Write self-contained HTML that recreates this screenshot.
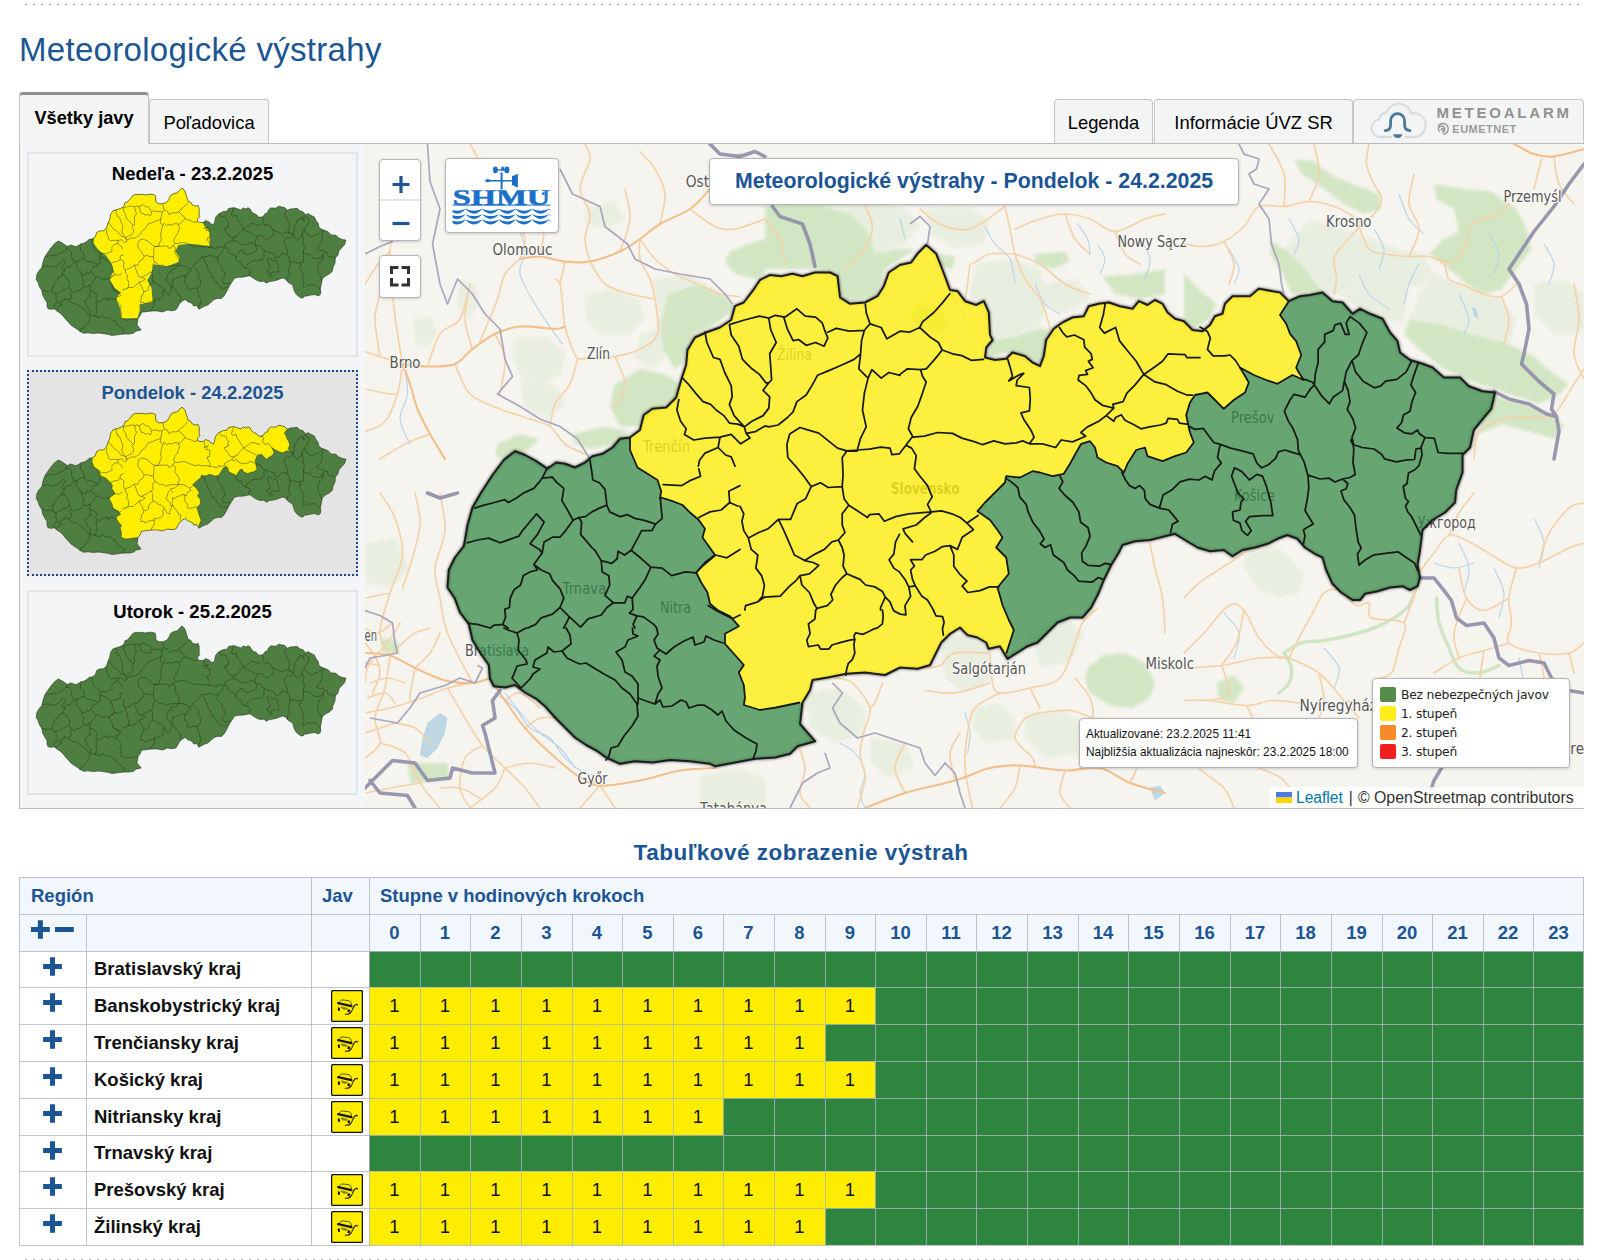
<!DOCTYPE html>
<html lang="sk">
<head>
<meta charset="utf-8">
<title>Meteorologické výstrahy</title>
<style>
html,body{margin:0;padding:0;background:#fff;}
body{width:1600px;height:1260px;position:relative;overflow:hidden;font-family:"Liberation Sans",Arial,Helvetica,sans-serif;color:#000;}
.abs{position:absolute;}
.dots{position:absolute;left:25px;width:1560px;height:1px;background:repeating-linear-gradient(90deg,#a8a8a8 0,#a8a8a8 2px,transparent 2px,transparent 8px);}
h1{position:absolute;left:19px;top:30px;margin:0;font-weight:400;font-size:33px;line-height:40px;color:#1b5594;white-space:nowrap;letter-spacing:0.3px;}
.tab{position:absolute;box-sizing:border-box;border:1px solid #c2c6c9;border-bottom:none;background:#f3f5f5;border-radius:4px 4px 0 0;font-size:18.4px;line-height:45px;text-align:center;white-space:nowrap;top:99px;height:45px;}
.tab.act{top:92px;height:52px;border-top:3px solid #8d8f91;font-weight:700;font-size:18.2px;line-height:47px;z-index:3;}
#panel{position:absolute;left:19px;top:143px;width:1565px;height:666px;box-sizing:border-box;border:1px solid #b9bcbf;background:#f3f5f6;}
.card{position:absolute;left:27px;width:331px;height:205px;box-sizing:border-box;border:2px solid #dfe5ec;background:#f3f5f6;}
.card.sel{border:2px dotted #1a4888;background:#e5e4e4;}
.card .t{position:absolute;left:0;right:0;top:9px;text-align:center;font-weight:700;font-size:18.5px;line-height:22px;}
.card.sel .t{color:#1b5594;}
#map{position:absolute;left:365px;top:144px;width:1219px;height:664px;overflow:hidden;background:#f2efe9;}
h2{position:absolute;left:0;width:1602px;top:839px;margin:0;text-align:center;font-size:22.5px;letter-spacing:0.5px;line-height:28px;font-weight:700;color:#1b5594;}
</style>
</head>
<body>
<div class="dots" style="top:4px"></div>
<h1>Meteorologické výstrahy</h1>

<div class="tab act" style="left:19px;width:130px;">Všetky javy</div>
<div class="tab" style="left:149px;width:120px;">Poľadovica</div>
<div class="tab" style="left:1054px;width:99px;">Legenda</div>
<div class="tab" style="left:1154px;width:199px;">Informácie ÚVZ SR</div>
<div class="tab" style="left:1353px;width:231px;" id="malarm"></div>
<svg class="abs" style="left:1353px;top:99px;z-index:4" width="231" height="45" viewBox="1353 99 231 45">
<path d="M1390.500 137 H1380 A8.800 8.800 0 0 1 1379 119.500 A9 9 0 0 1 1386.500 112.500 A13 13 0 0 1 1411.500 113.500 A10.500 10.500 0 0 1 1416 137 H1405" fill="none" stroke="#dadcdd" stroke-width="2.3" stroke-linecap="round"/>
<path d="M1385.200 130.600 C1388.800 130.400 1390.600 128.500 1390.600 125 L1390.600 120.600 A7 7 0 0 1 1404.600 120.600 L1404.600 125 C1404.600 128.500 1406.400 130.400 1410 130.600" fill="none" stroke="#4b7a98" stroke-width="2.8" stroke-linecap="round"/>
<path d="M1393.300 134.300 H1402.300 A4.500 3.800 0 0 1 1393.300 134.300Z" fill="#4b7a98"/>
<text x="1436.500" y="117.800" font-family="'Liberation Sans',Arial,sans-serif" font-weight="700" font-size="15" fill="#909294" textLength="132.500" lengthAdjust="spacing">METEOALARM</text>
<g fill="none" stroke="#9a9c9e" stroke-width="1.5" stroke-linecap="round"><path d="M1438.200 126.500 A5.300 5.300 0 1 1 1443.500 134"/><path d="M1439.500 131.500 A3.200 3.200 0 1 1 1443 132"/><path d="M1441.500 130 A1.200 1.200 0 1 1 1443 130.500"/></g>
<text x="1452.300" y="132.500" font-family="'Liberation Sans',Arial,sans-serif" font-weight="700" font-size="11" fill="#9a9c9e" textLength="64" lengthAdjust="spacing">EUMETNET</text>
</svg>

<div id="panel"></div>
<div class="card" style="top:152px;"><div class="t">Nedeľa - 23.2.2025</div></div>
<div class="card sel" style="top:370px;height:206px;"><div class="t" style="top:10px">Pondelok - 24.2.2025</div></div>
<div class="card" style="top:590px;"><div class="t">Utorok - 25.2.2025</div></div>

<svg class="abs" style="left:0;top:0;pointer-events:none" width="365" height="808" viewBox="0 0 365 808">
<path d="M42.14 265.97 L43.13 261.67 L44.89 256.68 L47.69 252.48 L51.29 247.59 L54.84 243.43 L58.27 241.06 L61.13 242.33 L64.3 244.31 L67.48 246.69 L70.13 245.01 L72.68 245.53 L75.54 246.77 L78.55 245.48 L80.85 243.78 L83.82 243.25 L86.85 241.58 L89.19 239.19 L92.14 238.97 L95.19 236.96 L96.56 232.68 L99.21 231.03 L103.24 230.87 L106.33 228.14 L108.09 223.15 L109.8 218.89 L110.44 214.56 L112.84 211.06 L116.2 209.8 L120.32 208.57 L123.73 206.58 L125.07 202.65 L127.71 201.72 L130.44 198.59 L132.83 195.46 L135.84 194.18 L139.09 194.71 L142.44 194.2 L145.32 195.06 L149.04 194.19 L153.43 194.44 L155.56 195.63 L155.93 201.84 L158.75 203.83 L163.16 203.7 L166.92 202.08 L168.93 199.28 L170.63 195.4 L174.03 193.41 L177.35 192.87 L179.34 190.45 L182.03 188.04 L184.81 190.75 L186.38 195.55 L188.23 201.47 L190.41 201.94 L192.43 204.96 L195.65 206.24 L197.93 205.27 L199.2 208.62 L199.18 215.16 L199.82 216.65 L197.85 218.72 L197.33 221.6 L200.22 222.49 L203.51 222.32 L205.46 220.6 L209.05 221.88 L211.14 223.82 L213.27 225.02 L214.55 222.18 L215.53 217.53 L217.94 214.41 L220.59 212.72 L223.6 211.44 L226.93 211.25 L228.56 208.43 L231.53 207.9 L234.47 207.69 L237.69 208.94 L241.3 209.9 L243.27 207.8 L245.75 209.04 L248.03 207.72 L250.16 208.94 L251.48 211.54 L253.56 213.49 L256.1 214.33 L258.49 217.02 L261.4 217.53 L263.7 215.86 L265.31 213.39 L267.54 212.82 L268.44 209.96 L270.76 207.88 L272.96 208.01 L275.88 208.17 L278.58 206.17 L282.55 207.09 L284.72 207.59 L287.15 210.25 L290.51 208.99 L293.45 208.8 L297.15 208.28 L299.93 210.97 L302.83 211.51 L305.57 214.95 L307.85 213.62 L310.69 215.23 L314.26 216.89 L316.22 220.98 L318.27 223.62 L318.81 226.94 L321.61 229.27 L325.2 230.58 L328.06 231.81 L331.2 234.9 L335.94 235.16 L338.36 237.83 L342.29 239.5 L345.92 240.08 L344.53 244.74 L342.6 246.78 L339.09 250.6 L337.68 255.61 L335.36 257.66 L335.06 262.73 L332.92 267.69 L332.36 271.3 L329.27 274.03 L325.49 276 L322.39 278.73 L321.32 284.49 L320.34 288.79 L320.86 292.46 L319.98 294.94 L317.72 295.91 L315.59 294.69 L311.91 294.86 L308.19 295.73 L304.49 296.28 L302.93 297.99 L300.73 297.87 L297.55 295.51 L295.16 292.85 L293.55 288.75 L292.68 285.07 L290.54 283.87 L287.73 281.88 L285.68 279.24 L282.82 277.97 L279.83 278.91 L276.82 280.2 L273.1 281.07 L269.4 281.59 L266.37 283.22 L263.93 281.28 L259.87 281.4 L256.28 280.12 L252.75 277.75 L249.93 275.79 L246.97 276.32 L242.51 277.18 L238.11 277.28 L234.38 278.17 L233.18 280.29 L230.74 283.78 L228.32 288.01 L226.65 291.55 L224.17 295.77 L221.46 298.53 L217.8 298.32 L214.06 299.57 L210.97 302.3 L207.87 305.03 L204.89 305.94 L201.85 307.6 L198.82 309.27 L196.84 305.49 L193.52 306.06 L192.87 304.2 L190.41 302.6 L187.53 301.72 L185.46 299.42 L182.43 301.08 L179.71 303.46 L178.07 306.28 L176.05 309.8 L172.33 310.69 L167.23 310.03 L162.72 311.96 L156.91 310.91 L151.39 310.98 L145.86 311.74 L141.43 312.22 L140.53 315.08 L138.12 318.58 L137.03 324.71 L138.72 326.95 L141.12 329.99 L135.92 331.16 L133.6 333.24 L129.15 334.06 L123.28 334.11 L117.36 334.86 L111.45 335.6 L110.03 334.83 L104.22 333.74 L98.39 333.07 L93.23 333.51 L88.13 332.85 L83.7 333.35 L79.77 331.3 L77.33 329.33 L74.13 327.35 L70.98 325 L68.23 321.94 L65.47 318.88 L62.74 315.44 L60.29 313.15 L57.12 311.14 L54.32 308.8 L51.35 309.37 L48.1 308.81 L47.11 306.6 L46.99 302.58 L44.63 298.82 L42.65 295.07 L41.84 290.32 L39.46 286.9 L38.23 282.85 L36.22 279.45 L36.9 274.4 L38.92 270.88 L41.69 267.75Z" fill="#4f7f40"/>
<path d="M95.19 236.96 L96.56 232.68 L99.21 231.03 L103.24 230.87 L106.33 228.14 L108.09 223.15 L109.8 218.89 L110.44 214.56 L112.84 211.06 L116.2 209.8 L120.32 208.57 L123.73 206.58 L125.07 202.65 L127.71 201.72 L130.44 198.59 L132.83 195.46 L135.84 194.18 L139.09 194.71 L142.44 194.2 L145.32 195.06 L149.04 194.19 L153.43 194.44 L155.56 195.63 L155.93 201.84 L158.75 203.83 L163.16 203.7 L166.92 202.08 L168.93 199.28 L170.63 195.4 L174.03 193.41 L177.35 192.87 L179.34 190.45 L182.03 188.04 L184.81 190.75 L186.38 195.55 L188.23 201.47 L190.41 201.94 L192.43 204.96 L195.65 206.24 L197.93 205.27 L199.2 208.62 L199.18 215.16 L199.82 216.65 L197.85 218.72 L197.33 221.6 L200.22 222.49 L203.51 222.32 L202.2 222.23 L209.75 231.94 L209.75 245.95 L190.34 243.8 L178.48 244.88 L175.25 251.34 L179.56 257.81 L178.48 262.12 L166.62 266.44 L153.69 264.28 L151.53 272.91 L147.22 280.45 L151.53 288 L152.61 302.02 L139.67 304.17 L139.67 310.64 L137.52 318.19 L121.34 318.19 L120.27 308.48 L115.95 298.78 L120.27 292.31 L114.88 288 L109.48 279.38 L113.8 270.75 L110.56 262.12 L106.25 255.66 L98.7 250.27 L93.31 242.72 L94.39 237.33Z" fill="#ffee00"/>
<path d="M45.52 256.89 L48.02 256.22 L51.38 255.59 L54.44 254.95 L55.47 255.82 L58.04 254.6 L60.02 253.34 L63.14 252.15 L64.89 250.36 L65.77 249.3 L66.98 247.19 L67.89 246.16 M65.77 249.3 L68.8 249.21 L69.8 250.63 L71.92 252.64 L71.15 256.14 L72.63 258.96 L74.1 262.03 L75.81 261.32 L77.73 261.16 L79.74 259.91 L82 258.93 L84.24 258.24 L84.94 260.2 L87.88 261.73 L90.1 261.3 L92.24 262.5 L94.95 263.2 L98.16 264.48 L100.19 262.94 L100.07 259.94 L99.98 256.94 M80.05 244.93 L80.4 248.49 L80.54 250.68 L82.42 251.6 L83.95 253.6 L84.24 258.24 M42.74 266.82 L45.8 266.18 L49.14 265.81 L52.33 267.36 L57.95 265.75 L59.12 264.19 L63.53 259.55 L65.58 262.11 L63.45 265.54 L61.09 268.14 L63.75 269.91 L64.5 271.03 M64.5 271.03 L65.25 267.82 L67.79 266.59 L69.98 266.72 L71.73 264.9 L74.1 262.03 M64.5 271.03 L61.86 274.17 L62.84 275.85 L60.62 276.28 L58.62 277.24 L57.65 279.92 L55.67 281.18 L54.41 283.55 L53.99 286.26 L52.58 286.73 L52.72 288.92 L51.77 291.05 M41.64 290.19 L44.37 290.63 L48.03 291.88 M48.17 291.89 L49.01 291.15 L51.77 291.05 L53.29 292.18 M61.86 274.17 L63.93 275.91 L66.35 277.15 L67.06 279.08 L69.11 281.67 L70.06 284.42 L68.79 287.09 L71.38 289.96 L74.48 293.13 L76.82 290.82 L80.72 289.93 L82.51 287.85 L84.49 286.6 L82.16 284.29 L83.71 281.38 L83.61 278.64 L81.74 277.46 L81.64 274.17 L80.16 271.35 L79.14 270.22 L76.05 266.24 L76.55 262.72 L75.81 261.32 M68.79 287.09 L66.49 288.87 L63.12 289.76 L61.37 291.58 L59.03 292.5 M71.38 289.96 L69.56 293.09 M81.64 274.17 L84.63 275.15 L86.35 273.91 L86.74 271.72 L88.6 272.93 L90.58 271.68 L93.05 267.71 L93.96 266.14 L96.97 266.31 L98.16 264.48 M90.58 271.68 L93.48 274.31 L96.06 276.89 L99.35 277.34 L101.97 279.67 L106.13 278.82 L109.13 279.25 L111.17 277.45 L115.19 274.42 M96.06 276.89 L94.22 280.34 L92.44 282.68 L90.07 285.54 L88.73 284.91 L87.8 286.78 L84.49 286.6 M90.07 285.54 L90.14 288.83 L89 289.84 L91.14 290.78 L89.89 293.18 L90.35 294.25 M91.14 290.78 L93.03 291.17 L95.94 293.52 L96.76 294.61 M138.91 240.6 L142.04 238.86 L144.74 239.82 L147.44 240.79 L150.03 243.11 L152.66 245.44 L155.36 246.4 L158.39 246.31 L161.97 246.25 L165.28 245.88 L168.01 246.3 L168.46 248.24 L170.67 248.1 L172.71 245.74 L174.51 243.66 M138.91 240.6 L137.92 243.54 L137.96 247.35 L140.26 250.21 L142.32 253.03 L144.31 256.16 L147.13 255.22 L149.24 256.7 L153.38 256.67 M155.36 246.4 L153.87 248.24 L153.85 253.15 L153.38 256.67 L153.73 260.24 L155 262.2 L152.92 264.55 L152.73 267.8 L153.42 270.01 L151.37 272.08 L152.35 274.32 L152.78 276.52 L152.3 279.75 L153.28 282.01 M144.31 256.16 L142.47 259.61 L139.93 260.8 L137.73 265.33 L134.16 265.13 L135.38 267.93 L136.83 271.82 L138.24 275.71 L141.16 277.5 L144.28 275.78 L147.11 274.57 L149.43 272.52 L151.37 272.08 M134.16 265.13 L130.99 267.69 L128.21 268.61 L125.07 270.06 L123.85 267.81 L123.46 265.05 L124.14 262.94 L123.16 260.68 M125.07 270.06 L125.7 273.38 L127.54 275.11 L126.76 278.87 L128.3 281.14 L128.96 283.91 L128.22 287.12 L126.74 288.7 L123.11 289.57 L122.81 290.83 M126.74 288.7 L128.75 287.44 L133.42 287.41 L136.07 284.86 L138.34 283.07 L139.53 281.77 L142.31 281.4 L145.21 279.09 L143.59 278.19 L141.16 277.5 M139.53 281.77 L139.93 284.52 L142 286.82 L143.18 290.17 L143.92 291.55 L146.98 290.9 L148.72 289.37 L148.25 287.72 L149.79 285.07 L151.85 283.01 L153.28 282.01 M143.92 291.55 L143.69 292 M162.5 293.05 L162.57 292.33 L164.12 289.42 L163.39 287.75 L161.28 286.27 L158.56 285.56 L157.02 283.85 L155.14 282.93 L153.28 282.01 M155 262.2 L157.08 263.68 L160.26 266.04 L160.86 265.26 L163.63 265.15 L165.14 267.38 L168.49 266.24 L172.4 265.64 L175.7 265.53 L178.99 265.46 L178.03 263.22 L179.53 261.13 L178.35 257.77 L176.31 254.93 L174.8 252.69 L175.55 248.9 L174.33 246.65 L172.71 245.74 M178.99 265.46 L182.05 265.34 L185.01 266.34 L187.4 267.55 L189.24 269.28 L191.03 271.3 L187.63 273.29 L186.05 276.75 L183.92 275.53 L181.71 275.69 L179.43 276.9 L176.62 277.85 L175.46 279.15 L172.15 278.97 M189.24 269.28 L192.64 267.29 M178.97 265.72 L176.99 266.97 L174.38 269.01 L170.48 269.89 L170.96 271.26 L173.01 273.84 M169.3 271.45 L168.07 273.57 L167.33 277.07 L165.86 278.62 L167.1 281.13 L168.67 282.32 L170.18 284.58 L171.17 286.82 L171.54 289.54 L169.74 292.18 L169.78 293.46 M166.24 293.26 L165.41 290.86 L164.12 289.42 M172.15 278.97 L173.16 280.91 L171.98 281.95 L172.38 284.71 L173.09 286.64 L171.17 286.82 M173.09 286.64 L174.84 289.73 L176.42 290.92 L177.9 293.74 L178.03 293.92 M183.92 275.53 L184.87 278.31 L184.68 281.56 L186.19 283.85 L188.26 286.12 L186.8 287.4 L188.33 289.41 L191.93 289.06 L194.74 288.14 L197.49 288.29 M115.86 209.69 L116.24 212.7 L117.89 217.16 L119.79 217.82 L120.94 221.69 L122.62 225.59 L122.72 228.88 L121.77 231.01 L122.96 234.33 L125.78 237.77 M123.12 207.92 L123.47 210.93 L125.51 214.3 L126.37 218.18 L128.96 221.06 L131.06 222.81 L132.82 225.35 L133.66 225.39 M123.12 207.92 L127.59 206.8 L132.04 205.94 L134.76 206.65 L136.71 205.94 L139.42 206.65 L143.13 204.41 L145.47 206.69 L148.46 207.15 L150.3 208.88 L150.98 211.36 L151.68 213.32 L150.46 215.69 L148.03 214.48 L145.24 215.14 L143.17 213.4 L141.49 213.56 L140.04 210.23 L139.16 206.63 M134.76 206.65 L135.09 209.95 L136.51 213.84 L134.42 217.01 L134.49 220.27 L134.53 224.63 L133.66 225.39 L131.87 227.47 L133.69 229.49 L133.24 232.72 L131.44 234.8 L128.07 236.24 L125.78 237.77 M151.78 211.7 L154.3 210.73 L158.11 211.76 L162.52 211.75 L164.26 209.95 L163.34 206.62 L163.22 204.17 M162.52 211.75 L161.52 214.68 L161.01 218.49 L159.01 220.01 L155.35 221.43 L151.42 222.84 L148.04 224.02 L146.22 226.91 L144.4 229.54 L141.57 231.3 L140.28 234.22 L138.55 235.75 L135.67 237.77 L132.92 238.17 L131.82 237.82 L128.98 239.32 L126.2 239.69 L125.78 237.77 M164.26 209.95 L167.48 211.21 L168.95 214.58 L172.91 212.59 M161.01 218.49 L160.23 222.81 L162.79 225.66 L164.04 223.28 L166.62 225.87 L168.94 224.37 L172.17 225.37 M162.79 225.66 L161.45 229.94 L160.61 234.81 L161.41 239.76 L159.58 242.92 L158.28 246.65 L154.97 246.47 M108.5 222.62 L110.04 224.36 L112.08 227.18 L114.13 229.77 L116.28 230.7 L117.82 232.41 L119.95 234.16 L121.46 236.43 L123.9 236.85 L125.78 237.77 M107.05 228.82 L106.32 231.77 L107.22 235.08 L108.73 237.37 L108.1 238.96 L110.76 240.74 L114.07 240.37 L118.47 240.36 L121.79 239.73 L124.38 242.61 L127.23 241.11 L126.2 239.69 M118.47 240.36 L117.74 243.31 L113.81 244.72 L112.05 246.8 L111.66 248.38 M117.74 243.31 L119.81 245.61 L121.41 246.25 L122.37 248.98 M188.08 202.56 L185.73 205.14 L183.12 207.72 L179.65 210.26 L178.74 211.84 L181.59 214.73 L183.95 216.49 L184.94 218.73 L187.89 220 L190.61 220.67 L193.25 222.18 L196.83 222.12 M172.91 212.59 L175.65 213.03 L178.74 211.84 M184.94 218.73 L182.59 221.33 L179.94 223.91 L178.29 224.08 L174.47 223.61 L172.18 225.11 M178.29 224.08 L178.73 225.99 L179.72 227.71 L178.45 230.89 L176.85 234.61 L174.73 237.78 L173.72 241 L174.95 243.52 L178.28 243.41 L182.17 242.55 L186.54 243.06 L189.21 244.57 L192.98 245.89 L195.13 246.82 L198.5 245.91 L201.72 246.93 L205.02 246.82 L206.98 246.38 L208.86 247.33 L212.69 247.54 L216.46 248.83 L218.23 246.75 L221.5 247.48 L225.43 246.05 L224.12 244.9 L226.14 243.38 L229.54 241.92 L231.8 240.41 L234.15 238.37 M203.97 222.52 L204.63 225.29 L205.06 227.47 L203.9 228.77 L207.28 227.07 L208.41 226.84 L206.37 228.64 L205.98 230.25 L209.81 231.02 L209.89 234.31 L209.42 237.8 L206.9 238.21 L207.64 240.17 L209.61 243.53 L210.35 245.49 L208.86 247.33 M219.6 214.12 L220.59 215.81 L221.64 216.97 L223.86 216.54 L226.53 218.06 L226.67 220.24 L228.46 222.26 L228.66 223.9 L227.52 224.36 L228.78 226.35 L226.54 227.04 L227.03 228.17 L224.56 228.29 L224.18 229.64 L226.28 231.39 L227.8 233.65 L228.8 235.62 L230.89 237.37 L234.15 238.37 L233.92 237.28 L236.98 236.63 L238.24 234.23 L240.56 232.18 L243.5 229.09 L246.05 227.61 L249.19 225.57 L250.95 223.52 L255.88 224.06 L256.39 224.9 L260.22 225.11 M233.44 207.8 L232.69 211.05 L231.39 214.78 L232.67 216.48 L236.04 215.04 L236.93 218.9 L238.97 221.75 L241.5 225.14 L243.5 229.09 L246.65 231.45 L249.88 232.44 L253.07 234.51 L255.76 235.77 L257.39 235.86 M231.8 240.41 L233.93 242.16 L234.52 241.12 L236.21 240.4 L237.22 242.08 L239.89 243.6 L241.73 244.81 L244.25 244.4 L247.56 244.03 L249.23 243.57 L249.86 242.24 L252.59 242.68 L253.09 243.78 L255.26 244.2 M304.79 215.72 L307.43 217.75 L309.46 220.6 L307.9 223.8 L306.6 226.98 L304.6 228.5 L305.49 231.83 L307.53 234.65 L310.72 236.75 L312.66 236.3 L314.11 235.02 L317.45 234.68 L320.29 232.66 L322.15 229.48 M304.6 228.5 L302.74 231.68 L302.06 234.34 L302.98 237.13 L303.35 240.43 L302.4 242.56 L303.88 245.37 L304.54 248.11 L303.3 250.78 L303.73 252.98 M323.41 254.63 L324.69 251.97 L323.11 250.81 L322.62 249.68 L320.92 250.69 L318.74 250.27 L316.62 248.79 L318.09 247.24 L318.75 245.1 L320.74 244.11 L321.45 241.44 L322.7 238.78 L321.45 236.53 L322.45 233.85 L324.02 230.13 M324.69 251.97 L327.42 252.39 L328.26 256.53 L331 256.95 L335.39 257.19 M289.77 260.92 L288.91 257.07 L287.43 253.7 L287.36 250.44 L286.17 247.09 L284.93 244.84 L284 242.05 L285.83 238.9 L287.04 237.34 L290.26 238.33 L292.04 235.99 L293.22 234.95 L292.71 234.11 L290.57 233.18 L289.75 233.13 M293.22 234.95 L295.23 238.32 L297.29 240.65 L298.48 238.79 L301.35 237.03 L302.06 234.34 M293.22 234.95 L293.67 231.72 L294.68 228.49 L294.9 224.7 L296.96 222.63 L297.09 220.46 L299.61 219.5 L300.26 217.91 L301.93 217.45 L303.11 220.8 L304.23 220.86 L303.57 217.54 L304.79 215.72 M260.74 216.25 L262.85 217.73 L263.56 219.66 L262.55 222.89 L264.08 224.86 L267.39 225.05 L269.04 224.88 L270.58 226.59 L271.83 228.84 M201.32 256.88 L202.89 258.07 L204.73 259.8 L205.13 262.56 L206.9 264.84 L207.33 267.04 L208.53 270.1 L210.32 272.64 L211.55 275.18 L210.36 276.48 L211.67 277.63 L213.36 276.91 L214 279.94 L216.92 282.28 L217.87 284.52 L219.71 286.25 L220.99 287.95 L224.81 288.45 L226.79 287.2 L228.13 287.82 M217.27 257.22 L217.99 258.92 L216.8 260.74 L218.32 262.74 L220.65 265.05 L222.16 267.87 L222.51 270.88 L224.61 272.63 L225.03 275.09 L223.76 277.75 L222.28 279.85 L222.4 282.33 L223.98 283.49 L227.27 283.94 L228.95 283.22 L230.58 283.6 M235.43 257.16 L236.39 259.39 L237.41 261.08 L239 261.98 L240.42 261.24 L241.71 262.68 L241.83 265.16 L243.11 266.86 L245.8 268.09 L248.52 268.79 L249.77 270.49 L251.05 272.19 L249.36 272.94 L248.67 275.34 M245.8 268.09 L247.11 264.35 L249.95 262.88 L252.27 260.83 L255.07 260.17 L257.8 260.59 L259.77 259.59 L261.63 260.8 L262.61 258.12 L264.64 256.06 L263.65 254.37 L264.37 251.68 L264.69 250.63 L262.82 249.97 L261.28 247.7 L260.02 245.71 L257.54 245.87 L255.95 244.96 M264.69 250.63 L267.64 251.87 L270.9 252.86 L274.13 253.88 L275.08 256.64 L276.38 258.08 L278.33 257.38 L280.63 255.59 L281.56 253.75 L283.52 253.31 L285.13 253.95 L287.83 254.91 M268.42 257.64 L270.55 258.86 L272.6 261.42 L274.89 259.92 L276.5 260.53 L277.42 263.31 L278.51 268.29 L278.85 272.11 L275.83 271.94 L271.98 272.02 L270.79 273.29 L272.27 276.11 L271.11 277.41 L269.55 275.95 L269.12 273.75 L267.24 272.83 L267.12 270.38 L269.35 269.95 L269.74 267.8 L270.65 266.77 L269.08 265.03 L268.15 262.27 L267.46 260.02 L268.42 257.64 M289.82 260.98 L293.27 262.28 L295.92 262.2 L297.61 263.4 L299.85 262.65 L302.07 262.34 L303.64 261.55 L303.2 258.04 L303.66 254.14 L303.51 252.82 L302.94 251.48 M289.82 260.98 L289.84 264.71 L289.17 268.16 L288.35 271.16 L289.54 273.41 L290.52 275.21 L288.5 276.2 L287.58 276.79 L287.92 278.55 L287.35 280.7 M299.85 262.65 L301.33 264.04 L300.77 265.55 L299.21 266.1 L299.94 268.76 L301.56 271.03 L302.75 273.28 L302.96 277.21 L303.38 281.16 L304.16 282.95 L302.97 284.62 L303.22 287.89 L305.06 286.49 L307.79 285.13 L311.76 284.88 L314.86 284.65 L316.96 286.28 L319.49 288.16 L320.24 290.39 M303.51 252.82 L306.09 253.84 L309.57 254.47 L311.68 256.1 L312.48 257.48 L315.94 258.55 L318.6 258.23 L321.24 258.18 L321.86 255.16 L323.39 255.01 L323.51 256.99 L322.46 259.99 L321.06 261.22 L319.26 261.99 L318.64 265.01 L317.48 265.81 L317.95 269.33 L318.78 270.25 L317.82 271.5 L318.4 273.28 L319.4 274.64 L320.57 277.32 L321.73 280 M52.06 292.11 L53.2 292.75 L55.78 293.77 L56.25 295.83 L55.79 298.71 L57.96 301.74 L58.18 302.92 L55.23 303.33 L54.21 305.6 L53.56 306.73 L56.02 309.77 M55.78 293.77 L58.5 292.47 L58.5 292.47 M70.23 293.12 L71.25 295.22 L71.39 297.84 L68.64 299.72 L66.28 299.88 L64.61 298.33 L64.22 300.06 L60.59 301.89 L59.89 303.88 L61.9 304.58 L59.77 305.91 L58.81 307.31 L56.02 309.77 M68.64 299.72 L69.99 301.83 L72.26 303.12 L73.69 303.78 L75.46 303.59 L77.72 305.17 L80.54 307.07 L83.66 308.99 L85.57 311.42 L87.81 313.29 L89.68 316.3 L89.77 319.8 L87.85 322.6 L85.34 325.36 L83.42 328.16 L81.34 328.63 L80.62 330.91 L79.67 332.02 M96.67 294.6 L97.01 296.37 L95.74 298.04 L96.48 300.41 L97.32 301.03 M89.62 294.21 L89.7 295.96 L91.13 296.62 L88.13 297.61 L87.14 299.59 L84.42 300.89 L86.04 303.31 L86.72 306.84 L88.7 308.11 L90.32 310.53 L90.08 314.58 L92.37 315.58 L94.95 316.6 L96 313.75 L97.27 312.08 L96.3 308.54 L96.18 305.62 L97.16 303.93 L95.47 302.67 L97.32 301.03 M97.32 301.03 L99.01 302.29 L101.47 300.39 L104.5 298.82 L107.2 297.81 L107.65 300.16 L110.33 299.44 L111.02 297.73 L113.29 299.02 L115.87 300.04 M90.08 314.58 L89.98 316.32 M94.95 316.6 L96.48 315.52 L97.24 317.6 L99.89 317.46 L102.62 315.87 L104.05 316.53 L104.83 318.31 L107.51 317.59 L109.27 317.69 L111.52 319.27 L113.19 320.82 L114.43 319.72 L115.43 322.69 L117.62 325.42 L120.99 327.94 L124.11 329.86 L123.7 331.87 L122.69 334.14 M143.54 291.99 L143.16 294.59 L141.17 295.9 L141.51 298.74 L140.43 300.57 L140.79 302.48 L143.68 302.17 L144.32 303.4 L146.72 303.53 L147.72 302.4 L150.13 301.84 L153.04 301.27 L154.49 301.12 M163.05 293.08 L163.19 294.78 L162.82 297.11 L161.32 298.19 L160.34 298.39 L158.41 299.22 L156.94 299.83 L154.83 299.25 L154.28 300.18 L154.49 301.12 L154.13 302.76 L154.25 305.12 L153.41 306.96 L152.14 308.08 L151.58 309.71 L151.25 311.35 M166.3 293.26 L166.37 293.53 L168.19 294.56 L169.85 294.89 L169.81 293.46 M177.91 293.91 L178.64 295.64 L180.52 295.98 L180.9 297.63 L180.32 299.51 L180.44 301.38 M111.74 249.17 L112.14 251.34 L108.78 252.52 L106.51 253.76 L101.02 253.19 M123.5 254.71 L120.13 256.15 L120.2 259.44 L122.6 260.65 M120.2 259.44 L117.59 261.47 L114.28 261.84 L110.91 263.28 M115.19 274.42 L118.45 275.41 L122.43 273.19 M112.14 288.96 L114.8 290.73 L119.06 293.18 L121.32 292.2 M92.14 238.97 L91.93 242.6 L93.83 247.79 L96.65 249.78 L99.47 251.74 L100.36 255.04 L99.88 257.23 L100.25 256.87 L103.5 258.12 L106.36 259.39 L108.42 261.69 L110.87 264 L112.54 266.65 L111.66 269.13 L113.35 271.76 L115.02 274.41 L111.97 276.42 L109.22 279.17 L110.52 282.15 L112.19 285.15 L112.73 288.47 L114.82 290.39 L118.37 292.39 L120.78 295.43 L116.61 297.4 L116.44 300.3 L119.18 303.71 L121.58 306.75 L119.99 308.84 L121.25 312.55 L121.39 316.19 L120.91 318.34 L125.56 320.05 L130.34 319.6 L137.39 318.54 M198.53 307.8 L201.15 301.03 L199.86 298.05 L198.27 293.6 L197.1 288.44 L200.64 284.66 L200.15 279.89 L197.4 276.83 L199.41 274.04 L198.07 271.78 L196.05 268.76 L192.54 266.01 L194.88 263.61 L197.98 260.88 L201.07 258.14 L201.53 256.34 L205.54 256.94 L209.31 255.32 L211.48 255.82 L215.07 257.1 L218.42 256.58 L220.4 253.79 L222.4 250.62 L224.01 248.18 L226.63 247.57 L227.99 249.47 L228.55 252.41 L231.01 254 L234.25 255.26 L235.99 257.19 L237.22 254.73 L240 250.87 L242.61 250.29 L243.2 252.85 L247.5 254.55 L251.24 253.3 L254.58 252.41 L256.97 249.64 L256.03 246.68 L255.76 245.21 L255.21 241.55 L256.54 237.99 L258.13 235.9 L261.82 235.38 L263.2 236.91 L266.32 240.37 L269.39 237.98 L272.79 235.99 L274.07 233.16 L271.75 228.67 L275.66 231.06 L279.21 232.72 L282.45 234 L286.98 231.7 L290.2 233.33 L288.87 231.08 L288.19 229.58 L289.87 226.04 L288.64 221.96 L286.95 219.72 L286.01 216.76 L284.34 214.11 L287.15 210.25" fill="none" stroke="#1c2a12" stroke-opacity="0.75" stroke-width="0.6" stroke-linejoin="round"/>
<path d="M42.14 265.97 L43.13 261.67 L44.89 256.68 L47.69 252.48 L51.29 247.59 L54.84 243.43 L58.27 241.06 L61.13 242.33 L64.3 244.31 L67.48 246.69 L70.13 245.01 L72.68 245.53 L75.54 246.77 L78.55 245.48 L80.85 243.78 L83.82 243.25 L86.85 241.58 L89.19 239.19 L92.14 238.97 L95.19 236.96 L96.56 232.68 L99.21 231.03 L103.24 230.87 L106.33 228.14 L108.09 223.15 L109.8 218.89 L110.44 214.56 L112.84 211.06 L116.2 209.8 L120.32 208.57 L123.73 206.58 L125.07 202.65 L127.71 201.72 L130.44 198.59 L132.83 195.46 L135.84 194.18 L139.09 194.71 L142.44 194.2 L145.32 195.06 L149.04 194.19 L153.43 194.44 L155.56 195.63 L155.93 201.84 L158.75 203.83 L163.16 203.7 L166.92 202.08 L168.93 199.28 L170.63 195.4 L174.03 193.41 L177.35 192.87 L179.34 190.45 L182.03 188.04 L184.81 190.75 L186.38 195.55 L188.23 201.47 L190.41 201.94 L192.43 204.96 L195.65 206.24 L197.93 205.27 L199.2 208.62 L199.18 215.16 L199.82 216.65 L197.85 218.72 L197.33 221.6 L200.22 222.49 L203.51 222.32 L205.46 220.6 L209.05 221.88 L211.14 223.82 L213.27 225.02 L214.55 222.18 L215.53 217.53 L217.94 214.41 L220.59 212.72 L223.6 211.44 L226.93 211.25 L228.56 208.43 L231.53 207.9 L234.47 207.69 L237.69 208.94 L241.3 209.9 L243.27 207.8 L245.75 209.04 L248.03 207.72 L250.16 208.94 L251.48 211.54 L253.56 213.49 L256.1 214.33 L258.49 217.02 L261.4 217.53 L263.7 215.86 L265.31 213.39 L267.54 212.82 L268.44 209.96 L270.76 207.88 L272.96 208.01 L275.88 208.17 L278.58 206.17 L282.55 207.09 L284.72 207.59 L287.15 210.25 L290.51 208.99 L293.45 208.8 L297.15 208.28 L299.93 210.97 L302.83 211.51 L305.57 214.95 L307.85 213.62 L310.69 215.23 L314.26 216.89 L316.22 220.98 L318.27 223.62 L318.81 226.94 L321.61 229.27 L325.2 230.58 L328.06 231.81 L331.2 234.9 L335.94 235.16 L338.36 237.83 L342.29 239.5 L345.92 240.08 L344.53 244.74 L342.6 246.78 L339.09 250.6 L337.68 255.61 L335.36 257.66 L335.06 262.73 L332.92 267.69 L332.36 271.3 L329.27 274.03 L325.49 276 L322.39 278.73 L321.32 284.49 L320.34 288.79 L320.86 292.46 L319.98 294.94 L317.72 295.91 L315.59 294.69 L311.91 294.86 L308.19 295.73 L304.49 296.28 L302.93 297.99 L300.73 297.87 L297.55 295.51 L295.16 292.85 L293.55 288.75 L292.68 285.07 L290.54 283.87 L287.73 281.88 L285.68 279.24 L282.82 277.97 L279.83 278.91 L276.82 280.2 L273.1 281.07 L269.4 281.59 L266.37 283.22 L263.93 281.28 L259.87 281.4 L256.28 280.12 L252.75 277.75 L249.93 275.79 L246.97 276.32 L242.51 277.18 L238.11 277.28 L234.38 278.17 L233.18 280.29 L230.74 283.78 L228.32 288.01 L226.65 291.55 L224.17 295.77 L221.46 298.53 L217.8 298.32 L214.06 299.57 L210.97 302.3 L207.87 305.03 L204.89 305.94 L201.85 307.6 L198.82 309.27 L196.84 305.49 L193.52 306.06 L192.87 304.2 L190.41 302.6 L187.53 301.72 L185.46 299.42 L182.43 301.08 L179.71 303.46 L178.07 306.28 L176.05 309.8 L172.33 310.69 L167.23 310.03 L162.72 311.96 L156.91 310.91 L151.39 310.98 L145.86 311.74 L141.43 312.22 L140.53 315.08 L138.12 318.58 L137.03 324.71 L138.72 326.95 L141.12 329.99 L135.92 331.16 L133.6 333.24 L129.15 334.06 L123.28 334.11 L117.36 334.86 L111.45 335.6 L110.03 334.83 L104.22 333.74 L98.39 333.07 L93.23 333.51 L88.13 332.85 L83.7 333.35 L79.77 331.3 L77.33 329.33 L74.13 327.35 L70.98 325 L68.23 321.94 L65.47 318.88 L62.74 315.44 L60.29 313.15 L57.12 311.14 L54.32 308.8 L51.35 309.37 L48.1 308.81 L47.11 306.6 L46.99 302.58 L44.63 298.82 L42.65 295.07 L41.84 290.32 L39.46 286.9 L38.23 282.85 L36.22 279.45 L36.9 274.4 L38.92 270.88 L41.69 267.75Z" fill="none" stroke="#1c2a12" stroke-opacity="0.8" stroke-width="0.7" stroke-linejoin="round"/>
<path d="M42.14 484.97 L43.13 480.67 L44.89 475.68 L47.69 471.48 L51.29 466.59 L54.84 462.43 L58.27 460.06 L61.13 461.33 L64.3 463.31 L67.48 465.69 L70.13 464.01 L72.68 464.53 L75.54 465.77 L78.55 464.48 L80.85 462.78 L83.82 462.25 L86.85 460.58 L89.19 458.19 L92.14 457.97 L95.19 455.96 L96.56 451.68 L99.21 450.03 L103.24 449.87 L106.33 447.14 L108.09 442.15 L109.8 437.89 L110.44 433.56 L112.84 430.06 L116.2 428.8 L120.32 427.57 L123.73 425.58 L125.07 421.65 L127.71 420.72 L130.44 417.59 L132.83 414.46 L135.84 413.18 L139.09 413.71 L142.44 413.2 L145.32 414.06 L149.04 413.19 L153.43 413.44 L155.56 414.63 L155.93 420.84 L158.75 422.83 L163.16 422.7 L166.92 421.08 L168.93 418.28 L170.63 414.4 L174.03 412.41 L177.35 411.87 L179.34 409.45 L182.03 407.04 L184.81 409.75 L186.38 414.55 L188.23 420.47 L190.41 420.94 L192.43 423.96 L195.65 425.24 L197.93 424.27 L199.2 427.62 L199.18 434.16 L199.82 435.65 L197.85 437.72 L197.33 440.6 L200.22 441.49 L203.51 441.32 L205.46 439.6 L209.05 440.88 L211.14 442.82 L213.27 444.02 L214.55 441.18 L215.53 436.53 L217.94 433.41 L220.59 431.72 L223.6 430.44 L226.93 430.25 L228.56 427.43 L231.53 426.9 L234.47 426.69 L237.69 427.94 L241.3 428.9 L243.27 426.8 L245.75 428.04 L248.03 426.72 L250.16 427.94 L251.48 430.54 L253.56 432.49 L256.1 433.33 L258.49 436.02 L261.4 436.53 L263.7 434.86 L265.31 432.39 L267.54 431.82 L268.44 428.96 L270.76 426.88 L272.96 427.01 L275.88 427.17 L278.58 425.17 L282.55 426.09 L284.72 426.59 L287.15 429.25 L290.51 427.99 L293.45 427.8 L297.15 427.28 L299.93 429.97 L302.83 430.51 L305.57 433.95 L307.85 432.62 L310.69 434.23 L314.26 435.89 L316.22 439.98 L318.27 442.62 L318.81 445.94 L321.61 448.27 L325.2 449.58 L328.06 450.81 L331.2 453.9 L335.94 454.16 L338.36 456.83 L342.29 458.5 L345.92 459.08 L344.53 463.74 L342.6 465.78 L339.09 469.6 L337.68 474.61 L335.36 476.66 L335.06 481.73 L332.92 486.69 L332.36 490.3 L329.27 493.03 L325.49 495 L322.39 497.73 L321.32 503.49 L320.34 507.79 L320.86 511.46 L319.98 513.94 L317.72 514.91 L315.59 513.69 L311.91 513.86 L308.19 514.73 L304.49 515.28 L302.93 516.99 L300.73 516.87 L297.55 514.51 L295.16 511.85 L293.55 507.75 L292.68 504.07 L290.54 502.87 L287.73 500.88 L285.68 498.24 L282.82 496.97 L279.83 497.91 L276.82 499.2 L273.1 500.07 L269.4 500.59 L266.37 502.22 L263.93 500.28 L259.87 500.4 L256.28 499.12 L252.75 496.75 L249.93 494.79 L246.97 495.32 L242.51 496.18 L238.11 496.28 L234.38 497.17 L233.18 499.29 L230.74 502.78 L228.32 507.01 L226.65 510.55 L224.17 514.77 L221.46 517.53 L217.8 517.32 L214.06 518.57 L210.97 521.3 L207.87 524.03 L204.89 524.94 L201.85 526.6 L198.82 528.27 L196.84 524.49 L193.52 525.06 L192.87 523.2 L190.41 521.6 L187.53 520.72 L185.46 518.42 L182.43 520.08 L179.71 522.46 L178.07 525.28 L176.05 528.8 L172.33 529.69 L167.23 529.03 L162.72 530.96 L156.91 529.91 L151.39 529.98 L145.86 530.74 L141.43 531.22 L140.53 534.08 L138.12 537.58 L137.03 543.71 L138.72 545.95 L141.12 548.99 L135.92 550.16 L133.6 552.24 L129.15 553.06 L123.28 553.11 L117.36 553.86 L111.45 554.6 L110.03 553.83 L104.22 552.74 L98.39 552.07 L93.23 552.51 L88.13 551.85 L83.7 552.35 L79.77 550.3 L77.33 548.33 L74.13 546.35 L70.98 544 L68.23 540.94 L65.47 537.88 L62.74 534.44 L60.29 532.15 L57.12 530.14 L54.32 527.8 L51.35 528.37 L48.1 527.81 L47.11 525.6 L46.99 521.58 L44.63 517.82 L42.65 514.07 L41.84 509.32 L39.46 505.9 L38.23 501.85 L36.22 498.45 L36.9 493.4 L38.92 489.88 L41.69 486.75Z" fill="#4f7f40"/>
<path d="M92.14 457.97 L95.19 455.96 L96.56 451.68 L99.21 450.03 L103.24 449.87 L106.33 447.14 L108.09 442.15 L109.8 437.89 L110.44 433.56 L112.84 430.06 L116.2 428.8 L120.32 427.57 L123.73 425.58 L125.07 421.65 L127.71 420.72 L130.44 417.59 L132.83 414.46 L135.84 413.18 L139.09 413.71 L142.44 413.2 L145.32 414.06 L149.04 413.19 L153.43 413.44 L155.56 414.63 L155.93 420.84 L158.75 422.83 L163.16 422.7 L166.92 421.08 L168.93 418.28 L170.63 414.4 L174.03 412.41 L177.35 411.87 L179.34 409.45 L182.03 407.04 L184.81 409.75 L186.38 414.55 L188.23 420.47 L190.41 420.94 L192.43 423.96 L195.65 425.24 L197.93 424.27 L199.2 427.62 L199.18 434.16 L199.82 435.65 L197.85 437.72 L197.33 440.6 L200.22 441.49 L203.51 441.32 L205.46 439.6 L209.05 440.88 L211.14 442.82 L213.27 444.02 L214.55 441.18 L215.53 436.53 L217.94 433.41 L220.59 431.72 L223.6 430.44 L226.93 430.25 L228.56 427.43 L231.53 426.9 L234.47 426.69 L237.69 427.94 L241.3 428.9 L243.27 426.8 L245.75 428.04 L248.03 426.72 L250.16 427.94 L251.48 430.54 L253.56 432.49 L256.1 433.33 L258.49 436.02 L261.4 436.53 L263.7 434.86 L265.31 432.39 L267.54 431.82 L268.44 428.96 L270.76 426.88 L272.96 427.01 L275.88 427.17 L278.58 425.17 L282.55 426.09 L284.72 426.59 L287.15 429.25 L287.15 429.25 L284.34 433.11 L286.01 435.76 L286.95 438.72 L288.64 440.96 L289.87 445.04 L288.19 448.58 L288.87 450.08 L290.2 452.33 L286.98 450.7 L282.45 453 L279.21 451.72 L275.66 450.06 L271.75 447.67 L274.07 452.16 L272.79 454.99 L269.39 456.98 L266.32 459.37 L263.2 455.91 L261.82 454.38 L258.13 454.9 L256.54 456.99 L255.21 460.55 L255.76 464.21 L256.03 465.68 L256.97 468.64 L254.58 471.41 L251.24 472.3 L247.5 473.55 L243.2 471.85 L242.61 469.29 L240 469.87 L237.22 473.73 L235.99 476.19 L234.25 474.26 L231.01 473 L228.55 471.41 L227.99 468.47 L226.63 466.57 L224.01 467.18 L222.4 469.62 L220.4 472.79 L218.42 475.58 L215.07 476.1 L211.48 474.82 L209.31 474.32 L205.54 475.94 L201.53 475.34 L201.07 477.14 L197.98 479.88 L194.88 482.61 L192.54 485.01 L196.05 487.76 L198.07 490.78 L199.41 493.04 L197.4 495.83 L200.15 498.89 L200.64 503.66 L197.1 507.44 L198.27 512.6 L199.86 517.05 L201.15 520.03 L198.53 526.8 L198.82 528.27 L196.84 524.49 L193.52 525.06 L192.87 523.2 L190.41 521.6 L187.53 520.72 L185.46 518.42 L182.43 520.08 L179.71 522.46 L178.07 525.28 L176.05 528.8 L172.33 529.69 L167.23 529.03 L162.72 530.96 L156.91 529.91 L151.39 529.98 L145.86 530.74 L141.43 531.22 L140.53 534.08 L138.12 537.58 L137.39 537.54 L130.34 538.6 L125.56 539.05 L120.91 537.34 L121.39 535.19 L121.25 531.55 L119.99 527.84 L121.58 525.75 L119.18 522.71 L116.44 519.3 L116.61 516.4 L120.78 514.43 L118.37 511.39 L114.82 509.39 L112.73 507.47 L112.19 504.15 L110.52 501.15 L109.22 498.17 L111.97 495.42 L115.02 493.41 L113.35 490.76 L111.66 488.13 L112.54 485.65 L110.87 483 L108.42 480.69 L106.36 478.39 L103.5 477.12 L100.25 475.87 L99.88 476.23 L100.36 474.04 L99.47 470.74 L96.65 468.78 L93.83 466.79 L91.93 461.6 L92.14 457.97Z" fill="#ffee00"/>
<path d="M45.52 475.89 L48.02 475.22 L51.38 474.59 L54.44 473.95 L55.47 474.82 L58.04 473.6 L60.02 472.34 L63.14 471.15 L64.89 469.36 L65.77 468.3 L66.98 466.19 L67.89 465.16 M65.77 468.3 L68.8 468.21 L69.8 469.63 L71.92 471.64 L71.15 475.14 L72.63 477.96 L74.1 481.03 L75.81 480.32 L77.73 480.16 L79.74 478.91 L82 477.93 L84.24 477.24 L84.94 479.2 L87.88 480.73 L90.1 480.3 L92.24 481.5 L94.95 482.2 L98.16 483.48 L100.19 481.94 L100.07 478.94 L99.98 475.94 M80.05 463.93 L80.4 467.49 L80.54 469.68 L82.42 470.6 L83.95 472.6 L84.24 477.24 M42.74 485.82 L45.8 485.18 L49.14 484.81 L52.33 486.36 L57.95 484.75 L59.12 483.19 L63.53 478.55 L65.58 481.11 L63.45 484.54 L61.09 487.14 L63.75 488.91 L64.5 490.03 M64.5 490.03 L65.25 486.82 L67.79 485.59 L69.98 485.72 L71.73 483.9 L74.1 481.03 M64.5 490.03 L61.86 493.17 L62.84 494.85 L60.62 495.28 L58.62 496.24 L57.65 498.92 L55.67 500.18 L54.41 502.55 L53.99 505.26 L52.58 505.73 L52.72 507.92 L51.77 510.05 M41.64 509.19 L44.37 509.63 L48.03 510.88 M48.17 510.89 L49.01 510.15 L51.77 510.05 L53.29 511.18 M61.86 493.17 L63.93 494.91 L66.35 496.15 L67.06 498.08 L69.11 500.67 L70.06 503.42 L68.79 506.09 L71.38 508.96 L74.48 512.13 L76.82 509.82 L80.72 508.93 L82.51 506.85 L84.49 505.6 L82.16 503.29 L83.71 500.38 L83.61 497.64 L81.74 496.46 L81.64 493.17 L80.16 490.35 L79.14 489.22 L76.05 485.24 L76.55 481.72 L75.81 480.32 M68.79 506.09 L66.49 507.87 L63.12 508.76 L61.37 510.58 L59.03 511.5 M71.38 508.96 L69.56 512.09 M81.64 493.17 L84.63 494.15 L86.35 492.91 L86.74 490.72 L88.6 491.93 L90.58 490.68 L93.05 486.71 L93.96 485.14 L96.97 485.31 L98.16 483.48 M90.58 490.68 L93.48 493.31 L96.06 495.89 L99.35 496.34 L101.97 498.67 L106.13 497.82 L109.13 498.25 L111.17 496.45 L115.19 493.42 M96.06 495.89 L94.22 499.34 L92.44 501.68 L90.07 504.54 L88.73 503.91 L87.8 505.78 L84.49 505.6 M90.07 504.54 L90.14 507.83 L89 508.84 L91.14 509.78 L89.89 512.18 L90.35 513.25 M91.14 509.78 L93.03 510.17 L95.94 512.52 L96.76 513.61 M138.91 459.6 L142.04 457.86 L144.74 458.82 L147.44 459.79 L150.03 462.11 L152.66 464.44 L155.36 465.4 L158.39 465.31 L161.97 465.25 L165.28 464.88 L168.01 465.3 L168.46 467.24 L170.67 467.1 L172.71 464.74 L174.51 462.66 M138.91 459.6 L137.92 462.54 L137.96 466.35 L140.26 469.21 L142.32 472.03 L144.31 475.16 L147.13 474.22 L149.24 475.7 L153.38 475.67 M155.36 465.4 L153.87 467.24 L153.85 472.15 L153.38 475.67 L153.73 479.24 L155 481.2 L152.92 483.55 L152.73 486.8 L153.42 489.01 L151.37 491.08 L152.35 493.32 L152.78 495.52 L152.3 498.75 L153.28 501.01 M144.31 475.16 L142.47 478.61 L139.93 479.8 L137.73 484.33 L134.16 484.13 L135.38 486.93 L136.83 490.82 L138.24 494.71 L141.16 496.5 L144.28 494.78 L147.11 493.57 L149.43 491.52 L151.37 491.08 M134.16 484.13 L130.99 486.69 L128.21 487.61 L125.07 489.06 L123.85 486.81 L123.46 484.05 L124.14 481.94 L123.16 479.68 M125.07 489.06 L125.7 492.38 L127.54 494.11 L126.76 497.87 L128.3 500.14 L128.96 502.91 L128.22 506.12 L126.74 507.7 L123.11 508.57 L122.81 509.83 M126.74 507.7 L128.75 506.44 L133.42 506.41 L136.07 503.86 L138.34 502.07 L139.53 500.77 L142.31 500.4 L145.21 498.09 L143.59 497.19 L141.16 496.5 M139.53 500.77 L139.93 503.52 L142 505.82 L143.18 509.17 L143.92 510.55 L146.98 509.9 L148.72 508.37 L148.25 506.72 L149.79 504.07 L151.85 502.01 L153.28 501.01 M143.92 510.55 L143.69 511 M162.5 512.05 L162.57 511.33 L164.12 508.42 L163.39 506.75 L161.28 505.27 L158.56 504.56 L157.02 502.85 L155.14 501.93 L153.28 501.01 M155 481.2 L157.08 482.68 L160.26 485.04 L160.86 484.26 L163.63 484.15 L165.14 486.38 L168.49 485.24 L172.4 484.64 L175.7 484.53 L178.99 484.46 L178.03 482.22 L179.53 480.13 L178.35 476.77 L176.31 473.93 L174.8 471.69 L175.55 467.9 L174.33 465.65 L172.71 464.74 M178.99 484.46 L182.05 484.34 L185.01 485.34 L187.4 486.55 L189.24 488.28 L191.03 490.3 L187.63 492.29 L186.05 495.75 L183.92 494.53 L181.71 494.69 L179.43 495.9 L176.62 496.85 L175.46 498.15 L172.15 497.97 M189.24 488.28 L192.64 486.29 M178.97 484.72 L176.99 485.97 L174.38 488.01 L170.48 488.89 L170.96 490.26 L173.01 492.84 M169.3 490.45 L168.07 492.57 L167.33 496.07 L165.86 497.62 L167.1 500.13 L168.67 501.32 L170.18 503.58 L171.17 505.82 L171.54 508.54 L169.74 511.18 L169.78 512.46 M166.24 512.26 L165.41 509.86 L164.12 508.42 M172.15 497.97 L173.16 499.91 L171.98 500.95 L172.38 503.71 L173.09 505.64 L171.17 505.82 M173.09 505.64 L174.84 508.73 L176.42 509.92 L177.9 512.74 L178.03 512.92 M183.92 494.53 L184.87 497.31 L184.68 500.56 L186.19 502.85 L188.26 505.12 L186.8 506.4 L188.33 508.41 L191.93 508.06 L194.74 507.14 L197.49 507.29 M115.86 428.69 L116.24 431.7 L117.89 436.16 L119.79 436.82 L120.94 440.69 L122.62 444.59 L122.72 447.88 L121.77 450.01 L122.96 453.33 L125.78 456.77 M123.12 426.92 L123.47 429.93 L125.51 433.3 L126.37 437.18 L128.96 440.06 L131.06 441.81 L132.82 444.35 L133.66 444.39 M123.12 426.92 L127.59 425.8 L132.04 424.94 L134.76 425.65 L136.71 424.94 L139.42 425.65 L143.13 423.41 L145.47 425.69 L148.46 426.15 L150.3 427.88 L150.98 430.36 L151.68 432.32 L150.46 434.69 L148.03 433.48 L145.24 434.14 L143.17 432.4 L141.49 432.56 L140.04 429.23 L139.16 425.63 M134.76 425.65 L135.09 428.95 L136.51 432.84 L134.42 436.01 L134.49 439.27 L134.53 443.63 L133.66 444.39 L131.87 446.47 L133.69 448.49 L133.24 451.72 L131.44 453.8 L128.07 455.24 L125.78 456.77 M151.78 430.7 L154.3 429.73 L158.11 430.76 L162.52 430.75 L164.26 428.95 L163.34 425.62 L163.22 423.17 M162.52 430.75 L161.52 433.68 L161.01 437.49 L159.01 439.01 L155.35 440.43 L151.42 441.84 L148.04 443.02 L146.22 445.91 L144.4 448.54 L141.57 450.3 L140.28 453.22 L138.55 454.75 L135.67 456.77 L132.92 457.17 L131.82 456.82 L128.98 458.32 L126.2 458.69 L125.78 456.77 M164.26 428.95 L167.48 430.21 L168.95 433.58 L172.91 431.59 M161.01 437.49 L160.23 441.81 L162.79 444.66 L164.04 442.28 L166.62 444.87 L168.94 443.37 L172.17 444.37 M162.79 444.66 L161.45 448.94 L160.61 453.81 L161.41 458.76 L159.58 461.92 L158.28 465.65 L154.97 465.47 M108.5 441.62 L110.04 443.36 L112.08 446.18 L114.13 448.77 L116.28 449.7 L117.82 451.41 L119.95 453.16 L121.46 455.43 L123.9 455.85 L125.78 456.77 M107.05 447.82 L106.32 450.77 L107.22 454.08 L108.73 456.37 L108.1 457.96 L110.76 459.74 L114.07 459.37 L118.47 459.36 L121.79 458.73 L124.38 461.61 L127.23 460.11 L126.2 458.69 M118.47 459.36 L117.74 462.31 L113.81 463.72 L112.05 465.8 L111.66 467.38 M117.74 462.31 L119.81 464.61 L121.41 465.25 L122.37 467.98 M188.08 421.56 L185.73 424.14 L183.12 426.72 L179.65 429.26 L178.74 430.84 L181.59 433.73 L183.95 435.49 L184.94 437.73 L187.89 439 L190.61 439.67 L193.25 441.18 L196.83 441.12 M172.91 431.59 L175.65 432.03 L178.74 430.84 M184.94 437.73 L182.59 440.33 L179.94 442.91 L178.29 443.08 L174.47 442.61 L172.18 444.11 M178.29 443.08 L178.73 444.99 L179.72 446.71 L178.45 449.89 L176.85 453.61 L174.73 456.78 L173.72 460 L174.95 462.52 L178.28 462.41 L182.17 461.55 L186.54 462.06 L189.21 463.57 L192.98 464.89 L195.13 465.82 L198.5 464.91 L201.72 465.93 L205.02 465.82 L206.98 465.38 L208.86 466.33 L212.69 466.54 L216.46 467.83 L218.23 465.75 L221.5 466.48 L225.43 465.05 L224.12 463.9 L226.14 462.38 L229.54 460.92 L231.8 459.41 L234.15 457.37 M203.97 441.52 L204.63 444.29 L205.06 446.47 L203.9 447.77 L207.28 446.07 L208.41 445.84 L206.37 447.64 L205.98 449.25 L209.81 450.02 L209.89 453.31 L209.42 456.8 L206.9 457.21 L207.64 459.17 L209.61 462.53 L210.35 464.49 L208.86 466.33 M219.6 433.12 L220.59 434.81 L221.64 435.97 L223.86 435.54 L226.53 437.06 L226.67 439.24 L228.46 441.26 L228.66 442.9 L227.52 443.36 L228.78 445.35 L226.54 446.04 L227.03 447.17 L224.56 447.29 L224.18 448.64 L226.28 450.39 L227.8 452.65 L228.8 454.62 L230.89 456.37 L234.15 457.37 L233.92 456.28 L236.98 455.63 L238.24 453.23 L240.56 451.18 L243.5 448.09 L246.05 446.61 L249.19 444.57 L250.95 442.52 L255.88 443.06 L256.39 443.9 L260.22 444.11 M233.44 426.8 L232.69 430.05 L231.39 433.78 L232.67 435.48 L236.04 434.04 L236.93 437.9 L238.97 440.75 L241.5 444.14 L243.5 448.09 L246.65 450.45 L249.88 451.44 L253.07 453.51 L255.76 454.77 L257.39 454.86 M231.8 459.41 L233.93 461.16 L234.52 460.12 L236.21 459.4 L237.22 461.08 L239.89 462.6 L241.73 463.81 L244.25 463.4 L247.56 463.03 L249.23 462.57 L249.86 461.24 L252.59 461.68 L253.09 462.78 L255.26 463.2 M304.79 434.72 L307.43 436.75 L309.46 439.6 L307.9 442.8 L306.6 445.98 L304.6 447.5 L305.49 450.83 L307.53 453.65 L310.72 455.75 L312.66 455.3 L314.11 454.02 L317.45 453.68 L320.29 451.66 L322.15 448.48 M304.6 447.5 L302.74 450.68 L302.06 453.34 L302.98 456.13 L303.35 459.43 L302.4 461.56 L303.88 464.37 L304.54 467.11 L303.3 469.78 L303.73 471.98 M323.41 473.63 L324.69 470.97 L323.11 469.81 L322.62 468.68 L320.92 469.69 L318.74 469.27 L316.62 467.79 L318.09 466.24 L318.75 464.1 L320.74 463.11 L321.45 460.44 L322.7 457.78 L321.45 455.53 L322.45 452.85 L324.02 449.13 M324.69 470.97 L327.42 471.39 L328.26 475.53 L331 475.95 L335.39 476.19 M289.77 479.92 L288.91 476.07 L287.43 472.7 L287.36 469.44 L286.17 466.09 L284.93 463.84 L284 461.05 L285.83 457.9 L287.04 456.34 L290.26 457.33 L292.04 454.99 L293.22 453.95 L292.71 453.11 L290.57 452.18 L289.75 452.13 M293.22 453.95 L295.23 457.32 L297.29 459.65 L298.48 457.79 L301.35 456.03 L302.06 453.34 M293.22 453.95 L293.67 450.72 L294.68 447.49 L294.9 443.7 L296.96 441.63 L297.09 439.46 L299.61 438.5 L300.26 436.91 L301.93 436.45 L303.11 439.8 L304.23 439.86 L303.57 436.54 L304.79 434.72 M260.74 435.25 L262.85 436.73 L263.56 438.66 L262.55 441.89 L264.08 443.86 L267.39 444.05 L269.04 443.88 L270.58 445.59 L271.83 447.84 M201.32 475.88 L202.89 477.07 L204.73 478.8 L205.13 481.56 L206.9 483.84 L207.33 486.04 L208.53 489.1 L210.32 491.64 L211.55 494.18 L210.36 495.48 L211.67 496.63 L213.36 495.91 L214 498.94 L216.92 501.28 L217.87 503.52 L219.71 505.25 L220.99 506.95 L224.81 507.45 L226.79 506.2 L228.13 506.82 M217.27 476.22 L217.99 477.92 L216.8 479.74 L218.32 481.74 L220.65 484.05 L222.16 486.87 L222.51 489.88 L224.61 491.63 L225.03 494.09 L223.76 496.75 L222.28 498.85 L222.4 501.33 L223.98 502.49 L227.27 502.94 L228.95 502.22 L230.58 502.6 M235.43 476.16 L236.39 478.39 L237.41 480.08 L239 480.98 L240.42 480.24 L241.71 481.68 L241.83 484.16 L243.11 485.86 L245.8 487.09 L248.52 487.79 L249.77 489.49 L251.05 491.19 L249.36 491.94 L248.67 494.34 M245.8 487.09 L247.11 483.35 L249.95 481.88 L252.27 479.83 L255.07 479.17 L257.8 479.59 L259.77 478.59 L261.63 479.8 L262.61 477.12 L264.64 475.06 L263.65 473.37 L264.37 470.68 L264.69 469.63 L262.82 468.97 L261.28 466.7 L260.02 464.71 L257.54 464.87 L255.95 463.96 M264.69 469.63 L267.64 470.87 L270.9 471.86 L274.13 472.88 L275.08 475.64 L276.38 477.08 L278.33 476.38 L280.63 474.59 L281.56 472.75 L283.52 472.31 L285.13 472.95 L287.83 473.91 M268.42 476.64 L270.55 477.86 L272.6 480.42 L274.89 478.92 L276.5 479.53 L277.42 482.31 L278.51 487.29 L278.85 491.11 L275.83 490.94 L271.98 491.02 L270.79 492.29 L272.27 495.11 L271.11 496.41 L269.55 494.95 L269.12 492.75 L267.24 491.83 L267.12 489.38 L269.35 488.95 L269.74 486.8 L270.65 485.77 L269.08 484.03 L268.15 481.27 L267.46 479.02 L268.42 476.64 M289.82 479.98 L293.27 481.28 L295.92 481.2 L297.61 482.4 L299.85 481.65 L302.07 481.34 L303.64 480.55 L303.2 477.04 L303.66 473.14 L303.51 471.82 L302.94 470.48 M289.82 479.98 L289.84 483.71 L289.17 487.16 L288.35 490.16 L289.54 492.41 L290.52 494.21 L288.5 495.2 L287.58 495.79 L287.92 497.55 L287.35 499.7 M299.85 481.65 L301.33 483.04 L300.77 484.55 L299.21 485.1 L299.94 487.76 L301.56 490.03 L302.75 492.28 L302.96 496.21 L303.38 500.16 L304.16 501.95 L302.97 503.62 L303.22 506.89 L305.06 505.49 L307.79 504.13 L311.76 503.88 L314.86 503.65 L316.96 505.28 L319.49 507.16 L320.24 509.39 M303.51 471.82 L306.09 472.84 L309.57 473.47 L311.68 475.1 L312.48 476.48 L315.94 477.55 L318.6 477.23 L321.24 477.18 L321.86 474.16 L323.39 474.01 L323.51 475.99 L322.46 478.99 L321.06 480.22 L319.26 480.99 L318.64 484.01 L317.48 484.81 L317.95 488.33 L318.78 489.25 L317.82 490.5 L318.4 492.28 L319.4 493.64 L320.57 496.32 L321.73 499 M52.06 511.11 L53.2 511.75 L55.78 512.77 L56.25 514.83 L55.79 517.71 L57.96 520.74 L58.18 521.92 L55.23 522.33 L54.21 524.6 L53.56 525.73 L56.02 528.77 M55.78 512.77 L58.5 511.47 L58.5 511.47 M70.23 512.12 L71.25 514.22 L71.39 516.84 L68.64 518.72 L66.28 518.88 L64.61 517.33 L64.22 519.06 L60.59 520.89 L59.89 522.88 L61.9 523.58 L59.77 524.91 L58.81 526.31 L56.02 528.77 M68.64 518.72 L69.99 520.83 L72.26 522.12 L73.69 522.78 L75.46 522.59 L77.72 524.17 L80.54 526.07 L83.66 527.99 L85.57 530.42 L87.81 532.29 L89.68 535.3 L89.77 538.8 L87.85 541.6 L85.34 544.36 L83.42 547.16 L81.34 547.63 L80.62 549.91 L79.67 551.02 M96.67 513.6 L97.01 515.37 L95.74 517.04 L96.48 519.41 L97.32 520.03 M89.62 513.21 L89.7 514.96 L91.13 515.62 L88.13 516.61 L87.14 518.59 L84.42 519.89 L86.04 522.31 L86.72 525.84 L88.7 527.11 L90.32 529.53 L90.08 533.58 L92.37 534.58 L94.95 535.6 L96 532.75 L97.27 531.08 L96.3 527.54 L96.18 524.62 L97.16 522.93 L95.47 521.67 L97.32 520.03 M97.32 520.03 L99.01 521.29 L101.47 519.39 L104.5 517.82 L107.2 516.81 L107.65 519.16 L110.33 518.44 L111.02 516.73 L113.29 518.02 L115.87 519.04 M90.08 533.58 L89.98 535.32 M94.95 535.6 L96.48 534.52 L97.24 536.6 L99.89 536.46 L102.62 534.87 L104.05 535.53 L104.83 537.31 L107.51 536.59 L109.27 536.69 L111.52 538.27 L113.19 539.82 L114.43 538.72 L115.43 541.69 L117.62 544.42 L120.99 546.94 L124.11 548.86 L123.7 550.87 L122.69 553.14 M143.54 510.99 L143.16 513.59 L141.17 514.9 L141.51 517.74 L140.43 519.57 L140.79 521.48 L143.68 521.17 L144.32 522.4 L146.72 522.53 L147.72 521.4 L150.13 520.84 L153.04 520.27 L154.49 520.12 M163.05 512.08 L163.19 513.78 L162.82 516.11 L161.32 517.19 L160.34 517.39 L158.41 518.22 L156.94 518.83 L154.83 518.25 L154.28 519.18 L154.49 520.12 L154.13 521.76 L154.25 524.12 L153.41 525.96 L152.14 527.08 L151.58 528.71 L151.25 530.35 M166.3 512.26 L166.37 512.53 L168.19 513.56 L169.85 513.89 L169.81 512.46 M177.91 512.91 L178.64 514.64 L180.52 514.98 L180.9 516.63 L180.32 518.51 L180.44 520.38 M111.74 468.17 L112.14 470.34 L108.78 471.52 L106.51 472.76 L101.02 472.19 M123.5 473.71 L120.13 475.15 L120.2 478.44 L122.6 479.65 M120.2 478.44 L117.59 480.47 L114.28 480.84 L110.91 482.28 M115.19 493.42 L118.45 494.41 L122.43 492.19 M112.14 507.96 L114.8 509.73 L119.06 512.18 L121.32 511.2 M92.14 457.97 L91.93 461.6 L93.83 466.79 L96.65 468.78 L99.47 470.74 L100.36 474.04 L99.88 476.23 L100.25 475.87 L103.5 477.12 L106.36 478.39 L108.42 480.69 L110.87 483 L112.54 485.65 L111.66 488.13 L113.35 490.76 L115.02 493.41 L111.97 495.42 L109.22 498.17 L110.52 501.15 L112.19 504.15 L112.73 507.47 L114.82 509.39 L118.37 511.39 L120.78 514.43 L116.61 516.4 L116.44 519.3 L119.18 522.71 L121.58 525.75 L119.99 527.84 L121.25 531.55 L121.39 535.19 L120.91 537.34 L125.56 539.05 L130.34 538.6 L137.39 537.54 M198.53 526.8 L201.15 520.03 L199.86 517.05 L198.27 512.6 L197.1 507.44 L200.64 503.66 L200.15 498.89 L197.4 495.83 L199.41 493.04 L198.07 490.78 L196.05 487.76 L192.54 485.01 L194.88 482.61 L197.98 479.88 L201.07 477.14 L201.53 475.34 L205.54 475.94 L209.31 474.32 L211.48 474.82 L215.07 476.1 L218.42 475.58 L220.4 472.79 L222.4 469.62 L224.01 467.18 L226.63 466.57 L227.99 468.47 L228.55 471.41 L231.01 473 L234.25 474.26 L235.99 476.19 L237.22 473.73 L240 469.87 L242.61 469.29 L243.2 471.85 L247.5 473.55 L251.24 472.3 L254.58 471.41 L256.97 468.64 L256.03 465.68 L255.76 464.21 L255.21 460.55 L256.54 456.99 L258.13 454.9 L261.82 454.38 L263.2 455.91 L266.32 459.37 L269.39 456.98 L272.79 454.99 L274.07 452.16 L271.75 447.67 L275.66 450.06 L279.21 451.72 L282.45 453 L286.98 450.7 L290.2 452.33 L288.87 450.08 L288.19 448.58 L289.87 445.04 L288.64 440.96 L286.95 438.72 L286.01 435.76 L284.34 433.11 L287.15 429.25" fill="none" stroke="#1c2a12" stroke-opacity="0.75" stroke-width="0.6" stroke-linejoin="round"/>
<path d="M42.14 484.97 L43.13 480.67 L44.89 475.68 L47.69 471.48 L51.29 466.59 L54.84 462.43 L58.27 460.06 L61.13 461.33 L64.3 463.31 L67.48 465.69 L70.13 464.01 L72.68 464.53 L75.54 465.77 L78.55 464.48 L80.85 462.78 L83.82 462.25 L86.85 460.58 L89.19 458.19 L92.14 457.97 L95.19 455.96 L96.56 451.68 L99.21 450.03 L103.24 449.87 L106.33 447.14 L108.09 442.15 L109.8 437.89 L110.44 433.56 L112.84 430.06 L116.2 428.8 L120.32 427.57 L123.73 425.58 L125.07 421.65 L127.71 420.72 L130.44 417.59 L132.83 414.46 L135.84 413.18 L139.09 413.71 L142.44 413.2 L145.32 414.06 L149.04 413.19 L153.43 413.44 L155.56 414.63 L155.93 420.84 L158.75 422.83 L163.16 422.7 L166.92 421.08 L168.93 418.28 L170.63 414.4 L174.03 412.41 L177.35 411.87 L179.34 409.45 L182.03 407.04 L184.81 409.75 L186.38 414.55 L188.23 420.47 L190.41 420.94 L192.43 423.96 L195.65 425.24 L197.93 424.27 L199.2 427.62 L199.18 434.16 L199.82 435.65 L197.85 437.72 L197.33 440.6 L200.22 441.49 L203.51 441.32 L205.46 439.6 L209.05 440.88 L211.14 442.82 L213.27 444.02 L214.55 441.18 L215.53 436.53 L217.94 433.41 L220.59 431.72 L223.6 430.44 L226.93 430.25 L228.56 427.43 L231.53 426.9 L234.47 426.69 L237.69 427.94 L241.3 428.9 L243.27 426.8 L245.75 428.04 L248.03 426.72 L250.16 427.94 L251.48 430.54 L253.56 432.49 L256.1 433.33 L258.49 436.02 L261.4 436.53 L263.7 434.86 L265.31 432.39 L267.54 431.82 L268.44 428.96 L270.76 426.88 L272.96 427.01 L275.88 427.17 L278.58 425.17 L282.55 426.09 L284.72 426.59 L287.15 429.25 L290.51 427.99 L293.45 427.8 L297.15 427.28 L299.93 429.97 L302.83 430.51 L305.57 433.95 L307.85 432.62 L310.69 434.23 L314.26 435.89 L316.22 439.98 L318.27 442.62 L318.81 445.94 L321.61 448.27 L325.2 449.58 L328.06 450.81 L331.2 453.9 L335.94 454.16 L338.36 456.83 L342.29 458.5 L345.92 459.08 L344.53 463.74 L342.6 465.78 L339.09 469.6 L337.68 474.61 L335.36 476.66 L335.06 481.73 L332.92 486.69 L332.36 490.3 L329.27 493.03 L325.49 495 L322.39 497.73 L321.32 503.49 L320.34 507.79 L320.86 511.46 L319.98 513.94 L317.72 514.91 L315.59 513.69 L311.91 513.86 L308.19 514.73 L304.49 515.28 L302.93 516.99 L300.73 516.87 L297.55 514.51 L295.16 511.85 L293.55 507.75 L292.68 504.07 L290.54 502.87 L287.73 500.88 L285.68 498.24 L282.82 496.97 L279.83 497.91 L276.82 499.2 L273.1 500.07 L269.4 500.59 L266.37 502.22 L263.93 500.28 L259.87 500.4 L256.28 499.12 L252.75 496.75 L249.93 494.79 L246.97 495.32 L242.51 496.18 L238.11 496.28 L234.38 497.17 L233.18 499.29 L230.74 502.78 L228.32 507.01 L226.65 510.55 L224.17 514.77 L221.46 517.53 L217.8 517.32 L214.06 518.57 L210.97 521.3 L207.87 524.03 L204.89 524.94 L201.85 526.6 L198.82 528.27 L196.84 524.49 L193.52 525.06 L192.87 523.2 L190.41 521.6 L187.53 520.72 L185.46 518.42 L182.43 520.08 L179.71 522.46 L178.07 525.28 L176.05 528.8 L172.33 529.69 L167.23 529.03 L162.72 530.96 L156.91 529.91 L151.39 529.98 L145.86 530.74 L141.43 531.22 L140.53 534.08 L138.12 537.58 L137.03 543.71 L138.72 545.95 L141.12 548.99 L135.92 550.16 L133.6 552.24 L129.15 553.06 L123.28 553.11 L117.36 553.86 L111.45 554.6 L110.03 553.83 L104.22 552.74 L98.39 552.07 L93.23 552.51 L88.13 551.85 L83.7 552.35 L79.77 550.3 L77.33 548.33 L74.13 546.35 L70.98 544 L68.23 540.94 L65.47 537.88 L62.74 534.44 L60.29 532.15 L57.12 530.14 L54.32 527.8 L51.35 528.37 L48.1 527.81 L47.11 525.6 L46.99 521.58 L44.63 517.82 L42.65 514.07 L41.84 509.32 L39.46 505.9 L38.23 501.85 L36.22 498.45 L36.9 493.4 L38.92 489.88 L41.69 486.75Z" fill="none" stroke="#1c2a12" stroke-opacity="0.8" stroke-width="0.7" stroke-linejoin="round"/>
<path d="M42.14 703.97 L43.13 699.67 L44.89 694.68 L47.69 690.48 L51.29 685.59 L54.84 681.43 L58.27 679.06 L61.13 680.33 L64.3 682.31 L67.48 684.69 L70.13 683.01 L72.68 683.53 L75.54 684.77 L78.55 683.48 L80.85 681.78 L83.82 681.25 L86.85 679.58 L89.19 677.19 L92.14 676.97 L95.19 674.96 L96.56 670.68 L99.21 669.03 L103.24 668.87 L106.33 666.14 L108.09 661.15 L109.8 656.89 L110.44 652.56 L112.84 649.06 L116.2 647.8 L120.32 646.57 L123.73 644.58 L125.07 640.65 L127.71 639.72 L130.44 636.59 L132.83 633.46 L135.84 632.18 L139.09 632.71 L142.44 632.2 L145.32 633.06 L149.04 632.19 L153.43 632.44 L155.56 633.63 L155.93 639.84 L158.75 641.83 L163.16 641.7 L166.92 640.08 L168.93 637.28 L170.63 633.4 L174.03 631.41 L177.35 630.87 L179.34 628.45 L182.03 626.04 L184.81 628.75 L186.38 633.55 L188.23 639.47 L190.41 639.94 L192.43 642.96 L195.65 644.24 L197.93 643.27 L199.2 646.62 L199.18 653.16 L199.82 654.65 L197.85 656.72 L197.33 659.6 L200.22 660.49 L203.51 660.32 L205.46 658.6 L209.05 659.88 L211.14 661.82 L213.27 663.02 L214.55 660.18 L215.53 655.53 L217.94 652.41 L220.59 650.72 L223.6 649.44 L226.93 649.25 L228.56 646.43 L231.53 645.9 L234.47 645.69 L237.69 646.94 L241.3 647.9 L243.27 645.8 L245.75 647.04 L248.03 645.72 L250.16 646.94 L251.48 649.54 L253.56 651.49 L256.1 652.33 L258.49 655.02 L261.4 655.53 L263.7 653.86 L265.31 651.39 L267.54 650.82 L268.44 647.96 L270.76 645.88 L272.96 646.01 L275.88 646.17 L278.58 644.17 L282.55 645.09 L284.72 645.59 L287.15 648.25 L290.51 646.99 L293.45 646.8 L297.15 646.28 L299.93 648.97 L302.83 649.51 L305.57 652.95 L307.85 651.62 L310.69 653.23 L314.26 654.89 L316.22 658.98 L318.27 661.62 L318.81 664.94 L321.61 667.27 L325.2 668.58 L328.06 669.81 L331.2 672.9 L335.94 673.16 L338.36 675.83 L342.29 677.5 L345.92 678.08 L344.53 682.74 L342.6 684.78 L339.09 688.6 L337.68 693.61 L335.36 695.66 L335.06 700.73 L332.92 705.69 L332.36 709.3 L329.27 712.03 L325.49 714 L322.39 716.73 L321.32 722.49 L320.34 726.79 L320.86 730.46 L319.98 732.94 L317.72 733.91 L315.59 732.69 L311.91 732.86 L308.19 733.73 L304.49 734.28 L302.93 735.99 L300.73 735.87 L297.55 733.51 L295.16 730.85 L293.55 726.75 L292.68 723.07 L290.54 721.87 L287.73 719.88 L285.68 717.24 L282.82 715.97 L279.83 716.91 L276.82 718.2 L273.1 719.07 L269.4 719.59 L266.37 721.22 L263.93 719.28 L259.87 719.4 L256.28 718.12 L252.75 715.75 L249.93 713.79 L246.97 714.32 L242.51 715.18 L238.11 715.28 L234.38 716.17 L233.18 718.29 L230.74 721.78 L228.32 726.01 L226.65 729.55 L224.17 733.77 L221.46 736.53 L217.8 736.32 L214.06 737.57 L210.97 740.3 L207.87 743.03 L204.89 743.94 L201.85 745.6 L198.82 747.27 L196.84 743.49 L193.52 744.06 L192.87 742.2 L190.41 740.6 L187.53 739.72 L185.46 737.42 L182.43 739.08 L179.71 741.46 L178.07 744.28 L176.05 747.8 L172.33 748.69 L167.23 748.03 L162.72 749.96 L156.91 748.91 L151.39 748.98 L145.86 749.74 L141.43 750.22 L140.53 753.08 L138.12 756.58 L137.03 762.71 L138.72 764.95 L141.12 767.99 L135.92 769.16 L133.6 771.24 L129.15 772.06 L123.28 772.11 L117.36 772.86 L111.45 773.6 L110.03 772.83 L104.22 771.74 L98.39 771.07 L93.23 771.51 L88.13 770.85 L83.7 771.35 L79.77 769.3 L77.33 767.33 L74.13 765.35 L70.98 763 L68.23 759.94 L65.47 756.88 L62.74 753.44 L60.29 751.15 L57.12 749.14 L54.32 746.8 L51.35 747.37 L48.1 746.81 L47.11 744.6 L46.99 740.58 L44.63 736.82 L42.65 733.07 L41.84 728.32 L39.46 724.9 L38.23 720.85 L36.22 717.45 L36.9 712.4 L38.92 708.88 L41.69 705.75Z" fill="#4f7f40"/>
<path d="M45.52 694.89 L48.02 694.22 L51.38 693.59 L54.44 692.95 L55.47 693.82 L58.04 692.6 L60.02 691.34 L63.14 690.15 L64.89 688.36 L65.77 687.3 L66.98 685.19 L67.89 684.16 M65.77 687.3 L68.8 687.21 L69.8 688.63 L71.92 690.64 L71.15 694.14 L72.63 696.96 L74.1 700.03 L75.81 699.32 L77.73 699.16 L79.74 697.91 L82 696.93 L84.24 696.24 L84.94 698.2 L87.88 699.73 L90.1 699.3 L92.24 700.5 L94.95 701.2 L98.16 702.48 L100.19 700.94 L100.07 697.94 L99.98 694.94 M80.05 682.93 L80.4 686.49 L80.54 688.68 L82.42 689.6 L83.95 691.6 L84.24 696.24 M42.74 704.82 L45.8 704.18 L49.14 703.81 L52.33 705.36 L57.95 703.75 L59.12 702.19 L63.53 697.55 L65.58 700.11 L63.45 703.54 L61.09 706.14 L63.75 707.91 L64.5 709.03 M64.5 709.03 L65.25 705.82 L67.79 704.59 L69.98 704.72 L71.73 702.9 L74.1 700.03 M64.5 709.03 L61.86 712.17 L62.84 713.85 L60.62 714.28 L58.62 715.24 L57.65 717.92 L55.67 719.18 L54.41 721.55 L53.99 724.26 L52.58 724.73 L52.72 726.92 L51.77 729.05 M41.64 728.19 L44.37 728.63 L48.03 729.88 M48.17 729.89 L49.01 729.15 L51.77 729.05 L53.29 730.18 M61.86 712.17 L63.93 713.91 L66.35 715.15 L67.06 717.08 L69.11 719.67 L70.06 722.42 L68.79 725.09 L71.38 727.96 L74.48 731.13 L76.82 728.82 L80.72 727.93 L82.51 725.85 L84.49 724.6 L82.16 722.29 L83.71 719.38 L83.61 716.64 L81.74 715.46 L81.64 712.17 L80.16 709.35 L79.14 708.22 L76.05 704.24 L76.55 700.72 L75.81 699.32 M68.79 725.09 L66.49 726.87 L63.12 727.76 L61.37 729.58 L59.03 730.5 M71.38 727.96 L69.56 731.09 M81.64 712.17 L84.63 713.15 L86.35 711.91 L86.74 709.72 L88.6 710.93 L90.58 709.68 L93.05 705.71 L93.96 704.14 L96.97 704.31 L98.16 702.48 M90.58 709.68 L93.48 712.31 L96.06 714.89 L99.35 715.34 L101.97 717.67 L106.13 716.82 L109.13 717.25 L111.17 715.45 L115.19 712.42 M96.06 714.89 L94.22 718.34 L92.44 720.68 L90.07 723.54 L88.73 722.91 L87.8 724.78 L84.49 724.6 M90.07 723.54 L90.14 726.83 L89 727.84 L91.14 728.78 L89.89 731.18 L90.35 732.25 M91.14 728.78 L93.03 729.17 L95.94 731.52 L96.76 732.61 M138.91 678.6 L142.04 676.86 L144.74 677.82 L147.44 678.79 L150.03 681.11 L152.66 683.44 L155.36 684.4 L158.39 684.31 L161.97 684.25 L165.28 683.88 L168.01 684.3 L168.46 686.24 L170.67 686.1 L172.71 683.74 L174.51 681.66 M138.91 678.6 L137.92 681.54 L137.96 685.35 L140.26 688.21 L142.32 691.03 L144.31 694.16 L147.13 693.22 L149.24 694.7 L153.38 694.67 M155.36 684.4 L153.87 686.24 L153.85 691.15 L153.38 694.67 L153.73 698.24 L155 700.2 L152.92 702.55 L152.73 705.8 L153.42 708.01 L151.37 710.08 L152.35 712.32 L152.78 714.52 L152.3 717.75 L153.28 720.01 M144.31 694.16 L142.47 697.61 L139.93 698.8 L137.73 703.33 L134.16 703.13 L135.38 705.93 L136.83 709.82 L138.24 713.71 L141.16 715.5 L144.28 713.78 L147.11 712.57 L149.43 710.52 L151.37 710.08 M134.16 703.13 L130.99 705.69 L128.21 706.61 L125.07 708.06 L123.85 705.81 L123.46 703.05 L124.14 700.94 L123.16 698.68 M125.07 708.06 L125.7 711.38 L127.54 713.11 L126.76 716.87 L128.3 719.14 L128.96 721.91 L128.22 725.12 L126.74 726.7 L123.11 727.57 L122.81 728.83 M126.74 726.7 L128.75 725.44 L133.42 725.41 L136.07 722.86 L138.34 721.07 L139.53 719.77 L142.31 719.4 L145.21 717.09 L143.59 716.19 L141.16 715.5 M139.53 719.77 L139.93 722.52 L142 724.82 L143.18 728.17 L143.92 729.55 L146.98 728.9 L148.72 727.37 L148.25 725.72 L149.79 723.07 L151.85 721.01 L153.28 720.01 M143.92 729.55 L143.69 730 M162.5 731.05 L162.57 730.33 L164.12 727.42 L163.39 725.75 L161.28 724.27 L158.56 723.56 L157.02 721.85 L155.14 720.93 L153.28 720.01 M155 700.2 L157.08 701.68 L160.26 704.04 L160.86 703.26 L163.63 703.15 L165.14 705.38 L168.49 704.24 L172.4 703.64 L175.7 703.53 L178.99 703.46 L178.03 701.22 L179.53 699.13 L178.35 695.77 L176.31 692.93 L174.8 690.69 L175.55 686.9 L174.33 684.65 L172.71 683.74 M178.99 703.46 L182.05 703.34 L185.01 704.34 L187.4 705.55 L189.24 707.28 L191.03 709.3 L187.63 711.29 L186.05 714.75 L183.92 713.53 L181.71 713.69 L179.43 714.9 L176.62 715.85 L175.46 717.15 L172.15 716.97 M189.24 707.28 L192.64 705.29 M178.97 703.72 L176.99 704.97 L174.38 707.01 L170.48 707.89 L170.96 709.26 L173.01 711.84 M169.3 709.45 L168.07 711.57 L167.33 715.07 L165.86 716.62 L167.1 719.13 L168.67 720.32 L170.18 722.58 L171.17 724.82 L171.54 727.54 L169.74 730.18 L169.78 731.46 M166.24 731.26 L165.41 728.86 L164.12 727.42 M172.15 716.97 L173.16 718.91 L171.98 719.95 L172.38 722.71 L173.09 724.64 L171.17 724.82 M173.09 724.64 L174.84 727.73 L176.42 728.92 L177.9 731.74 L178.03 731.92 M183.92 713.53 L184.87 716.31 L184.68 719.56 L186.19 721.85 L188.26 724.12 L186.8 725.4 L188.33 727.41 L191.93 727.06 L194.74 726.14 L197.49 726.29 M115.86 647.69 L116.24 650.7 L117.89 655.16 L119.79 655.82 L120.94 659.69 L122.62 663.59 L122.72 666.88 L121.77 669.01 L122.96 672.33 L125.78 675.77 M123.12 645.92 L123.47 648.93 L125.51 652.3 L126.37 656.18 L128.96 659.06 L131.06 660.81 L132.82 663.35 L133.66 663.39 M123.12 645.92 L127.59 644.8 L132.04 643.94 L134.76 644.65 L136.71 643.94 L139.42 644.65 L143.13 642.41 L145.47 644.69 L148.46 645.15 L150.3 646.88 L150.98 649.36 L151.68 651.32 L150.46 653.69 L148.03 652.48 L145.24 653.14 L143.17 651.4 L141.49 651.56 L140.04 648.23 L139.16 644.63 M134.76 644.65 L135.09 647.95 L136.51 651.84 L134.42 655.01 L134.49 658.27 L134.53 662.63 L133.66 663.39 L131.87 665.47 L133.69 667.49 L133.24 670.72 L131.44 672.8 L128.07 674.24 L125.78 675.77 M151.78 649.7 L154.3 648.73 L158.11 649.76 L162.52 649.75 L164.26 647.95 L163.34 644.62 L163.22 642.17 M162.52 649.75 L161.52 652.68 L161.01 656.49 L159.01 658.01 L155.35 659.43 L151.42 660.84 L148.04 662.02 L146.22 664.91 L144.4 667.54 L141.57 669.3 L140.28 672.22 L138.55 673.75 L135.67 675.77 L132.92 676.17 L131.82 675.82 L128.98 677.32 L126.2 677.69 L125.78 675.77 M164.26 647.95 L167.48 649.21 L168.95 652.58 L172.91 650.59 M161.01 656.49 L160.23 660.81 L162.79 663.66 L164.04 661.28 L166.62 663.87 L168.94 662.37 L172.17 663.37 M162.79 663.66 L161.45 667.94 L160.61 672.81 L161.41 677.76 L159.58 680.92 L158.28 684.65 L154.97 684.47 M108.5 660.62 L110.04 662.36 L112.08 665.18 L114.13 667.77 L116.28 668.7 L117.82 670.41 L119.95 672.16 L121.46 674.43 L123.9 674.85 L125.78 675.77 M107.05 666.82 L106.32 669.77 L107.22 673.08 L108.73 675.37 L108.1 676.96 L110.76 678.74 L114.07 678.37 L118.47 678.36 L121.79 677.73 L124.38 680.61 L127.23 679.11 L126.2 677.69 M118.47 678.36 L117.74 681.31 L113.81 682.72 L112.05 684.8 L111.66 686.38 M117.74 681.31 L119.81 683.61 L121.41 684.25 L122.37 686.98 M188.08 640.56 L185.73 643.14 L183.12 645.72 L179.65 648.26 L178.74 649.84 L181.59 652.73 L183.95 654.49 L184.94 656.73 L187.89 658 L190.61 658.67 L193.25 660.18 L196.83 660.12 M172.91 650.59 L175.65 651.03 L178.74 649.84 M184.94 656.73 L182.59 659.33 L179.94 661.91 L178.29 662.08 L174.47 661.61 L172.18 663.11 M178.29 662.08 L178.73 663.99 L179.72 665.71 L178.45 668.89 L176.85 672.61 L174.73 675.78 L173.72 679 L174.95 681.52 L178.28 681.41 L182.17 680.55 L186.54 681.06 L189.21 682.57 L192.98 683.89 L195.13 684.82 L198.5 683.91 L201.72 684.93 L205.02 684.82 L206.98 684.38 L208.86 685.33 L212.69 685.54 L216.46 686.83 L218.23 684.75 L221.5 685.48 L225.43 684.05 L224.12 682.9 L226.14 681.38 L229.54 679.92 L231.8 678.41 L234.15 676.37 M203.97 660.52 L204.63 663.29 L205.06 665.47 L203.9 666.77 L207.28 665.07 L208.41 664.84 L206.37 666.64 L205.98 668.25 L209.81 669.02 L209.89 672.31 L209.42 675.8 L206.9 676.21 L207.64 678.17 L209.61 681.53 L210.35 683.49 L208.86 685.33 M219.6 652.12 L220.59 653.81 L221.64 654.97 L223.86 654.54 L226.53 656.06 L226.67 658.24 L228.46 660.26 L228.66 661.9 L227.52 662.36 L228.78 664.35 L226.54 665.04 L227.03 666.17 L224.56 666.29 L224.18 667.64 L226.28 669.39 L227.8 671.65 L228.8 673.62 L230.89 675.37 L234.15 676.37 L233.92 675.28 L236.98 674.63 L238.24 672.23 L240.56 670.18 L243.5 667.09 L246.05 665.61 L249.19 663.57 L250.95 661.52 L255.88 662.06 L256.39 662.9 L260.22 663.11 M233.44 645.8 L232.69 649.05 L231.39 652.78 L232.67 654.48 L236.04 653.04 L236.93 656.9 L238.97 659.75 L241.5 663.14 L243.5 667.09 L246.65 669.45 L249.88 670.44 L253.07 672.51 L255.76 673.77 L257.39 673.86 M231.8 678.41 L233.93 680.16 L234.52 679.12 L236.21 678.4 L237.22 680.08 L239.89 681.6 L241.73 682.81 L244.25 682.4 L247.56 682.03 L249.23 681.57 L249.86 680.24 L252.59 680.68 L253.09 681.78 L255.26 682.2 M304.79 653.72 L307.43 655.75 L309.46 658.6 L307.9 661.8 L306.6 664.98 L304.6 666.5 L305.49 669.83 L307.53 672.65 L310.72 674.75 L312.66 674.3 L314.11 673.02 L317.45 672.68 L320.29 670.66 L322.15 667.48 M304.6 666.5 L302.74 669.68 L302.06 672.34 L302.98 675.13 L303.35 678.43 L302.4 680.56 L303.88 683.37 L304.54 686.11 L303.3 688.78 L303.73 690.98 M323.41 692.63 L324.69 689.97 L323.11 688.81 L322.62 687.68 L320.92 688.69 L318.74 688.27 L316.62 686.79 L318.09 685.24 L318.75 683.1 L320.74 682.11 L321.45 679.44 L322.7 676.78 L321.45 674.53 L322.45 671.85 L324.02 668.13 M324.69 689.97 L327.42 690.39 L328.26 694.53 L331 694.95 L335.39 695.19 M289.77 698.92 L288.91 695.07 L287.43 691.7 L287.36 688.44 L286.17 685.09 L284.93 682.84 L284 680.05 L285.83 676.9 L287.04 675.34 L290.26 676.33 L292.04 673.99 L293.22 672.95 L292.71 672.11 L290.57 671.18 L289.75 671.13 M293.22 672.95 L295.23 676.32 L297.29 678.65 L298.48 676.79 L301.35 675.03 L302.06 672.34 M293.22 672.95 L293.67 669.72 L294.68 666.49 L294.9 662.7 L296.96 660.63 L297.09 658.46 L299.61 657.5 L300.26 655.91 L301.93 655.45 L303.11 658.8 L304.23 658.86 L303.57 655.54 L304.79 653.72 M260.74 654.25 L262.85 655.73 L263.56 657.66 L262.55 660.89 L264.08 662.86 L267.39 663.05 L269.04 662.88 L270.58 664.59 L271.83 666.84 M201.32 694.88 L202.89 696.07 L204.73 697.8 L205.13 700.56 L206.9 702.84 L207.33 705.04 L208.53 708.1 L210.32 710.64 L211.55 713.18 L210.36 714.48 L211.67 715.63 L213.36 714.91 L214 717.94 L216.92 720.28 L217.87 722.52 L219.71 724.25 L220.99 725.95 L224.81 726.45 L226.79 725.2 L228.13 725.82 M217.27 695.22 L217.99 696.92 L216.8 698.74 L218.32 700.74 L220.65 703.05 L222.16 705.87 L222.51 708.88 L224.61 710.63 L225.03 713.09 L223.76 715.75 L222.28 717.85 L222.4 720.33 L223.98 721.49 L227.27 721.94 L228.95 721.22 L230.58 721.6 M235.43 695.16 L236.39 697.39 L237.41 699.08 L239 699.98 L240.42 699.24 L241.71 700.68 L241.83 703.16 L243.11 704.86 L245.8 706.09 L248.52 706.79 L249.77 708.49 L251.05 710.19 L249.36 710.94 L248.67 713.34 M245.8 706.09 L247.11 702.35 L249.95 700.88 L252.27 698.83 L255.07 698.17 L257.8 698.59 L259.77 697.59 L261.63 698.8 L262.61 696.12 L264.64 694.06 L263.65 692.37 L264.37 689.68 L264.69 688.63 L262.82 687.97 L261.28 685.7 L260.02 683.71 L257.54 683.87 L255.95 682.96 M264.69 688.63 L267.64 689.87 L270.9 690.86 L274.13 691.88 L275.08 694.64 L276.38 696.08 L278.33 695.38 L280.63 693.59 L281.56 691.75 L283.52 691.31 L285.13 691.95 L287.83 692.91 M268.42 695.64 L270.55 696.86 L272.6 699.42 L274.89 697.92 L276.5 698.53 L277.42 701.31 L278.51 706.29 L278.85 710.11 L275.83 709.94 L271.98 710.02 L270.79 711.29 L272.27 714.11 L271.11 715.41 L269.55 713.95 L269.12 711.75 L267.24 710.83 L267.12 708.38 L269.35 707.95 L269.74 705.8 L270.65 704.77 L269.08 703.03 L268.15 700.27 L267.46 698.02 L268.42 695.64 M289.82 698.98 L293.27 700.28 L295.92 700.2 L297.61 701.4 L299.85 700.65 L302.07 700.34 L303.64 699.55 L303.2 696.04 L303.66 692.14 L303.51 690.82 L302.94 689.48 M289.82 698.98 L289.84 702.71 L289.17 706.16 L288.35 709.16 L289.54 711.41 L290.52 713.21 L288.5 714.2 L287.58 714.79 L287.92 716.55 L287.35 718.7 M299.85 700.65 L301.33 702.04 L300.77 703.55 L299.21 704.1 L299.94 706.76 L301.56 709.03 L302.75 711.28 L302.96 715.21 L303.38 719.16 L304.16 720.95 L302.97 722.62 L303.22 725.89 L305.06 724.49 L307.79 723.13 L311.76 722.88 L314.86 722.65 L316.96 724.28 L319.49 726.16 L320.24 728.39 M303.51 690.82 L306.09 691.84 L309.57 692.47 L311.68 694.1 L312.48 695.48 L315.94 696.55 L318.6 696.23 L321.24 696.18 L321.86 693.16 L323.39 693.01 L323.51 694.99 L322.46 697.99 L321.06 699.22 L319.26 699.99 L318.64 703.01 L317.48 703.81 L317.95 707.33 L318.78 708.25 L317.82 709.5 L318.4 711.28 L319.4 712.64 L320.57 715.32 L321.73 718 M52.06 730.11 L53.2 730.75 L55.78 731.77 L56.25 733.83 L55.79 736.71 L57.96 739.74 L58.18 740.92 L55.23 741.33 L54.21 743.6 L53.56 744.73 L56.02 747.77 M55.78 731.77 L58.5 730.47 L58.5 730.47 M70.23 731.12 L71.25 733.22 L71.39 735.84 L68.64 737.72 L66.28 737.88 L64.61 736.33 L64.22 738.06 L60.59 739.89 L59.89 741.88 L61.9 742.58 L59.77 743.91 L58.81 745.31 L56.02 747.77 M68.64 737.72 L69.99 739.83 L72.26 741.12 L73.69 741.78 L75.46 741.59 L77.72 743.17 L80.54 745.07 L83.66 746.99 L85.57 749.42 L87.81 751.29 L89.68 754.3 L89.77 757.8 L87.85 760.6 L85.34 763.36 L83.42 766.16 L81.34 766.63 L80.62 768.91 L79.67 770.02 M96.67 732.6 L97.01 734.37 L95.74 736.04 L96.48 738.41 L97.32 739.03 M89.62 732.21 L89.7 733.96 L91.13 734.62 L88.13 735.61 L87.14 737.59 L84.42 738.89 L86.04 741.31 L86.72 744.84 L88.7 746.11 L90.32 748.53 L90.08 752.58 L92.37 753.58 L94.95 754.6 L96 751.75 L97.27 750.08 L96.3 746.54 L96.18 743.62 L97.16 741.93 L95.47 740.67 L97.32 739.03 M97.32 739.03 L99.01 740.29 L101.47 738.39 L104.5 736.82 L107.2 735.81 L107.65 738.16 L110.33 737.44 L111.02 735.73 L113.29 737.02 L115.87 738.04 M90.08 752.58 L89.98 754.32 M94.95 754.6 L96.48 753.52 L97.24 755.6 L99.89 755.46 L102.62 753.87 L104.05 754.53 L104.83 756.31 L107.51 755.59 L109.27 755.69 L111.52 757.27 L113.19 758.82 L114.43 757.72 L115.43 760.69 L117.62 763.42 L120.99 765.94 L124.11 767.86 L123.7 769.87 L122.69 772.14 M143.54 729.99 L143.16 732.59 L141.17 733.9 L141.51 736.74 L140.43 738.57 L140.79 740.48 L143.68 740.17 L144.32 741.4 L146.72 741.53 L147.72 740.4 L150.13 739.84 L153.04 739.27 L154.49 739.12 M163.05 731.08 L163.19 732.78 L162.82 735.11 L161.32 736.19 L160.34 736.39 L158.41 737.22 L156.94 737.83 L154.83 737.25 L154.28 738.18 L154.49 739.12 L154.13 740.76 L154.25 743.12 L153.41 744.96 L152.14 746.08 L151.58 747.71 L151.25 749.35 M166.3 731.26 L166.37 731.53 L168.19 732.56 L169.85 732.89 L169.81 731.46 M177.91 731.91 L178.64 733.64 L180.52 733.98 L180.9 735.63 L180.32 737.51 L180.44 739.38 M111.74 687.17 L112.14 689.34 L108.78 690.52 L106.51 691.76 L101.02 691.19 M123.5 692.71 L120.13 694.15 L120.2 697.44 L122.6 698.65 M120.2 697.44 L117.59 699.47 L114.28 699.84 L110.91 701.28 M115.19 712.42 L118.45 713.41 L122.43 711.19 M112.14 726.96 L114.8 728.73 L119.06 731.18 L121.32 730.2 M92.14 676.97 L91.93 680.6 L93.83 685.79 L96.65 687.78 L99.47 689.74 L100.36 693.04 L99.88 695.23 L100.25 694.87 L103.5 696.12 L106.36 697.39 L108.42 699.69 L110.87 702 L112.54 704.65 L111.66 707.13 L113.35 709.76 L115.02 712.41 L111.97 714.42 L109.22 717.17 L110.52 720.15 L112.19 723.15 L112.73 726.47 L114.82 728.39 L118.37 730.39 L120.78 733.43 L116.61 735.4 L116.44 738.3 L119.18 741.71 L121.58 744.75 L119.99 746.84 L121.25 750.55 L121.39 754.19 L120.91 756.34 L125.56 758.05 L130.34 757.6 L137.39 756.54 M198.53 745.8 L201.15 739.03 L199.86 736.05 L198.27 731.6 L197.1 726.44 L200.64 722.66 L200.15 717.89 L197.4 714.83 L199.41 712.04 L198.07 709.78 L196.05 706.76 L192.54 704.01 L194.88 701.61 L197.98 698.88 L201.07 696.14 L201.53 694.34 L205.54 694.94 L209.31 693.32 L211.48 693.82 L215.07 695.1 L218.42 694.58 L220.4 691.79 L222.4 688.62 L224.01 686.18 L226.63 685.57 L227.99 687.47 L228.55 690.41 L231.01 692 L234.25 693.26 L235.99 695.19 L237.22 692.73 L240 688.87 L242.61 688.29 L243.2 690.85 L247.5 692.55 L251.24 691.3 L254.58 690.41 L256.97 687.64 L256.03 684.68 L255.76 683.21 L255.21 679.55 L256.54 675.99 L258.13 673.9 L261.82 673.38 L263.2 674.91 L266.32 678.37 L269.39 675.98 L272.79 673.99 L274.07 671.16 L271.75 666.67 L275.66 669.06 L279.21 670.72 L282.45 672 L286.98 669.7 L290.2 671.33 L288.87 669.08 L288.19 667.58 L289.87 664.04 L288.64 659.96 L286.95 657.72 L286.01 654.76 L284.34 652.11 L287.15 648.25" fill="none" stroke="#1c2a12" stroke-opacity="0.75" stroke-width="0.6" stroke-linejoin="round"/>
<path d="M42.14 703.97 L43.13 699.67 L44.89 694.68 L47.69 690.48 L51.29 685.59 L54.84 681.43 L58.27 679.06 L61.13 680.33 L64.3 682.31 L67.48 684.69 L70.13 683.01 L72.68 683.53 L75.54 684.77 L78.55 683.48 L80.85 681.78 L83.82 681.25 L86.85 679.58 L89.19 677.19 L92.14 676.97 L95.19 674.96 L96.56 670.68 L99.21 669.03 L103.24 668.87 L106.33 666.14 L108.09 661.15 L109.8 656.89 L110.44 652.56 L112.84 649.06 L116.2 647.8 L120.32 646.57 L123.73 644.58 L125.07 640.65 L127.71 639.72 L130.44 636.59 L132.83 633.46 L135.84 632.18 L139.09 632.71 L142.44 632.2 L145.32 633.06 L149.04 632.19 L153.43 632.44 L155.56 633.63 L155.93 639.84 L158.75 641.83 L163.16 641.7 L166.92 640.08 L168.93 637.28 L170.63 633.4 L174.03 631.41 L177.35 630.87 L179.34 628.45 L182.03 626.04 L184.81 628.75 L186.38 633.55 L188.23 639.47 L190.41 639.94 L192.43 642.96 L195.65 644.24 L197.93 643.27 L199.2 646.62 L199.18 653.16 L199.82 654.65 L197.85 656.72 L197.33 659.6 L200.22 660.49 L203.51 660.32 L205.46 658.6 L209.05 659.88 L211.14 661.82 L213.27 663.02 L214.55 660.18 L215.53 655.53 L217.94 652.41 L220.59 650.72 L223.6 649.44 L226.93 649.25 L228.56 646.43 L231.53 645.9 L234.47 645.69 L237.69 646.94 L241.3 647.9 L243.27 645.8 L245.75 647.04 L248.03 645.72 L250.16 646.94 L251.48 649.54 L253.56 651.49 L256.1 652.33 L258.49 655.02 L261.4 655.53 L263.7 653.86 L265.31 651.39 L267.54 650.82 L268.44 647.96 L270.76 645.88 L272.96 646.01 L275.88 646.17 L278.58 644.17 L282.55 645.09 L284.72 645.59 L287.15 648.25 L290.51 646.99 L293.45 646.8 L297.15 646.28 L299.93 648.97 L302.83 649.51 L305.57 652.95 L307.85 651.62 L310.69 653.23 L314.26 654.89 L316.22 658.98 L318.27 661.62 L318.81 664.94 L321.61 667.27 L325.2 668.58 L328.06 669.81 L331.2 672.9 L335.94 673.16 L338.36 675.83 L342.29 677.5 L345.92 678.08 L344.53 682.74 L342.6 684.78 L339.09 688.6 L337.68 693.61 L335.36 695.66 L335.06 700.73 L332.92 705.69 L332.36 709.3 L329.27 712.03 L325.49 714 L322.39 716.73 L321.32 722.49 L320.34 726.79 L320.86 730.46 L319.98 732.94 L317.72 733.91 L315.59 732.69 L311.91 732.86 L308.19 733.73 L304.49 734.28 L302.93 735.99 L300.73 735.87 L297.55 733.51 L295.16 730.85 L293.55 726.75 L292.68 723.07 L290.54 721.87 L287.73 719.88 L285.68 717.24 L282.82 715.97 L279.83 716.91 L276.82 718.2 L273.1 719.07 L269.4 719.59 L266.37 721.22 L263.93 719.28 L259.87 719.4 L256.28 718.12 L252.75 715.75 L249.93 713.79 L246.97 714.32 L242.51 715.18 L238.11 715.28 L234.38 716.17 L233.18 718.29 L230.74 721.78 L228.32 726.01 L226.65 729.55 L224.17 733.77 L221.46 736.53 L217.8 736.32 L214.06 737.57 L210.97 740.3 L207.87 743.03 L204.89 743.94 L201.85 745.6 L198.82 747.27 L196.84 743.49 L193.52 744.06 L192.87 742.2 L190.41 740.6 L187.53 739.72 L185.46 737.42 L182.43 739.08 L179.71 741.46 L178.07 744.28 L176.05 747.8 L172.33 748.69 L167.23 748.03 L162.72 749.96 L156.91 748.91 L151.39 748.98 L145.86 749.74 L141.43 750.22 L140.53 753.08 L138.12 756.58 L137.03 762.71 L138.72 764.95 L141.12 767.99 L135.92 769.16 L133.6 771.24 L129.15 772.06 L123.28 772.11 L117.36 772.86 L111.45 773.6 L110.03 772.83 L104.22 771.74 L98.39 771.07 L93.23 771.51 L88.13 770.85 L83.7 771.35 L79.77 769.3 L77.33 767.33 L74.13 765.35 L70.98 763 L68.23 759.94 L65.47 756.88 L62.74 753.44 L60.29 751.15 L57.12 749.14 L54.32 746.8 L51.35 747.37 L48.1 746.81 L47.11 744.6 L46.99 740.58 L44.63 736.82 L42.65 733.07 L41.84 728.32 L39.46 724.9 L38.23 720.85 L36.22 717.45 L36.9 712.4 L38.92 708.88 L41.69 705.75Z" fill="none" stroke="#1c2a12" stroke-opacity="0.8" stroke-width="0.7" stroke-linejoin="round"/>
</svg>
<div id="map">
<svg class="abs" style="left:0;top:0" width="1219" height="664" viewBox="365 144 1219 664">
<defs><filter id="bl" x="-5%" y="-5%" width="110%" height="110%"><feGaussianBlur stdDeviation="1.3"/></filter></defs>
<rect x="365" y="144" width="1219" height="664" fill="#f6f4ef"/>
<defs><filter id="sb" x="-10%" y="-10%" width="120%" height="120%"><feGaussianBlur stdDeviation="1.8"/></filter></defs>
<g filter="url(#sb)">
<path d="M585 294 L615 289 L640 299 L645 319 L630 334 L605 336.5 L587.5 324Z M515 339 L545 336.5 L565 351.5 L562.5 374 L540 384 L520 376.5 L512.5 356.5Z M412.5 319 L432.5 316.5 L437.5 334 L427.5 349 L415 344Z M460 279 L475 284 L480 304 L470 319 L457.5 309Z M640 334 L660 329 L665 359 L652.5 369 L635 359Z M520 379 L555 384 L565 404 L550 419 L525 409Z M585 206.5 L615 201.5 L625 219 L605 229 L585 224Z M925 209 L965 206.5 L990 219 L985 244 L955 249 L930 234Z M1040 284 L1077.5 279 L1090 299 L1065 314 L1045 304Z M1399 249 L1424 254 L1434 274 L1419 289 L1399 279Z M1534 284 L1564 279 L1584 294 L1584 334 L1554 334 L1534 314Z M1339 294 L1374 284 L1399 304 L1404 324 L1384 319 L1359 309Z M365 543 L395 538 L410 568 L390 588 L365 583Z M700 775.5 L740 768 L765 778 L765 808 L700 808Z M940 638 L965 633 L990 648 L990 683 L965 693 L945 678Z M805 693 L840 688 L865 708 L865 733 L835 743 L810 728Z M972.5 708 L1000 703 L1015 718 L1015 738 L985 743 L972.5 728Z M1025 713 L1060 710.5 L1085 723 L1080 753 L1045 758 L1025 738Z M1030 633 L1065 618 L1085 633 L1070 663 L1040 668Z M870 738 L905 743 L915 768 L890 778 L870 763Z M1246.5 550.5 L1266.5 543 L1289 555.5 L1304 575.5 L1299 593 L1279 598 L1256.5 588 L1244 568Z M765 181.5 L840 189 L905 209 L920 226.5 L905 244 L875 254 L870 234 L850 214 L815 204 L765 206.5Z M975 264 L1015 259 L1040 269 L1047.5 294 L1040 329 L1015 336.5 L990 341.5 L985 314 L970 294Z M1309 219 L1359 234 L1399 249 L1409 284 L1404 319 L1374 284 L1334 294 L1324 291.5 L1301.5 264 L1284 249Z M1434 274 L1466.5 286.5 L1501.5 299 L1516.5 319 L1509 344 L1471.5 334 L1439 324 L1409 319 L1419 294Z M650 279 L690 274 L725 294 L730 299 L697.5 284 L667.5 294 L660 324 L662.5 349 L640 349 L657.5 334 L655 299Z" fill="#e9efe0"/>
<path d="M667.5 294 L697.5 284 L730 299 L735 309 L715 324 L695 334 L690 344 L682.5 364 L675 369 L662.5 349 L660 324 L665 306.5Z M730 251.5 L755 241.5 L765 239 L765 274 L755 279 L735 274 L725 261.5Z M615 384 L640 369 L665 374 L680 384 L677.5 399 L660 409 L640 426.5 L620 426.5 L610 406.5Z M572.5 434 L605 426.5 L630 431.5 L615 444 L590 449 L575 444Z M497.5 444 L520 434 L540 439 L525 451.5 L505 459 L495 456.5Z M765 206.5 L815 204 L850 214 L870 234 L875 254 L895 249 L915 249 L885 269 L877.5 296.5 L840 304 L837.5 274 L815 269 L765 269Z M990 341.5 L1015 336.5 L1040 329 L1050 329 L1042.5 364 L1030 359 L1010 351.5 L985 359Z M1035 254 L1065 251.5 L1070 261.5 L1052.5 269 L1035 264Z M1102.5 276.5 L1135 274 L1165 269 L1165 294 L1140 299 L1115 294Z M940 254 L955 256.5 L952.5 269 L940 266.5Z M915 304 L940 309 L950 324 L940 334 L920 329 L910 319Z M1294 159 L1314 161.5 L1334 176.5 L1359 186.5 L1379 194 L1381.5 209 L1364 214 L1344 204 L1324 189 L1301.5 174Z M1434 184 L1464 189 L1491.5 191.5 L1516.5 209 L1526.5 229 L1531.5 249 L1516.5 269 L1501.5 289 L1484 294 L1466.5 284 L1449 269 L1429 254 L1444 239 L1459 231.5 L1454 209 L1436.5 199Z M1409 319 L1439 324 L1471.5 334 L1509 344 L1534 356.5 L1554 374 L1569 384 L1559 394 L1539 404 L1509 394 L1479 384 L1444 369 L1419 349 L1404 334Z M1269 239 L1284 249 L1301.5 264 L1316.5 284 L1324 291.5 L1291.5 294 L1284 276.5 L1271.5 256.5Z M1184 274 L1199 289 L1216.5 304 L1209 319 L1194 329 L1184 324Z M1494 396.5 L1519 401.5 L1554 414 L1564 426.5 L1554 439 L1529 431.5 L1501.5 424 L1479 434 L1481.5 414Z M380 638 L397.5 640.5 L400 653 L382.5 653Z M407.5 763 L447.5 763 L450 780.5 L410 783Z M1087.5 668 L1102.5 655.5 L1125 653 L1145 663 L1155 683 L1150 698 L1132.5 708 L1110 705.5 L1090 693 L1085 680.5Z M1216.5 683 L1234 675.5 L1244 688 L1234 703 L1219 700.5Z" fill="#d3e6c4"/>
</g>
<path d="M1471.5 306.5 L1476.5 309 L1479 319 L1474 316.5Z M440 713 L447.5 718 L445 733 L437.5 748 L427.5 758 L420 755.5 L422.5 738 L427.5 723Z M1150 788 L1160 785.5 L1165 793 L1155 800.5Z" fill="#bcd6e4"/>
<path d="M1284 653 C1286.9 651.3 1294.8 645.1 1301.5 643 C1308.2 640.9 1316.1 641.8 1324 640.5 C1331.9 639.2 1340.7 637.6 1349 635.5 C1357.3 633.4 1366.5 630.9 1374 628 C1381.5 625.1 1388.2 621.8 1394 618 C1399.8 614.2 1405.2 610.5 1409 605.5 C1412.8 600.5 1415.2 590.9 1416.5 588 M1436.5 598 C1436.9 602.2 1436.9 614.7 1439 623 C1441.1 631.3 1445.7 640.5 1449 648 C1452.3 655.5 1454.0 663.8 1459 668 C1464.0 672.2 1472.3 673.4 1479 673 C1485.7 672.6 1495.7 666.8 1499 665.5 M1284 653 C1285.2 655.5 1290.7 663.0 1291.5 668 C1292.3 673.0 1291.1 678.8 1289 683 C1286.9 687.2 1280.7 691.3 1279 693" fill="none" stroke="#cfe6c3" stroke-width="3.5" stroke-linecap="round"/>
<path d="M515 219 C516.7 224.0 524.2 239.8 525 249 C525.8 258.2 518.3 264.8 520 274 C521.7 283.2 529.2 294.0 535 304 C540.8 314.0 550.4 327.3 555 334 C559.6 340.7 561.2 342.3 562.5 344 M405 369 C405.4 373.2 408.3 385.7 407.5 394 C406.7 402.3 399.6 410.7 400 419 C400.4 427.3 408.3 439.8 410 444 M985 226.5 C986.7 229.4 990.8 238.6 995 244 C999.2 249.4 1006.7 252.3 1010 259 C1013.3 265.7 1014.2 279.8 1015 284 M1035 284 C1036.7 287.3 1040.8 299.0 1045 304 C1049.2 309.0 1057.5 312.3 1060 314 M1097.5 244 C1098.8 246.5 1104.6 254.0 1105 259 C1105.4 264.0 1100.8 271.5 1100 274 M945 284 C946.7 286.5 951.7 293.2 955 299 C958.3 304.8 963.3 315.7 965 319 M900 219 L905 239 M1077.5 224 C1079.2 226.5 1085.4 234.0 1087.5 239 C1089.6 244.0 1089.6 251.5 1090 254 M1140 239 C1141.7 242.3 1149.2 252.3 1150 259 C1150.8 265.7 1145.8 275.7 1145 279 M1399 194 C1400.7 198.2 1404.8 212.3 1409 219 C1413.2 225.7 1421.5 231.5 1424 234 M1374 229 C1375.7 232.3 1383.2 242.3 1384 249 C1384.8 255.7 1379.8 265.7 1379 269 M1459 294 C1460.7 298.2 1468.2 312.3 1469 319 C1469.8 325.7 1464.8 331.5 1464 334 M1419 264 C1417.3 267.3 1411.5 277.3 1409 284 C1406.5 290.7 1404.8 300.7 1404 304 M1489 234 C1490.7 237.3 1498.2 247.3 1499 254 C1499.8 260.7 1494.8 270.7 1494 274 M1289 219 C1290.7 222.3 1298.2 233.2 1299 239 C1299.8 244.8 1294.8 251.5 1294 254 M1544 244 C1545.7 247.3 1553.2 257.3 1554 264 C1554.8 270.7 1549.8 280.7 1549 284 M1229 249 C1230.7 252.3 1238.2 263.2 1239 269 C1239.8 274.8 1234.8 281.5 1234 284 M1359 274 C1360.7 277.3 1364.0 288.2 1369 294 C1374.0 299.8 1385.7 306.5 1389 309 M495 693 C498.3 695.5 509.2 702.2 515 708 C520.8 713.8 524.2 723.0 530 728 C535.8 733.0 544.2 733.0 550 738 C555.8 743.0 559.2 752.2 565 758 C570.8 763.8 578.3 770.1 585 773 C591.7 775.9 601.7 775.1 605 775.5 M505 693 C508.3 697.2 519.2 711.3 525 718 C530.8 724.7 534.2 728.0 540 733 C545.8 738.0 554.2 742.2 560 748 C565.8 753.8 572.5 764.7 575 768 M840 743 C842.5 744.7 850.8 748.0 855 753 C859.2 758.0 864.2 766.3 865 773 C865.8 779.7 860.0 787.2 860 793 C860.0 798.8 864.2 805.5 865 808 M965 713 C965.8 716.3 969.6 726.3 970 733 C970.4 739.7 967.9 749.7 967.5 753 M1459 543 C1460.7 547.2 1468.2 559.7 1469 568 C1469.8 576.3 1464.8 588.8 1464 593 M1494 568 C1495.7 572.2 1503.2 584.7 1504 593 C1504.8 601.3 1499.8 613.8 1499 618 M1534 518 C1535.7 522.2 1543.2 534.7 1544 543 C1544.8 551.3 1539.8 563.8 1539 568 M1224 613 C1226.5 616.3 1237.3 625.5 1239 633 C1240.7 640.5 1234.8 653.8 1234 658 M1324 648 C1326.5 651.3 1337.3 661.3 1339 668 C1340.7 674.7 1334.8 684.7 1334 688 M1434 563 C1437.3 563.8 1447.3 568.0 1454 568 C1460.7 568.0 1470.7 563.8 1474 563 M1519 658 L1524 683" fill="none" stroke="#b5d3ea" stroke-width="1.1" stroke-linecap="round"/>
<path d="M520 259 C517.5 261.5 508.8 267.3 505 274 C501.2 280.7 500.4 290.7 497.5 299 C494.6 307.3 490.4 316.9 487.5 324 C484.6 331.1 481.2 338.6 480 341.5 M555 279 C555.8 279.8 558.8 279.8 560 284 C561.2 288.2 561.7 296.9 562.5 304 C563.3 311.1 563.3 319.0 565 326.5 C566.7 334.0 570.4 343.6 572.5 349 C574.6 354.4 576.7 357.3 577.5 359 M402.5 364 C401.7 359.0 399.2 345.7 397.5 334 C395.8 322.3 393.8 307.8 392.5 294 C391.2 280.2 390.0 260.7 390 251.5 C390.0 242.3 392.1 241.1 392.5 239 M402.5 364 C398.8 362.8 386.2 358.6 380 356.5 C373.8 354.4 367.5 352.3 365 351.5 M365 431.5 C368.3 429.8 379.6 427.8 385 421.5 C390.4 415.2 394.6 403.6 397.5 394 C400.4 384.4 401.7 369.0 402.5 364 M455 364 C457.5 369.0 462.5 386.5 470 394 C477.5 401.5 490.0 404.8 500 409 C510.0 413.2 521.7 416.1 530 419 C538.3 421.9 544.2 422.3 550 426.5 C555.8 430.7 559.2 439.4 565 444 C570.8 448.6 581.7 452.3 585 454 M577.5 359 C583.8 358.6 604.6 358.2 615 356.5 C625.4 354.8 632.9 352.8 640 349 C647.1 345.2 655.0 342.3 657.5 334 C660.0 325.7 656.2 308.2 655 299 C653.8 289.8 652.5 285.7 650 279 C647.5 272.3 641.7 265.7 640 259 C638.3 252.3 640.0 242.3 640 239 M640 239 C642.5 242.3 649.2 253.2 655 259 C660.8 264.8 667.9 269.8 675 274 C682.1 278.2 690.0 280.7 697.5 284 C705.0 287.3 712.9 291.9 720 294 C727.1 296.1 736.7 296.1 740 296.5 M365 284 C367.5 280.2 375.8 266.9 380 261.5 C384.2 256.1 388.3 253.2 390 251.5 M520 259 C520.8 255.7 525.8 245.7 525 239 C524.2 232.3 518.3 226.5 515 219 C511.7 211.5 510.0 202.3 505 194 C500.0 185.7 490.8 177.3 485 169 C479.2 160.7 472.5 148.2 470 144 M565 261.5 L560 284 M590 261.5 C589.2 257.8 585.0 246.9 585 239 C585.0 231.1 590.8 222.3 590 214 C589.2 205.7 580.0 198.2 580 189 C580.0 179.8 589.2 166.5 590 159 C590.8 151.5 585.8 146.5 585 144 M660 224 C660.8 219.0 665.8 203.2 665 194 C664.2 184.8 659.2 176.1 655 169 C650.8 161.9 642.5 154.4 640 151.5 M690 209 C694.2 211.9 707.5 223.2 715 226.5 C722.5 229.8 726.7 230.2 735 229 C743.3 227.8 760.0 220.7 765 219 M577.5 359 C576.2 363.2 573.8 376.5 570 384 C566.2 391.5 558.3 396.9 555 404 C551.7 411.1 550.8 422.8 550 426.5 M430 434 C425.8 435.7 413.3 439.8 405 444 C396.7 448.2 384.2 456.5 380 459 M365 389 C369.2 389.8 384.6 393.2 390 394 C395.4 394.8 396.2 394.0 397.5 394 M1005 206.5 C1005.8 210.2 1008.3 221.1 1010 229 C1011.7 236.9 1012.5 245.7 1015 254 C1017.5 262.3 1020.8 271.5 1025 279 C1029.2 286.5 1036.2 292.3 1040 299 C1043.8 305.7 1045.8 314.0 1047.5 319 C1049.2 324.0 1049.6 327.3 1050 329 M972.5 264 C975.4 262.3 982.9 255.7 990 254 C997.1 252.3 1010.8 254.0 1015 254 M1015 229 C1019.2 227.3 1031.7 221.5 1040 219 C1048.3 216.5 1056.7 214.0 1065 214 C1073.3 214.0 1081.7 216.1 1090 219 C1098.3 221.9 1105.8 231.5 1115 231.5 C1124.2 231.5 1136.7 221.9 1145 219 C1153.3 216.1 1161.7 214.8 1165 214 M865 206.5 C866.2 209.8 872.5 219.4 872.5 226.5 C872.5 233.6 869.6 241.9 865 249 C860.4 256.1 848.3 265.7 845 269 M970 264 C969.6 267.3 968.3 278.2 967.5 284 C966.7 289.8 965.4 296.5 965 299 M765 219 C767.5 222.3 776.7 231.5 780 239 C783.3 246.5 784.2 259.8 785 264 M1184 244 C1187.3 244.4 1197.3 246.9 1204 246.5 C1210.7 246.1 1217.3 244.8 1224 241.5 C1230.7 238.2 1238.2 232.3 1244 226.5 C1249.8 220.7 1252.3 209.8 1259 206.5 C1265.7 203.2 1275.7 207.3 1284 206.5 C1292.3 205.7 1300.7 201.5 1309 201.5 C1317.3 201.5 1326.1 203.6 1334 206.5 C1341.9 209.4 1352.3 215.7 1356.5 219 C1360.7 222.3 1361.1 222.3 1359 226.5 C1356.9 230.7 1348.2 238.6 1344 244 C1339.8 249.4 1335.2 253.2 1334 259 C1332.8 264.8 1336.5 273.2 1336.5 279 C1336.5 284.8 1334.4 291.5 1334 294 M1359 226.5 C1360.7 230.2 1364.8 244.4 1369 249 C1373.2 253.6 1377.3 252.8 1384 254 C1390.7 255.2 1401.5 256.1 1409 256.5 C1416.5 256.9 1423.2 255.2 1429 256.5 C1434.8 257.8 1440.7 260.2 1444 264 C1447.3 267.8 1445.2 275.2 1449 279 C1452.8 282.8 1460.7 284.0 1466.5 286.5 C1472.3 289.0 1478.2 292.3 1484 294 C1489.8 295.7 1496.1 298.2 1501.5 296.5 C1506.9 294.8 1514.0 286.1 1516.5 284 M1369 144 C1368.6 147.3 1365.7 157.3 1366.5 164 C1367.3 170.7 1371.5 178.2 1374 184 C1376.5 189.8 1381.5 194.0 1381.5 199 C1381.5 204.0 1377.8 209.4 1374 214 C1370.2 218.6 1361.5 224.4 1359 226.5 M1429 256.5 C1433.2 257.3 1447.8 263.6 1454 261.5 C1460.2 259.4 1463.6 250.2 1466.5 244 C1469.4 237.8 1466.1 229.0 1471.5 224 C1476.9 219.0 1492.8 217.3 1499 214 C1505.2 210.7 1507.3 205.7 1509 204 M1541.5 159 L1534 189 M1474 459 C1474.8 454.4 1474.0 438.2 1479 431.5 C1484.0 424.8 1494.8 421.5 1504 419 C1513.2 416.5 1525.7 417.3 1534 416.5 C1542.3 415.7 1547.3 419.4 1554 414 C1560.7 408.6 1569.0 391.5 1574 384 C1579.0 376.5 1582.3 371.5 1584 369 M1269 144 C1271.5 149.0 1281.5 163.6 1284 174 C1286.5 184.4 1284.0 201.1 1284 206.5 M1574 284 C1574.8 289.8 1579.0 307.3 1579 319 C1579.0 330.7 1573.2 344.0 1574 354 C1574.8 364.0 1582.3 374.8 1584 379 M380 493 C382.5 497.2 391.2 507.6 395 518 C398.8 528.4 403.3 543.0 402.5 555.5 C401.7 568.0 393.8 580.1 390 593 C386.2 605.9 380.0 622.6 380 633 C380.0 643.4 388.3 651.8 390 655.5 M600 785.5 L615 808 M600 785.5 L580 808 M365 713 C369.2 712.2 381.7 710.1 390 708 C398.3 705.9 405.4 703.8 415 700.5 C424.6 697.2 437.9 690.9 447.5 688 C457.1 685.1 468.3 683.8 472.5 683 M447.5 688 C450.4 693.0 459.2 708.4 465 718 C470.8 727.6 475.8 737.2 482.5 745.5 C489.2 753.8 497.9 760.9 505 768 C512.1 775.1 519.2 781.3 525 788 C530.8 794.7 537.5 804.7 540 808 M390 655.5 C389.2 660.9 387.5 677.6 385 688 C382.5 698.4 375.8 708.8 375 718 C374.2 727.2 381.7 736.3 380 743 C378.3 749.7 367.5 755.5 365 758 M415 493 C415.8 498.0 420.4 512.2 420 523 C419.6 533.8 415.4 547.2 412.5 558 C409.6 568.8 404.2 583.0 402.5 588 M365 598 L390 593 M415 668 C414.2 673.0 410.0 692.6 410 698 C410.0 703.4 414.2 700.1 415 700.5 M380 743 C384.2 744.7 398.3 746.3 405 753 C411.7 759.7 414.2 773.8 420 783 C425.8 792.2 436.7 803.8 440 808 M482.5 745.5 C479.6 747.6 468.8 750.9 465 758 C461.2 765.1 459.2 779.7 460 788 C460.8 796.3 468.3 804.7 470 808 M505 700.5 C507.5 699.2 514.2 691.8 520 693 C525.8 694.2 536.7 705.5 540 708 M365 793 C369.2 792.2 380.8 789.7 390 788 C399.2 786.3 415.0 783.8 420 783 M440 493 C440.8 499.2 445.8 518.0 445 530.5 C444.2 543.0 435.8 556.8 435 568 C434.2 579.2 437.9 587.2 440 598 C442.1 608.8 442.1 618.8 447.5 633 C452.9 647.2 468.3 674.7 472.5 683 M990 653 C990.4 658.0 990.8 676.3 992.5 683 C994.2 689.7 993.8 692.2 1000 693 C1006.2 693.8 1020.0 690.5 1030 688 C1040.0 685.5 1052.5 685.5 1060 678 C1067.5 670.5 1071.2 652.2 1075 643 C1078.8 633.8 1078.8 628.8 1082.5 623 C1086.2 617.2 1095.0 610.5 1097.5 608 M1000 693 C995.8 695.5 980.4 701.3 975 708 C969.6 714.7 969.2 723.0 967.5 733 C965.8 743.0 964.2 755.5 965 768 C965.8 780.5 971.2 801.3 972.5 808 M1075 678 C1077.5 681.3 1087.1 691.3 1090 698 C1092.9 704.7 1094.2 711.3 1092.5 718 C1090.8 724.7 1079.2 730.1 1080 738 C1080.8 745.9 1094.6 760.9 1097.5 765.5 M1025 718 C1027.5 717.2 1032.5 714.2 1040 713 C1047.5 711.8 1061.2 709.7 1070 710.5 C1078.8 711.3 1088.8 716.8 1092.5 718 M1025 718 C1023.3 721.3 1013.8 731.3 1015 738 C1016.2 744.7 1029.2 753.0 1032.5 758 C1035.8 763.0 1034.6 766.3 1035 768 M835 678 C837.9 678.8 846.7 678.0 852.5 683 C858.3 688.0 867.9 700.5 870 708 C872.1 715.5 866.7 720.5 865 728 C863.3 735.5 860.0 744.7 860 753 C860.0 761.3 865.4 768.8 865 778 C864.6 787.2 858.8 803.0 857.5 808 M882.5 683 C881.2 686.3 877.1 698.8 875 703 C872.9 707.2 870.8 707.2 870 708 M1150 543 C1150.8 547.2 1152.9 558.8 1155 568 C1157.1 577.2 1160.8 587.2 1162.5 598 C1164.2 608.8 1164.6 627.2 1165 633 M925 668 C927.5 667.6 935.0 668.0 940 665.5 C945.0 663.0 946.7 655.1 955 653 C963.3 650.9 984.2 653.0 990 653 M797.5 743 C798.8 747.2 804.6 759.7 805 768 C805.4 776.3 799.2 786.3 800 793 C800.8 799.7 808.3 805.5 810 808 M1184 598 C1186.5 595.5 1192.8 588.0 1199 583 C1205.2 578.0 1214.0 573.0 1221.5 568 C1229.0 563.0 1239.0 557.2 1244 553 C1249.0 548.8 1250.2 544.7 1251.5 543 M1184 653 C1187.3 649.7 1196.5 640.9 1204 633 C1211.5 625.1 1222.3 609.2 1229 605.5 C1235.7 601.8 1239.0 605.1 1244 610.5 C1249.0 615.9 1253.6 630.5 1259 638 C1264.4 645.5 1271.5 652.2 1276.5 655.5 C1281.5 658.8 1286.9 657.6 1289 658 M1289 658 C1294.0 660.5 1309.8 665.9 1319 673 C1328.2 680.1 1337.3 693.0 1344 700.5 C1350.7 708.0 1356.5 715.1 1359 718 M1184 668 C1190.2 667.6 1209.0 667.2 1221.5 665.5 C1234.0 663.8 1247.8 659.2 1259 658 C1270.2 656.8 1284.0 658.0 1289 658 M1289 658 C1291.1 653.8 1297.3 640.9 1301.5 633 C1305.7 625.1 1310.2 617.2 1314 610.5 C1317.8 603.8 1319.8 596.3 1324 593 C1328.2 589.7 1333.6 588.4 1339 590.5 C1344.4 592.6 1351.5 603.4 1356.5 605.5 C1361.5 607.6 1366.5 600.9 1369 603 C1371.5 605.1 1365.7 614.7 1371.5 618 C1377.3 621.3 1399.4 618.0 1404 623 C1408.6 628.0 1401.1 639.7 1399 648 C1396.9 656.3 1394.8 668.0 1391.5 673 C1388.2 678.0 1381.1 677.2 1379 678 M1416.5 588 C1415.2 591.8 1411.1 604.7 1409 610.5 C1406.9 616.3 1404.8 620.9 1404 623 M1416.5 575.5 C1419.4 571.8 1428.6 559.7 1434 553 C1439.4 546.3 1442.8 537.2 1449 535.5 C1455.2 533.8 1463.6 539.2 1471.5 543 C1479.4 546.8 1489.0 553.8 1496.5 558 C1504.0 562.2 1509.4 567.2 1516.5 568 C1523.6 568.8 1530.2 566.3 1539 563 C1547.8 559.7 1561.5 551.3 1569 548 C1576.5 544.7 1581.5 543.8 1584 543 M1516.5 568 C1515.2 573.0 1509.8 588.8 1509 598 C1508.2 607.2 1511.5 615.5 1511.5 623 C1511.5 630.5 1504.4 638.0 1509 643 C1513.6 648.0 1529.0 651.3 1539 653 C1549.0 654.7 1561.5 654.7 1569 653 C1576.5 651.3 1581.5 644.7 1584 643 M1459 568 C1460.2 573.0 1462.3 590.9 1466.5 598 C1470.7 605.1 1476.9 610.5 1484 610.5 C1491.1 610.5 1504.8 600.1 1509 598 M1434 673 C1438.2 670.5 1450.7 661.8 1459 658 C1467.3 654.2 1475.7 653.0 1484 650.5 C1492.3 648.0 1504.8 644.2 1509 643 M1184 700.5 C1188.2 700.5 1198.6 699.7 1209 700.5 C1219.4 701.3 1236.1 705.5 1246.5 705.5 C1256.9 705.5 1262.8 700.9 1271.5 700.5 C1280.2 700.1 1294.4 702.6 1299 703 M1449 535.5 C1450.7 531.8 1454.8 520.1 1459 513 C1463.2 505.9 1471.5 496.3 1474 493 M1539 563 C1540.7 558.0 1544.0 542.2 1549 533 C1554.0 523.8 1563.2 513.0 1569 508 C1574.8 503.0 1581.5 503.8 1584 503 M1244 610.5 C1242.8 615.9 1240.2 633.8 1236.5 643 C1232.8 652.2 1224.0 661.8 1221.5 665.5 M1259 768 C1263.2 770.1 1277.3 773.8 1284 780.5 C1290.7 787.2 1296.5 803.4 1299 808 M1184 743 C1186.5 747.2 1192.3 760.5 1199 768 C1205.7 775.5 1218.2 781.3 1224 788 C1229.8 794.7 1232.3 804.7 1234 808 M1569 653 L1574 673 M375 655.5 L365 643 M375 655.5 C373.8 657.6 369.2 663.4 367.5 668 C365.8 672.6 365.4 680.5 365 683 M375 655.5 C375.8 658.4 380.4 666.8 380 673 C379.6 679.2 373.8 689.7 372.5 693 M375 655.5 C377.1 653.4 383.3 648.4 387.5 643 C391.7 637.6 397.9 626.3 400 623 M365 628 C367.1 628.8 372.9 633.8 377.5 633 C382.1 632.2 390.0 624.7 392.5 623 M370 683 C372.9 682.2 381.7 678.0 387.5 678 C393.3 678.0 402.1 682.2 405 683 M365 663 L380 665.5 M367.5 698 C370.4 697.2 380.4 692.2 385 693 C389.6 693.8 393.3 701.3 395 703 M390 655.5 C392.1 653.4 398.3 646.8 402.5 643 C406.7 639.2 410.4 635.5 415 633 C419.6 630.5 427.5 628.8 430 628 M415 668 C417.5 665.5 425.8 658.8 430 653 C434.2 647.2 438.3 636.3 440 633 M395 723 C398.3 723.8 409.2 724.7 415 728 C420.8 731.3 427.5 740.5 430 743 M365 733 C367.5 732.2 375.0 729.7 380 728 C385.0 726.3 392.5 723.8 395 723 M440 788 C443.3 788.0 453.3 786.3 460 788 C466.7 789.7 476.7 796.3 480 798 M505 768 C509.2 767.2 521.7 763.0 530 763 C538.3 763.0 550.8 767.2 555 768 M525 728 C527.5 726.3 534.2 719.7 540 718 C545.8 716.3 556.7 718.0 560 718 M470 808 C474.2 804.7 489.2 794.7 495 788 C500.8 781.3 503.3 771.3 505 768 M615 356.5 C616.7 361.1 625.0 375.7 625 384 C625.0 392.3 616.7 402.8 615 406.5 M472.5 349 C471.2 344.0 465.4 329.8 465 319 C464.6 308.2 469.2 289.8 470 284 M427.5 366.5 C429.6 361.1 434.6 341.9 440 334 C445.4 326.1 455.0 327.3 460 319 C465.0 310.7 468.3 289.8 470 284 M540 256.5 C540.8 250.2 545.8 229.4 545 219 C544.2 208.6 536.7 198.2 535 194 M620 251.5 C621.7 246.1 629.2 229.4 630 219 C630.8 208.6 625.8 194.0 625 189 M590 261.5 C592.5 265.2 598.3 278.6 605 284 C611.7 289.4 621.7 291.5 630 294 C638.3 296.5 650.8 298.2 655 299 M380 356.5 C379.2 350.2 375.0 329.4 375 319 C375.0 308.6 379.2 298.2 380 294 M495 334 C496.7 338.2 504.2 349.0 505 359 C505.8 369.0 500.8 388.2 500 394 M1015 254 C1019.2 255.7 1031.7 259.0 1040 264 C1048.3 269.0 1056.7 279.0 1065 284 C1073.3 289.0 1085.8 292.3 1090 294 M1065 214 C1066.7 218.2 1070.8 232.3 1075 239 C1079.2 245.7 1087.5 251.5 1090 254 M1115 231.5 C1116.7 235.2 1120.8 248.6 1125 254 C1129.2 259.4 1137.5 262.3 1140 264 M920 209 C923.3 211.5 931.7 220.7 940 224 C948.3 227.3 959.2 231.9 970 229 C980.8 226.1 999.2 210.2 1005 206.5 M1224 241.5 C1225.7 245.2 1233.2 256.9 1234 264 C1234.8 271.1 1229.8 280.7 1229 284 M1309 201.5 C1310.7 196.9 1318.2 183.6 1319 174 C1319.8 164.4 1314.8 149.0 1314 144 M1409 256.5 C1410.7 251.9 1419.0 237.8 1419 229 C1419.0 220.2 1409.8 213.2 1409 204 C1408.2 194.8 1413.2 179.0 1414 174 M1501.5 296.5 C1502.8 300.2 1508.6 311.1 1509 319 C1509.4 326.9 1504.8 339.8 1504 344 M1554 156.5 C1554.8 161.1 1555.7 176.1 1559 184 C1562.3 191.9 1571.5 200.7 1574 204 M990 683 C984.2 684.7 965.8 691.8 955 693 C944.2 694.2 930.0 690.9 925 690.5 M1030 688 L1040 708 M1097.5 765.5 C1100.4 761.8 1108.8 748.4 1115 743 C1121.2 737.6 1126.7 735.5 1135 733 C1143.3 730.5 1160.0 728.8 1165 728 M1130 783 C1131.7 778.8 1139.2 766.3 1140 758 C1140.8 749.7 1135.8 737.2 1135 733 M905 793 C903.3 788.8 895.0 776.3 895 768 C895.0 759.7 903.3 747.2 905 743 M955 780.5 C954.2 775.9 949.2 760.9 950 753 C950.8 745.1 958.3 736.3 960 733 M1065 770.5 C1064.2 774.2 1059.2 786.8 1060 793 C1060.8 799.2 1068.3 805.5 1070 808 M1020 765.5 C1019.2 769.2 1018.3 780.9 1015 788 C1011.7 795.1 1002.5 804.7 1000 808 M1319 673 C1319.8 678.0 1324.8 693.8 1324 703 C1323.2 712.2 1315.7 723.8 1314 728 M1344 700.5 C1349.0 701.8 1364.8 703.4 1374 708 C1383.2 712.6 1394.8 724.7 1399 728 M1221.5 665.5 C1222.8 670.1 1231.1 687.2 1229 693 C1226.9 698.8 1212.3 699.2 1209 700.5 M1246.5 705.5 C1248.6 710.1 1256.9 722.6 1259 733 C1261.1 743.4 1259.0 762.2 1259 768 M1484 650.5 L1479 683 M1539 653 C1539.8 658.0 1544.8 672.2 1544 683 C1543.2 693.8 1536.5 703.8 1534 718 C1531.5 732.2 1529.8 759.7 1529 768 M1459 658 C1458.2 653.8 1452.8 643.0 1454 633 C1455.2 623.0 1464.4 603.8 1466.5 598" fill="none" stroke="#f5d2a8" stroke-width="1.7" stroke-linecap="round"/>
<path d="M402.5 364 C406.7 364.4 418.8 366.5 427.5 366.5 C436.2 366.5 447.5 366.9 455 364 C462.5 361.1 465.8 354.0 472.5 349 C479.2 344.0 487.1 337.8 495 334 C502.9 330.2 510.0 327.3 520 326.5 C530.0 325.7 547.5 329.0 555 329 C562.5 329.0 563.3 326.9 565 326.5 M520 259 C523.3 258.6 532.5 256.1 540 256.5 C547.5 256.9 556.7 260.7 565 261.5 C573.3 262.3 580.8 263.2 590 261.5 C599.2 259.8 611.7 255.2 620 251.5 C628.3 247.8 633.3 243.6 640 239 C646.7 234.4 651.7 229.0 660 224 C668.3 219.0 681.7 214.8 690 209 C698.3 203.2 704.2 195.7 710 189 C715.8 182.3 720.0 174.8 725 169 C730.0 163.2 737.5 156.5 740 154 M402.5 364 C403.8 367.3 407.5 376.5 410 384 C412.5 391.5 414.2 400.7 417.5 409 C420.8 417.3 425.4 425.7 430 434 C434.6 442.3 442.5 454.8 445 459 M1514 144 C1517.3 145.7 1527.3 151.9 1534 154 C1540.7 156.1 1545.7 157.3 1554 156.5 C1562.3 155.7 1579.0 150.2 1584 149 M365 653 C369.2 653.4 381.7 653.0 390 655.5 C398.3 658.0 405.8 663.8 415 668 C424.2 672.2 435.4 678.0 445 680.5 C454.6 683.0 465.0 683.4 472.5 683 C480.0 682.6 487.1 678.8 490 678 M490 678 C492.5 681.8 499.2 692.2 505 700.5 C510.8 708.8 517.5 719.2 525 728 C532.5 736.8 541.2 745.1 550 753 C558.8 760.9 569.2 770.1 577.5 775.5 C585.8 780.9 589.6 784.7 600 785.5 C610.4 786.3 626.7 783.0 640 780.5 C653.3 778.0 667.5 772.6 680 770.5 C692.5 768.4 709.2 768.4 715 768 M865 808 C871.7 805.5 890.0 797.6 905 793 C920.0 788.4 940.8 784.7 955 780.5 C969.2 776.3 979.2 770.5 990 768 C1000.8 765.5 1007.5 765.1 1020 765.5 C1032.5 765.9 1051.7 770.1 1065 770.5 C1078.3 770.9 1089.2 765.9 1100 768 C1110.8 770.1 1119.2 778.8 1130 783 C1140.8 787.2 1159.2 791.3 1165 793" fill="none" stroke="#f3bf8a" stroke-width="2.1" stroke-linecap="round"/>
<path d="M427.5 144 L430 181.5 L440 209 L432.5 244 L440 284 L447.5 304 L457.5 279 L472.5 294 L485 314 L500 329 L505 359 L512.5 376.5 L497.5 394 L520 406.5 L540 419 L560 426.5 L577.5 439 L590 459 M560 169 L572.5 194 L600 206.5 L605 226.5 L627.5 244 L635 259 L655 269 L680 274 L710 279 L725 294 L732.5 304 M365 254 L380 246.5 L392.5 241.5 L392.5 219 M910 224 L920 216.5 L930 226.5 L927.5 244 M1239 144 L1244 154 L1259 159 L1256.5 169 L1249 174 L1254 184 L1269 189 L1259 204 L1269 219 L1271.5 244 L1279 264 L1281.5 284 L1284 294 M365 610.5 L380 615.5 L392.5 623 L395 643 L397.5 653 L385 655.5 L370 658 L365 668 M370 718 L397.5 723 L410 708 L420 693 L445 685.5 L460 678 L475 683 L482.5 668 L477.5 665.5 M832.5 683 L842.5 693 L832.5 708 L840 723 L857.5 738 L875 733 L905 743 L920 748 L925 763 L935 775.5 L945 763 L955 773 L960 793 L965 808 M825 753 L830 768 L817.5 773 L802.5 783 L790 808" fill="none" stroke="#a9a6bf" stroke-width="1.7" stroke-linejoin="round"/>
<path d="M710 144 L720 154 L740 156.5 L755 151.5 L765 156.5 M772.5 206.5 L780 216.5 L802.5 224 L810 244 L815 266.5 M1584 164 L1569 184 L1554 206.5 L1534 231.5 L1519 254 L1509 269 L1519 284 L1526.5 304 L1529 329 L1524 354 L1521.5 364 L1539 381.5 L1554 394 L1551.5 409 L1556.5 416.5 M1494 391.5 L1509 399 L1529 404 L1546.5 414 L1556.5 416.5 L1559 431.5 L1554 459 M365 788 L380 773 L392.5 760.5 L415 763 L427.5 780.5 L450 778 L452.5 768 L472.5 773 L495 773 L490 753 L485 733 L482.5 725.5 L495 718 L492.5 700.5 L500 690.5 M370 780.5 L380 793 L407.5 795.5 L415 808 M427.5 493 L440 498 L457.5 493 M1419 578 L1434 578 L1444 590.5 L1451.5 600.5 L1456.5 618 L1466.5 625.5 L1484 623 L1494 638 L1499 658 L1509 665.5 L1529 660.5 L1544 663 L1551.5 678 L1569 690.5 L1584 693 M1441.5 768 L1434 780.5 L1431.5 788" fill="none" stroke="#8f8da8" stroke-width="3.6" stroke-linejoin="round" stroke-linecap="round" opacity="0.9"/>
<g font-family="'DejaVu Sans','Liberation Sans',sans-serif" font-size="15.5" fill="#565656" stroke="#fbfaf7" stroke-width="2.2" paint-order="stroke" stroke-linejoin="round">
<text x="492.5" y="255" textLength="60" lengthAdjust="spacingAndGlyphs">Olomouc</text>
<text x="389.5" y="367.8" textLength="31" lengthAdjust="spacingAndGlyphs">Brno</text>
<text x="587" y="358.5" textLength="23" lengthAdjust="spacingAndGlyphs">Zlín</text>
<text x="685.8" y="187" textLength="54" lengthAdjust="spacingAndGlyphs">Ostrava</text>
<text x="643" y="452" textLength="47" lengthAdjust="spacingAndGlyphs">Trenčín</text>
<text x="1117.5" y="247" textLength="69" lengthAdjust="spacingAndGlyphs">Nowy Sącz</text>
<text x="777" y="360" textLength="35" lengthAdjust="spacingAndGlyphs">Žilina</text>
<text x="1326" y="226.5" textLength="45.5" lengthAdjust="spacingAndGlyphs">Krosno</text>
<text x="1503.5" y="202" textLength="58" lengthAdjust="spacingAndGlyphs">Przemyśl</text>
<text x="1231" y="422.8" textLength="43.5" lengthAdjust="spacingAndGlyphs">Prešov</text>
<text x="562.5" y="594" textLength="43.8" lengthAdjust="spacingAndGlyphs">Trnava</text>
<text x="660" y="612.5" textLength="31" lengthAdjust="spacingAndGlyphs">Nitra</text>
<text x="465" y="656" textLength="64" lengthAdjust="spacingAndGlyphs">Bratislava</text>
<text x="577.5" y="784" textLength="30" lengthAdjust="spacingAndGlyphs">Győr</text>
<text x="352" y="641" textLength="25" lengthAdjust="spacingAndGlyphs">Wien</text>
<text x="700" y="814" textLength="67" lengthAdjust="spacingAndGlyphs">Tatabánya</text>
<text x="952" y="673.5" textLength="74" lengthAdjust="spacingAndGlyphs">Salgótarján</text>
<text x="891" y="494" textLength="68.4" lengthAdjust="spacingAndGlyphs" font-weight="700">Slovensko</text>
<text x="1234" y="501" textLength="41" lengthAdjust="spacingAndGlyphs">Košice</text>
<text x="1417.8" y="528" textLength="58" lengthAdjust="spacingAndGlyphs">Ужгород</text>
<text x="1299.5" y="710.5" textLength="86" lengthAdjust="spacingAndGlyphs">Nyíregyháza</text>
<text x="1145.5" y="669" textLength="48.5" lengthAdjust="spacingAndGlyphs">Miskolc</text>
<text x="1515" y="754" textLength="69" lengthAdjust="spacingAndGlyphs">Satu Mare</text>
</g>
<path d="M465 540 L467.5 525 L472.5 507.5 L481.2 492.5 L492.5 475 L503.8 460 L515 451.2 L525 455 L536.2 461.2 L547.5 468.8 L556.2 462.5 L565 463.8 L575 467.5 L585 462.5 L592.5 456.2 L602.5 453.8 L612.5 447.5 L620 438.8 L630 437.5 L640 430 L643.8 415 L652.5 408.8 L666.2 407.5 L676.2 397.5 L681.2 380 L686.2 365 L687.5 350 L695 337.5 L706.2 332.5 L720 327.5 L731.2 320 L735 306.2 L743.8 302.5 L752.5 291.2 L760 280 L770 275 L781.2 276.2 L792.5 273.8 L802.5 276.2 L815 272.5 L830 272.5 L837.5 276.2 L840 297.5 L850 303.8 L865 302.5 L877.5 296.2 L883.8 286.2 L888.8 272.5 L900 265 L911.2 262.5 L917.5 253.8 L926.2 245 L936.2 253.8 L942.5 270 L950 290 L957.5 291.2 L965 301.2 L976.2 305 L983.8 301.2 L988.8 312.5 L990 335 L992.5 340 L986.2 347.5 L985 357.5 L995 360 L1006.2 358.8 L1012.5 352.5 L1025 356.2 L1032.5 362.5 L1040 366.2 L1043.8 356.2 L1046.2 340 L1053.8 328.8 L1062.5 322.5 L1072.5 317.5 L1083.8 316.2 L1088.8 306.2 L1098.8 303.8 L1108.8 302.5 L1120 306.2 L1132.5 308.8 L1138.8 301.2 L1147.5 305 L1155 300 L1162.5 303.8 L1167.5 312.5 L1175 318.8 L1183.8 321.2 L1192.5 330 L1202.5 331.2 L1210 325 L1215 316.2 L1222.5 313.8 L1225 303.8 L1232.5 296.2 L1240 296.2 L1250 296.2 L1258.8 288.8 L1272.5 291.2 L1280 292.5 L1288.8 301.2 L1300 296.2 L1310 295 L1322.5 292.5 L1332.5 301.2 L1342.5 302.5 L1352.5 313.8 L1360 308.8 L1370 313.8 L1382.5 318.8 L1390 332.5 L1397.5 341.2 L1400 352.5 L1410 360 L1422.5 363.8 L1432.5 367.5 L1443.8 377.5 L1460 377.5 L1468.8 386.2 L1482.5 391.2 L1495 392.5 L1491.2 408.8 L1485 416.2 L1473.8 430 L1470 447.5 L1462.5 455 L1462.5 472.5 L1456.2 490 L1455 502.5 L1445 512.5 L1432.5 520 L1422.5 530 L1420 550 L1417.5 565 L1420 577.5 L1417.5 586.2 L1410 590 L1402.5 586.2 L1390 587.5 L1377.5 591.2 L1365 593.8 L1360 600 L1352.5 600 L1341.2 592.5 L1332.5 583.8 L1326.2 570 L1322.5 557.5 L1315 553.8 L1305 547.5 L1297.5 538.8 L1287.5 535 L1277.5 538.8 L1267.5 543.8 L1255 547.5 L1242.5 550 L1232.5 556.2 L1223.8 550 L1210 551.2 L1197.5 547.5 L1185 540 L1175 533.8 L1165 536.2 L1150 540 L1135 541.2 L1122.5 545 L1118.8 552.5 L1111.2 565 L1103.8 580 L1098.8 592.5 L1091.2 607.5 L1082.5 617.5 L1070 617.5 L1057.5 622.5 L1047.5 632.5 L1037.5 642.5 L1027.5 646.2 L1017.5 652.5 L1007.5 658.8 L1000 646.2 L988.8 648.8 L986.2 642.5 L977.5 637.5 L967.5 635 L960 627.5 L950 633.8 L941.2 642.5 L936.2 652.5 L930 665 L917.5 668.8 L900 667.5 L885 675 L865 672.5 L846.2 673.8 L827.5 677.5 L812.5 680 L810 690 L802.5 702.5 L800 723.8 L806.2 731.2 L815 741.2 L797.5 746.2 L790 753.8 L775 757.5 L755 758.8 L735 762.5 L715 766.2 L710 763.8 L690 761.2 L670 760 L652.5 762.5 L635 761.2 L620 763.8 L606.2 757.5 L597.5 751.2 L586.2 745 L575 737.5 L565 727.5 L555 717.5 L545 706.2 L536.2 698.8 L525 692.5 L515 685 L505 687.5 L493.8 686.2 L490 678.8 L488.8 665 L480 652.5 L472.5 640 L468.8 623.8 L460 612.5 L455 598.8 L447.5 587.5 L448.8 570 L455 557.5 L463.8 546.2 Z" fill="none" stroke="#222" stroke-width="3.6" stroke-linejoin="round" opacity="0.5" filter="url(#bl)"/>
<path d="M802.5 702.5 L800 723.8 L806.2 731.2 L815 741.2 L797.5 746.2 L790 753.8 L775 757.5 L755 758.8 L735 762.5 L715 766.2 L710 763.8 L690 761.2 L670 760 L652.5 762.5 L635 761.2 L620 763.8 L606.2 757.5 L597.5 751.2 L586.2 745 L575 737.5 L565 727.5 L555 717.5 L545 706.2 L536.2 698.8 L525 692.5 L515 685 L505 687.5 L493.8 686.2 L490 678.8 L488.8 665 L480 652.5 L472.5 640 L468.8 623.8 L460 612.5 L455 598.8 L447.5 587.5 L448.8 570 L455 557.5 L463.8 546.2 L465 540 L467.5 525 L472.5 507.5 L481.2 492.5 L492.5 475 L503.8 460 L515 451.2 L525 455 L536.2 461.2 L547.5 468.8 L556.2 462.5 L565 463.8 L575 467.5 L585 462.5 L592.5 456.2 L602.5 453.8 L612.5 447.5 L620 438.8 L630 437.5 L630 437.5 L630 450 L637.5 467.5 L647.5 473.8 L657.5 480 L661.2 491.2 L660 498.8 L661.2 497.5 L672.5 501.2 L682.5 505 L690 512.5 L698.8 520 L705 528.8 L702.5 537.5 L708.8 546.2 L715 555 L705 562.5 L696.2 572.5 L701.2 582.5 L707.5 592.5 L710 603.8 L717.5 610 L730 616.2 L738.8 626.2 L725 633.8 L725 643.8 L735 655 L743.8 665 L738.8 672.5 L743.8 685 L745 697.5 L743.8 705 L760 710 L776.2 707.5 L800 702.5 Z M1288.8 301.2 L1300 296.2 L1310 295 L1322.5 292.5 L1332.5 301.2 L1342.5 302.5 L1352.5 313.8 L1360 308.8 L1370 313.8 L1382.5 318.8 L1390 332.5 L1397.5 341.2 L1400 352.5 L1410 360 L1422.5 363.8 L1432.5 367.5 L1443.8 377.5 L1460 377.5 L1468.8 386.2 L1482.5 391.2 L1495 392.5 L1491.2 408.8 L1485 416.2 L1473.8 430 L1470 447.5 L1462.5 455 L1462.5 472.5 L1456.2 490 L1455 502.5 L1445 512.5 L1432.5 520 L1422.5 530 L1420 550 L1417.5 565 L1420 577.5 L1417.5 586.2 L1410 590 L1402.5 586.2 L1390 587.5 L1377.5 591.2 L1365 593.8 L1360 600 L1352.5 600 L1341.2 592.5 L1332.5 583.8 L1326.2 570 L1322.5 557.5 L1315 553.8 L1305 547.5 L1297.5 538.8 L1287.5 535 L1277.5 538.8 L1267.5 543.8 L1255 547.5 L1242.5 550 L1232.5 556.2 L1223.8 550 L1210 551.2 L1197.5 547.5 L1185 540 L1175 533.8 L1165 536.2 L1150 540 L1135 541.2 L1122.5 545 L1118.8 552.5 L1111.2 565 L1103.8 580 L1098.8 592.5 L1091.2 607.5 L1082.5 617.5 L1070 617.5 L1057.5 622.5 L1047.5 632.5 L1037.5 642.5 L1027.5 646.2 L1017.5 652.5 L1007.5 658.8 L1006.2 653.8 L1013.8 630 L1008.8 620 L1002.5 605 L997.5 587.5 L1008.8 573.8 L1006.2 557.5 L996.2 547.5 L1002.5 537.5 L997.5 530 L990 520 L977.5 511.2 L985 502.5 L995 492.5 L1005 482.5 L1006.2 476.2 L1020 477.5 L1032.5 471.2 L1040 472.5 L1052.5 476.2 L1063.8 473.8 L1070 463.8 L1076.2 452.5 L1081.2 443.8 L1090 441.2 L1095 447.5 L1097.5 457.5 L1106.2 462.5 L1117.5 466.2 L1123.8 472.5 L1127.5 463.8 L1136.2 450 L1145 447.5 L1147.5 456.2 L1162.5 461.2 L1175 456.2 L1186.2 452.5 L1193.8 442.5 L1190 432.5 L1188.8 427.5 L1186.2 415 L1190 402.5 L1195 395 L1207.5 392.5 L1212.5 397.5 L1223.8 408.8 L1233.8 400 L1245 392.5 L1248.8 382.5 L1240 367.5 L1253.8 375 L1266.2 380 L1277.5 383.8 L1292.5 375 L1303.8 380 L1298.8 372.5 L1296.2 367.5 L1301.2 355 L1296.2 341.2 L1290 333.8 L1286.2 323.8 L1280 315 L1288.8 301.2 Z" fill="#2f8743" fill-opacity="0.72" stroke="none"/>
<path d="M630 437.5 L640 430 L643.8 415 L652.5 408.8 L666.2 407.5 L676.2 397.5 L681.2 380 L686.2 365 L687.5 350 L695 337.5 L706.2 332.5 L720 327.5 L731.2 320 L735 306.2 L743.8 302.5 L752.5 291.2 L760 280 L770 275 L781.2 276.2 L792.5 273.8 L802.5 276.2 L815 272.5 L830 272.5 L837.5 276.2 L840 297.5 L850 303.8 L865 302.5 L877.5 296.2 L883.8 286.2 L888.8 272.5 L900 265 L911.2 262.5 L917.5 253.8 L926.2 245 L936.2 253.8 L942.5 270 L950 290 L957.5 291.2 L965 301.2 L976.2 305 L983.8 301.2 L988.8 312.5 L990 335 L992.5 340 L986.2 347.5 L985 357.5 L995 360 L1006.2 358.8 L1012.5 352.5 L1025 356.2 L1032.5 362.5 L1040 366.2 L1043.8 356.2 L1046.2 340 L1053.8 328.8 L1062.5 322.5 L1072.5 317.5 L1083.8 316.2 L1088.8 306.2 L1098.8 303.8 L1108.8 302.5 L1120 306.2 L1132.5 308.8 L1138.8 301.2 L1147.5 305 L1155 300 L1162.5 303.8 L1167.5 312.5 L1175 318.8 L1183.8 321.2 L1192.5 330 L1202.5 331.2 L1210 325 L1215 316.2 L1222.5 313.8 L1225 303.8 L1232.5 296.2 L1240 296.2 L1250 296.2 L1258.8 288.8 L1272.5 291.2 L1280 292.5 L1288.8 301.2 L1288.8 301.2 L1280 315 L1286.2 323.8 L1290 333.8 L1296.2 341.2 L1301.2 355 L1296.2 367.5 L1298.8 372.5 L1303.8 380 L1292.5 375 L1277.5 383.8 L1266.2 380 L1253.8 375 L1240 367.5 L1248.8 382.5 L1245 392.5 L1233.8 400 L1223.8 408.8 L1212.5 397.5 L1207.5 392.5 L1195 395 L1190 402.5 L1186.2 415 L1188.8 427.5 L1190 432.5 L1193.8 442.5 L1186.2 452.5 L1175 456.2 L1162.5 461.2 L1147.5 456.2 L1145 447.5 L1136.2 450 L1127.5 463.8 L1123.8 472.5 L1117.5 466.2 L1106.2 462.5 L1097.5 457.5 L1095 447.5 L1090 441.2 L1081.2 443.8 L1076.2 452.5 L1070 463.8 L1063.8 473.8 L1052.5 476.2 L1040 472.5 L1032.5 471.2 L1020 477.5 L1006.2 476.2 L1005 482.5 L995 492.5 L985 502.5 L977.5 511.2 L990 520 L997.5 530 L1002.5 537.5 L996.2 547.5 L1006.2 557.5 L1008.8 573.8 L997.5 587.5 L1002.5 605 L1008.8 620 L1013.8 630 L1006.2 653.8 L1007.5 658.8 L1000 646.2 L988.8 648.8 L986.2 642.5 L977.5 637.5 L967.5 635 L960 627.5 L950 633.8 L941.2 642.5 L936.2 652.5 L930 665 L917.5 668.8 L900 667.5 L885 675 L865 672.5 L846.2 673.8 L827.5 677.5 L812.5 680 L810 690 L802.5 702.5 L800 702.5 L776.2 707.5 L760 710 L743.8 705 L745 697.5 L743.8 685 L738.8 672.5 L743.8 665 L735 655 L725 643.8 L725 633.8 L738.8 626.2 L730 616.2 L717.5 610 L710 603.8 L707.5 592.5 L701.2 582.5 L696.2 572.5 L705 562.5 L715 555 L708.8 546.2 L702.5 537.5 L705 528.8 L698.8 520 L690 512.5 L682.5 505 L672.5 501.2 L661.2 497.5 L660 498.8 L661.2 491.2 L657.5 480 L647.5 473.8 L637.5 467.5 L630 450 L630 437.5 Z" fill="#ffee10" fill-opacity="0.8" stroke="none"/>
<path d="M474.7 508.1 L483.1 505.3 L494.4 502.5 L504.7 499.7 L508.4 502.5 L516.9 497.8 L523.4 493.1 L533.8 488.4 L539.4 481.9 L542.2 478.1 L545.9 470.6 L548.8 466.9 M542.2 478.1 L552.5 477.2 L556.2 481.9 L563.8 488.4 L561.9 500.6 L567.5 510 L573.1 520.3 L578.8 517.5 L585.3 516.6 L591.9 511.9 L599.4 508.1 L606.9 505.3 L609.7 511.9 L620 516.6 L627.5 514.7 L635 518.4 L644.4 520.3 L655.6 524.1 L662.2 518.4 L661.2 508.1 L660.3 497.8 M590 460.3 L591.9 472.5 L592.8 480 L599.4 482.8 L605 489.4 L606.9 505.3 M467.2 542.8 L477.5 540 L488.8 538.1 L500 542.8 L518.8 536.2 L522.5 530.6 L536.6 513.8 L544.1 522.2 L537.5 534.4 L530 543.8 L539.4 549.4 L542.2 553.1 M542.2 553.1 L544.1 541.9 L552.5 537.2 L560 537.2 L565.6 530.6 L573.1 520.3 M542.2 553.1 L533.8 564.4 L537.5 570 L530 571.9 L523.4 575.6 L520.6 585 L514.1 589.7 L510.3 598.1 L509.4 607.5 L504.7 609.4 L505.6 616.9 L502.8 624.4 M468.1 623.4 L477.5 624.4 L490.2 628 M490.7 628 L493.4 625.3 L502.8 624.4 L508.2 628 M533.8 564.4 L541.2 570 L549.7 573.8 L552.5 580.3 L560 588.8 L563.8 598.1 L560 607.5 L569.4 616.9 L580.6 627.2 L588.1 618.8 L601.2 615 L606.9 607.5 L613.4 602.8 L605 595.3 L609.7 585 L608.8 575.6 L602.2 571.9 L601.2 560.6 L595.6 551.2 L591.9 547.5 L580.6 534.4 L581.6 522.2 L578.8 517.5 M560 607.5 L552.5 614.1 L541.2 617.8 L535.6 624.4 L527.8 628 M569.4 616.9 L563.8 628 M601.2 560.6 L611.6 563.4 L617.2 558.8 L618.1 551.2 L624.7 555 L631.2 550.3 L638.8 536.2 L641.6 530.6 L651.9 530.6 L655.6 524.1 M631.2 550.3 L641.6 558.8 L650.9 567.2 L662.2 568.1 L671.6 575.6 L685.6 571.9 L695.9 572.8 L702.5 566.2 L715.6 555 M650.9 567.2 L645.3 579.4 L639.7 587.8 L632.2 598.1 L627.5 596.2 L624.7 602.8 L613.4 602.8 M632.2 598.1 L633.1 609.4 L629.4 613.1 L636.9 615.9 L633.1 624.4 L634.9 628 M636.9 615.9 L643.4 616.9 L653.8 624.4 L656.8 628 M789.7 434.1 L800 427.5 L809.4 430.3 L818.8 433.1 L828.1 440.6 L837.5 448.1 L846.9 450.9 L857.2 450 L869.4 449.1 L880.6 447.2 L890 448.1 L891.9 454.7 L899.4 453.8 L905.9 445.3 L911.6 437.8 M789.7 434.1 L786.9 444.4 L787.8 457.5 L796.2 466.9 L803.8 476.2 L811.2 486.6 L820.6 482.8 L828.1 487.5 L842.2 486.6 M846.9 450.9 L842.2 457.5 L843.1 474.4 L842.2 486.6 L844.1 498.8 L848.8 505.3 L842.2 513.8 L842.2 525 L845 532.5 L838.4 540 L842.2 547.5 L844.1 555 L843.1 566.2 L846.9 573.8 M811.2 486.6 L805.6 498.8 L797.2 503.4 L790.6 519.4 L778.4 519.4 L783.1 528.8 L788.8 541.9 L794.4 555 L804.7 560.6 L815 554.1 L824.4 549.4 L831.9 541.9 L838.4 540 M778.4 519.4 L768.1 528.8 L758.8 532.5 L748.4 538.1 L743.8 530.6 L741.9 521.2 L743.8 513.8 L740 506.2 M748.4 538.1 L751.2 549.4 L757.8 555 L755.9 568.1 L761.6 575.6 L764.4 585 L762.5 596.2 L757.8 601.9 L745.6 605.6 L744.8 610 M757.8 601.9 L764.4 597.2 L780.3 596.2 L788.8 586.9 L796.2 580.3 L800 575.6 L809.4 573.8 L818.8 565.3 L813.1 562.5 L804.7 560.6 M800 575.6 L801.9 585 L809.4 592.5 L814.1 603.8 L816.9 608.4 L827.2 605.6 L832.8 600 L830.9 594.4 L835.6 585 L842.2 577.5 L846.9 573.8 M816.9 608.4 L816.2 610 M880.5 610 L880.6 607.5 L885.3 597.2 L882.5 591.6 L875 586.9 L865.6 585 L860 579.4 L853.4 576.6 L846.9 573.8 M848.8 505.3 L856.2 510 L867.5 517.5 L869.4 514.7 L878.8 513.8 L884.4 521.2 L895.6 516.6 L908.8 513.8 L920 512.8 L931.2 511.9 L927.5 504.4 L932.2 496.9 L927.5 485.6 L920 476.2 L914.4 468.8 L916.2 455.6 L911.6 448.1 L905.9 445.3 M931.2 511.9 L941.6 510.9 L951.9 513.8 L960.3 517.5 L966.9 523.1 L973.4 529.7 L962.2 537.2 L957.5 549.4 L950 545.6 L942.5 546.6 L935 551.2 L925.6 555 L921.9 559.7 L910.6 559.7 M966.9 523.1 L978.1 515.6 M931.2 512.8 L924.7 517.5 L916.2 525 L903.1 528.8 L905 533.4 L912.5 541.9 M899.4 534.4 L895.6 541.9 L893.8 554.1 L889.1 559.7 L893.8 568.1 L899.4 571.9 L905 579.4 L908.8 586.9 L910.6 596.2 L905 605.6 L905.4 610 M893.3 610 L890 601.9 L885.3 597.2 M910.6 559.7 L914.4 566.2 L910.6 570 L912.5 579.4 L915.3 585.9 L908.8 586.9 M915.3 585.9 L921.9 596.2 L927.5 600 L933.1 609.4 L933.6 610 M950 545.6 L953.8 555 L953.8 566.2 L959.4 573.8 L966.9 581.2 L962.2 585.9 L967.8 592.5 L980 590.6 L989.4 586.9 L998.8 586.9 M705 332.2 L706.9 342.5 L713.4 357.5 L720 359.4 L724.7 372.5 L731.2 385.6 L732.2 396.9 L729.4 404.4 L734.1 415.6 L744.4 426.9 M729.4 324.7 L731.2 335 L738.8 346.2 L742.5 359.4 L751.9 368.8 L759.4 374.4 L765.9 382.8 L768.8 382.8 M729.4 324.7 L744.4 320 L759.4 316.2 L768.8 318.1 L775.3 315.3 L784.7 317.2 L796.9 308.8 L805.3 316.2 L815.6 317.2 L822.2 322.8 L825 331.2 L827.8 337.8 L824.1 346.2 L815.6 342.5 L806.2 345.3 L798.8 339.7 L793.1 340.6 L787.5 329.4 L783.8 317.2 M768.8 318.1 L770.6 329.4 L776.2 342.5 L769.7 353.8 L770.6 365 L771.6 380 L768.8 382.8 L763.1 390.3 L769.7 396.9 L768.8 408.1 L763.1 415.6 L751.9 421.2 L744.4 426.9 M827.8 332.2 L836.2 328.4 L849.4 331.2 L864.4 330.3 L870 323.8 L866.2 312.5 L865.3 304.1 M864.4 330.3 L861.6 340.6 L860.6 353.8 L854.1 359.4 L841.9 365 L828.8 370.6 L817.5 375.3 L811.9 385.6 L806.2 395 L796.9 401.6 L793.1 411.9 L787.5 417.5 L778.1 425 L768.8 426.9 L765 425.9 L755.6 431.6 L746.2 433.4 L744.4 426.9 M870 323.8 L881.2 327.5 L886.9 338.8 L900 331.2 M860.6 353.8 L858.8 368.8 L868.1 378.1 L871.9 369.7 L881.2 378.1 L888.8 372.5 L900 375.3 M868.1 378.1 L864.4 393.1 L862.5 410 L866.2 426.9 L860.6 438.1 L856.9 451.2 L845.6 451.2 M682.5 378.1 L688.1 383.8 L695.6 393.1 L703.1 401.6 L710.6 404.4 L716.2 410 L723.8 415.6 L729.4 423.1 L737.8 424.1 L744.4 426.9 M678.8 399.7 L676.9 410 L680.6 421.2 L686.2 428.8 L684.4 434.4 L693.8 440 L705 438.1 L720 437.2 L731.2 434.4 L740.6 443.8 L750 438.1 L746.2 433.4 M720 437.2 L718.1 447.5 L705 453.1 L699.4 460.6 L698.4 466.1 M718.1 447.5 L725.6 455 L731.2 456.9 L735 466.1 M949.7 293.8 L942.2 303.1 L933.8 312.5 L922.5 321.9 L919.7 327.5 L930 336.9 L938.4 342.5 L942.2 350 L952.5 353.8 L961.9 355.6 L971.2 360.3 L983.4 359.4 M900 331.2 L909.4 332.2 L919.7 327.5 M942.2 350 L934.7 359.4 L926.2 368.8 L920.6 369.7 L907.5 368.8 L900 374.4 M920.6 369.7 L922.5 376.2 L926.2 381.9 L922.5 393.1 L917.8 406.2 L911.2 417.5 L908.4 428.8 L913.1 437.2 L924.4 436.2 L937.5 432.5 L952.5 433.4 L961.9 438.1 L975 441.9 L982.5 444.7 L993.8 440.9 L1005 443.8 L1016.2 442.8 L1022.8 440.9 L1029.4 443.8 L1042.5 443.8 L1055.6 447.5 L1061.2 440 L1072.5 441.9 L1085.6 436.2 L1080.9 432.5 L1087.5 426.9 L1098.8 421.2 L1106.2 415.6 L1113.8 408.1 M1007.8 359.4 L1010.6 368.8 L1012.5 376.2 L1008.8 380.9 L1020 374.4 L1023.8 373.4 L1017.2 380 L1016.2 385.6 L1029.4 387.5 L1030.3 398.8 L1029.4 410.9 L1020.9 412.8 L1023.8 419.4 L1031.2 430.6 L1034.1 437.2 L1029.4 443.8 M1059.4 327.5 L1063.1 333.1 L1066.9 336.9 L1074.4 335 L1083.8 339.7 L1084.7 347.2 L1091.2 353.8 L1092.2 359.4 L1088.4 361.2 L1093.1 367.8 L1085.6 370.6 L1087.5 374.4 L1079.1 375.3 L1078.1 380 L1085.6 385.6 L1091.2 393.1 L1095 399.7 L1102.5 405.3 L1113.8 408.1 L1112.8 404.4 L1123.1 401.6 L1126.9 393.1 L1134.4 385.6 L1143.8 374.4 L1152.2 368.8 L1162.5 361.2 L1168.1 353.8 L1185 354.7 L1186.9 357.5 L1200 357.5 M1105.3 303.1 L1103.4 314.4 L1099.7 327.5 L1104.4 333.1 L1115.6 327.5 L1119.4 340.6 L1126.9 350 L1136.2 361.2 L1143.8 374.4 L1155 381.9 L1166.2 384.7 L1177.5 391.2 L1186.9 395 L1192.5 395 M1106.2 415.6 L1113.8 421.2 L1115.6 417.5 L1121.2 414.7 L1125 420.3 L1134.4 425 L1140.9 428.8 L1149.4 426.9 L1160.6 425 L1166.2 423.1 L1168.1 418.4 L1177.5 419.4 L1179.4 423.1 L1186.9 424.1 M1350 316.6 L1359.4 323.1 L1366.9 332.5 L1362.2 343.8 L1358.4 355 L1351.9 360.6 L1355.6 371.9 L1363.1 381.2 L1374.4 387.8 L1380.9 385.9 L1385.6 381.2 L1396.9 379.4 L1406.2 371.9 L1411.9 360.6 M1351.9 360.6 L1346.2 371.9 L1344.4 381.2 L1348.1 390.6 L1350 401.9 L1347.2 409.4 L1352.8 418.8 L1355.6 428.1 L1351.9 437.5 L1353.8 445 M1421.2 446.9 L1425 437.5 L1419.4 433.8 L1417.5 430 L1411.9 433.8 L1404.4 432.8 L1396.9 428.1 L1401.6 422.5 L1403.4 415 L1410 411.2 L1411.9 401.9 L1415.6 392.5 L1410.9 385 L1413.8 375.6 L1418.4 362.5 M1425 437.5 L1434.4 438.4 L1438.1 452.5 L1447.5 453.4 L1462.5 453.4 M1307.8 475 L1304.1 461.9 L1298.4 450.6 L1297.5 439.4 L1292.8 428.1 L1288.1 420.6 L1284.4 411.2 L1290 400 L1293.8 394.4 L1305 397.2 L1310.6 388.8 L1314.4 385 L1312.5 382.2 L1305 379.4 L1302.2 379.4 M1314.4 385 L1321.9 396.2 L1329.4 403.8 L1333.1 397.2 L1342.5 390.6 L1344.4 381.2 M1314.4 385 L1315.3 373.8 L1318.1 362.5 L1318.1 349.4 L1324.7 341.9 L1324.7 334.4 L1333.1 330.6 L1335 325 L1340.6 323.1 L1345.3 334.4 L1349.1 334.4 L1346.2 323.1 L1350 316.6 M1200 326.9 L1207.5 331.6 L1210.3 338.1 L1207.5 349.4 L1213.1 355.9 L1224.4 355.9 L1230 355 L1235.6 360.6 L1240.3 368.1 M1005.6 478.1 L1011.2 481.9 L1017.8 487.5 L1019.7 496.9 L1026.2 504.4 L1028.1 511.9 L1032.8 522.2 L1039.4 530.6 L1044.1 539.1 L1040.3 543.8 L1045 547.5 L1050.6 544.7 L1053.4 555 L1063.8 562.5 L1067.5 570 L1074.1 575.6 L1078.8 581.2 L1091.9 582.2 L1098.4 577.5 L1103.1 579.4 M1060 476.2 L1062.8 481.9 L1059.1 488.4 L1064.7 495 L1073.1 502.5 L1078.8 511.9 L1080.6 522.2 L1088.1 527.8 L1090 536.2 L1086.2 545.6 L1081.6 553.1 L1082.5 561.6 L1088.1 565.3 L1099.4 566.2 L1105 563.4 L1110.6 564.4 M1121.9 472.5 L1125.6 480 L1129.4 485.6 L1135 488.4 L1139.7 485.6 L1144.4 490.3 L1145.3 498.8 L1150 504.4 L1159.4 508.1 L1168.8 510 L1173.4 515.6 L1178.1 521.2 L1172.5 524.1 L1170.6 532.5 M1159.4 508.1 L1163.1 495 L1172.5 489.4 L1180 481.9 L1189.4 479.1 L1198.8 480 L1205.3 476.2 L1211.9 480 L1214.7 470.6 L1221.2 463.1 L1217.5 457.5 L1219.4 448.1 L1220.3 444.4 L1213.8 442.5 L1208.1 435 L1203.4 428.4 L1195 429.4 L1189.4 426.6 M1220.3 444.4 L1230.6 448.1 L1241.9 450.9 L1253.1 453.8 L1256.9 463.1 L1261.6 467.8 L1268.1 465 L1275.6 458.4 L1278.4 451.9 L1285 450 L1290.6 451.9 L1300 454.7 M1234.4 467.8 L1241.9 471.6 L1249.4 480 L1256.9 474.4 L1262.5 476.2 L1266.2 485.6 L1270.9 502.5 L1272.8 515.6 L1262.5 515.6 L1249.4 516.6 L1245.6 521.2 L1251.2 530.6 L1247.5 535.3 L1241.9 530.6 L1240 523.1 L1233.4 520.3 L1232.5 511.9 L1240 510 L1240.9 502.5 L1243.8 498.8 L1238.1 493.1 L1234.4 483.8 L1231.6 476.2 L1234.4 467.8 M1308 475.2 L1320 479 L1329 478.2 L1335 482 L1342.5 479 L1350 477.5 L1355.2 474.5 L1353 462.5 L1353.8 449 L1353 444.5 L1350.8 440 M1308 475.2 L1308.8 488 L1307.2 500 L1305 510.5 L1309.5 518 L1313.2 524 L1306.5 527.8 L1303.5 530 L1305 536 L1303.5 543.5 M1342.5 479 L1347.8 483.5 L1346.2 488.8 L1341 491 L1344 500 L1350 507.5 L1354.5 515 L1356 528.5 L1358.2 542 L1361.2 548 L1357.5 554 L1359 565.2 L1365 560 L1374 554.8 L1387.5 553.2 L1398 551.8 L1405.5 557 L1414.5 563 L1417.5 570.5 M1353 444.5 L1362 447.5 L1374 449 L1381.5 454.2 L1384.5 458.8 L1396.5 461.8 L1405.5 460.2 L1414.5 459.5 L1416 449 L1421.2 448.2 L1422 455 L1419 465.5 L1414.5 470 L1408.5 473 L1407 483.5 L1403.2 486.5 L1405.5 498.5 L1408.5 501.5 L1405.5 506 L1407.8 512 L1411.5 516.5 L1416 525.5 L1420.5 534.5 M504 628 L508 630 L517 633 L519 640 L518 650 L526 660 L527 664 L517 666 L514 674 L512 678 L521 688 M517 633 L526 628 L526 628 M566.1 628 L570 635 L571 644 L562 651 L554 652 L548 647 L547 653 L535 660 L533 667 L540 669 L533 674 L530 679 L521 688 M562 651 L567 658 L575 662 L580 664 L586 663 L594 668 L604 674 L615 680 L622 688 L630 694 L637 704 L638 716 L632 726 L624 736 L618 746 L611 748 L609 756 L606 760 M656.5 628 L658 634 L654 640 L657 648 L660 650 M632.4 628 L633 634 L638 636 L628 640 L625 647 L616 652 L622 660 L625 672 L632 676 L638 684 L638 698 L646 701 L655 704 L658 694 L662 688 L658 676 L657 666 L660 660 L654 656 L660 650 M660 650 L666 654 L674 647 L684 641 L693 637 L695 645 L704 642 L706 636 L714 640 L723 643 M638 698 L638 704 M655 704 L660 700 L663 707 L672 706 L681 700 L686 702 L689 708 L698 705 L704 705 L712 710 L718 715 L722 711 L726 721 L734 730 L746 738 L757 744 L756 751 L753 759 M815.7 610 L814.9 619 L808.4 623.9 L810.1 633.6 L806.8 640.1 L808.4 646.6 L818.2 645 L820.6 649.1 L828.8 649.1 L832 645 L840.1 642.6 L849.9 640.1 L854.8 639.3 M882.4 610 L883.2 615.8 L882.4 623.9 L877.5 627.9 L874.2 628.8 L867.8 632 L862.9 634.4 L855.6 632.8 L853.9 636.1 L854.8 639.3 L853.9 645 L854.8 653.1 L852.3 659.6 L848.2 663.7 L846.6 669.4 L845.8 675.1 M893.5 610 L893.8 610.9 L900.2 614.1 L905.9 614.9 L905.5 610 M933.2 610 L936 615.8 L942.5 616.6 L944.1 622.2 L942.5 628.8 L943.3 635.2 M698.8 468.8 L700.6 476.2 L689.4 480.9 L681.9 485.6 L663.1 484.7 M740 485.6 L728.8 491.2 L729.7 502.5 L738.1 506.2 M729.7 502.5 L721.2 510 L710 511.9 L698.8 517.5 M715.6 555 L726.9 557.8 L740 549.4 M708.1 605.6 L717.5 611.2 L732.5 618.8 L740 615" fill="none" stroke="#161a12" stroke-width="1.75" stroke-linejoin="round" stroke-linecap="round"/>
<path d="M630 437.5 L630 450 L637.5 467.5 L647.5 473.8 L657.5 480 L661.2 491.2 L660 498.8 L661.2 497.5 L672.5 501.2 L682.5 505 L690 512.5 L698.8 520 L705 528.8 L702.5 537.5 L708.8 546.2 L715 555 L705 562.5 L696.2 572.5 L701.2 582.5 L707.5 592.5 L710 603.8 L717.5 610 L730 616.2 L738.8 626.2 L725 633.8 L725 643.8 L735 655 L743.8 665 L738.8 672.5 L743.8 685 L745 697.5 L743.8 705 L760 710 L776.2 707.5 L800 702.5 M1006.2 653.8 L1013.8 630 L1008.8 620 L1002.5 605 L997.5 587.5 L1008.8 573.8 L1006.2 557.5 L996.2 547.5 L1002.5 537.5 L997.5 530 L990 520 L977.5 511.2 L985 502.5 L995 492.5 L1005 482.5 L1006.2 476.2 L1020 477.5 L1032.5 471.2 L1040 472.5 L1052.5 476.2 L1063.8 473.8 L1070 463.8 L1076.2 452.5 L1081.2 443.8 L1090 441.2 L1095 447.5 L1097.5 457.5 L1106.2 462.5 L1117.5 466.2 L1123.8 472.5 L1127.5 463.8 L1136.2 450 L1145 447.5 L1147.5 456.2 L1162.5 461.2 L1175 456.2 L1186.2 452.5 L1193.8 442.5 L1190 432.5 L1188.8 427.5 L1186.2 415 L1190 402.5 L1195 395 L1207.5 392.5 L1212.5 397.5 L1223.8 408.8 L1233.8 400 L1245 392.5 L1248.8 382.5 L1240 367.5 L1253.8 375 L1266.2 380 L1277.5 383.8 L1292.5 375 L1303.8 380 L1298.8 372.5 L1296.2 367.5 L1301.2 355 L1296.2 341.2 L1290 333.8 L1286.2 323.8 L1280 315 L1288.8 301.2" fill="none" stroke="#161a12" stroke-width="1.8" stroke-linejoin="round"/>
<path d="M465 540 L467.5 525 L472.5 507.5 L481.2 492.5 L492.5 475 L503.8 460 L515 451.2 L525 455 L536.2 461.2 L547.5 468.8 L556.2 462.5 L565 463.8 L575 467.5 L585 462.5 L592.5 456.2 L602.5 453.8 L612.5 447.5 L620 438.8 L630 437.5 L640 430 L643.8 415 L652.5 408.8 L666.2 407.5 L676.2 397.5 L681.2 380 L686.2 365 L687.5 350 L695 337.5 L706.2 332.5 L720 327.5 L731.2 320 L735 306.2 L743.8 302.5 L752.5 291.2 L760 280 L770 275 L781.2 276.2 L792.5 273.8 L802.5 276.2 L815 272.5 L830 272.5 L837.5 276.2 L840 297.5 L850 303.8 L865 302.5 L877.5 296.2 L883.8 286.2 L888.8 272.5 L900 265 L911.2 262.5 L917.5 253.8 L926.2 245 L936.2 253.8 L942.5 270 L950 290 L957.5 291.2 L965 301.2 L976.2 305 L983.8 301.2 L988.8 312.5 L990 335 L992.5 340 L986.2 347.5 L985 357.5 L995 360 L1006.2 358.8 L1012.5 352.5 L1025 356.2 L1032.5 362.5 L1040 366.2 L1043.8 356.2 L1046.2 340 L1053.8 328.8 L1062.5 322.5 L1072.5 317.5 L1083.8 316.2 L1088.8 306.2 L1098.8 303.8 L1108.8 302.5 L1120 306.2 L1132.5 308.8 L1138.8 301.2 L1147.5 305 L1155 300 L1162.5 303.8 L1167.5 312.5 L1175 318.8 L1183.8 321.2 L1192.5 330 L1202.5 331.2 L1210 325 L1215 316.2 L1222.5 313.8 L1225 303.8 L1232.5 296.2 L1240 296.2 L1250 296.2 L1258.8 288.8 L1272.5 291.2 L1280 292.5 L1288.8 301.2 L1300 296.2 L1310 295 L1322.5 292.5 L1332.5 301.2 L1342.5 302.5 L1352.5 313.8 L1360 308.8 L1370 313.8 L1382.5 318.8 L1390 332.5 L1397.5 341.2 L1400 352.5 L1410 360 L1422.5 363.8 L1432.5 367.5 L1443.8 377.5 L1460 377.5 L1468.8 386.2 L1482.5 391.2 L1495 392.5 L1491.2 408.8 L1485 416.2 L1473.8 430 L1470 447.5 L1462.5 455 L1462.5 472.5 L1456.2 490 L1455 502.5 L1445 512.5 L1432.5 520 L1422.5 530 L1420 550 L1417.5 565 L1420 577.5 L1417.5 586.2 L1410 590 L1402.5 586.2 L1390 587.5 L1377.5 591.2 L1365 593.8 L1360 600 L1352.5 600 L1341.2 592.5 L1332.5 583.8 L1326.2 570 L1322.5 557.5 L1315 553.8 L1305 547.5 L1297.5 538.8 L1287.5 535 L1277.5 538.8 L1267.5 543.8 L1255 547.5 L1242.5 550 L1232.5 556.2 L1223.8 550 L1210 551.2 L1197.5 547.5 L1185 540 L1175 533.8 L1165 536.2 L1150 540 L1135 541.2 L1122.5 545 L1118.8 552.5 L1111.2 565 L1103.8 580 L1098.8 592.5 L1091.2 607.5 L1082.5 617.5 L1070 617.5 L1057.5 622.5 L1047.5 632.5 L1037.5 642.5 L1027.5 646.2 L1017.5 652.5 L1007.5 658.8 L1000 646.2 L988.8 648.8 L986.2 642.5 L977.5 637.5 L967.5 635 L960 627.5 L950 633.8 L941.2 642.5 L936.2 652.5 L930 665 L917.5 668.8 L900 667.5 L885 675 L865 672.5 L846.2 673.8 L827.5 677.5 L812.5 680 L810 690 L802.5 702.5 L800 723.8 L806.2 731.2 L815 741.2 L797.5 746.2 L790 753.8 L775 757.5 L755 758.8 L735 762.5 L715 766.2 L710 763.8 L690 761.2 L670 760 L652.5 762.5 L635 761.2 L620 763.8 L606.2 757.5 L597.5 751.2 L586.2 745 L575 737.5 L565 727.5 L555 717.5 L545 706.2 L536.2 698.8 L525 692.5 L515 685 L505 687.5 L493.8 686.2 L490 678.8 L488.8 665 L480 652.5 L472.5 640 L468.8 623.8 L460 612.5 L455 598.8 L447.5 587.5 L448.8 570 L455 557.5 L463.8 546.2 Z" fill="none" stroke="#1c1c1c" stroke-width="2" stroke-linejoin="round"/>
</svg><div style="position:absolute;left:14px;top:15px;width:42px;height:82px;box-sizing:border-box;background:#fff;border:1px solid #b5b5b5;border-radius:4px;box-shadow:0 1px 3px rgba(0,0,0,0.18);"><svg width="40" height="80" viewBox="0 0 40 80" style="position:absolute;left:0;top:0"><path d="M0 40h40" stroke="#c8c8c8" stroke-width="1"/><path d="M12.5 24.5h17M21 16v17" stroke="#1b5594" stroke-width="3.2" fill="none"/><path d="M12.5 63.5h17" stroke="#1b5594" stroke-width="3.2" fill="none"/></svg></div>
<div style="position:absolute;left:14px;top:111px;width:42px;height:43px;box-sizing:border-box;background:#fff;border:1px solid #b5b5b5;border-radius:4px;box-shadow:0 1px 3px rgba(0,0,0,0.18);"><svg width="40" height="40" viewBox="0 0 40 40" style="position:absolute;left:0;top:0"><path d="M11.5 18v-6.5h7M21.5 11.5h7v6.500M28.5 22v7h-7M18.500 29h-7v-7" stroke="#333" stroke-width="3" fill="none" stroke-linejoin="miter"/></svg></div>
<div style="position:absolute;left:80px;top:14px;width:114px;height:75px;box-sizing:border-box;background:#fff;border:1px solid #b5b5b5;border-radius:4px;box-shadow:0 1px 3px rgba(0,0,0,0.18);"><svg width="114" height="75" viewBox="445 158 114 75" style="position:absolute;left:-1px;top:-1px"><defs><clipPath id="cw"><rect x="452.5" y="200" width="98" height="30"/></clipPath><clipPath id="ct"><rect x="448" y="190.200" width="108" height="20"/></clipPath></defs><g fill="#1b6fc7" stroke="none"><rect x="500.600" y="172.500" width="2" height="17"/><rect x="487" y="180" width="25.500" height="1.500"/><ellipse cx="487.800" cy="180.750" rx="2.700" ry="1.400"/><path d="M512 176.200L517.900 173.800V187.700L512 185Z"/><ellipse cx="495.400" cy="169.900" rx="2.400" ry="3.300"/><ellipse cx="506.900" cy="169.900" rx="2.600" ry="3.300"/><ellipse cx="502.600" cy="168.800" rx="1.500" ry="2.200"/><rect x="495" y="169.300" width="12" height="1.300"/><rect x="542.200" y="192.300" width="2.400" height="2.600"/><rect x="452.500" y="204.600" width="98" height="1"/></g><g clip-path="url(#ct)"><text x="452.800" y="205" font-family="'Liberation Serif',serif" font-weight="700" font-size="22.600" textLength="97.500" lengthAdjust="spacingAndGlyphs" fill="#1b6fc7" stroke="#1b6fc7" stroke-width="0.550" stroke-linejoin="miter">SHMÚ</text></g><g clip-path="url(#cw)"><path d="M447.45 207.2 Q457.27 220.2 467.10 207.2 L465.60 208.79999999999998 Q457.27 212.5 448.95 208.79999999999998Z M464.10 207.2 Q473.92 220.2 483.75 207.2 L482.25 208.79999999999998 Q473.92 212.5 465.60 208.79999999999998Z M480.75 207.2 Q490.57 220.2 500.40 207.2 L498.90 208.79999999999998 Q490.57 212.5 482.25 208.79999999999998Z M497.40 207.2 Q507.22 220.2 517.05 207.2 L515.55 208.79999999999998 Q507.22 212.5 498.90 208.79999999999998Z M514.05 207.2 Q523.88 220.2 533.70 207.2 L532.20 208.79999999999998 Q523.88 212.5 515.55 208.79999999999998Z M530.70 207.2 Q540.52 220.2 550.35 207.2 L548.85 208.79999999999998 Q540.52 212.5 532.20 208.79999999999998Z M547.35 207.2 Q557.17 220.2 567.00 207.2 L565.50 208.79999999999998 Q557.17 212.5 548.85 208.79999999999998Z  M447.45 212.6 Q457.27 225.6 467.10 212.6 L465.60 214.2 Q457.27 217.9 448.95 214.2Z M464.10 212.6 Q473.92 225.6 483.75 212.6 L482.25 214.2 Q473.92 217.9 465.60 214.2Z M480.75 212.6 Q490.57 225.6 500.40 212.6 L498.90 214.2 Q490.57 217.9 482.25 214.2Z M497.40 212.6 Q507.22 225.6 517.05 212.6 L515.55 214.2 Q507.22 217.9 498.90 214.2Z M514.05 212.6 Q523.88 225.6 533.70 212.6 L532.20 214.2 Q523.88 217.9 515.55 214.2Z M530.70 212.6 Q540.52 225.6 550.35 212.6 L548.85 214.2 Q540.52 217.9 532.20 214.2Z M547.35 212.6 Q557.17 225.6 567.00 212.6 L565.50 214.2 Q557.17 217.9 548.85 214.2Z  M447.45 218.0 Q457.27 231.0 467.10 218.0 L465.60 219.6 Q457.27 223.3 448.95 219.6Z M464.10 218.0 Q473.92 231.0 483.75 218.0 L482.25 219.6 Q473.92 223.3 465.60 219.6Z M480.75 218.0 Q490.57 231.0 500.40 218.0 L498.90 219.6 Q490.57 223.3 482.25 219.6Z M497.40 218.0 Q507.22 231.0 517.05 218.0 L515.55 219.6 Q507.22 223.3 498.90 219.6Z M514.05 218.0 Q523.88 231.0 533.70 218.0 L532.20 219.6 Q523.88 223.3 515.55 219.6Z M530.70 218.0 Q540.52 231.0 550.35 218.0 L548.85 219.6 Q540.52 223.3 532.20 219.6Z M547.35 218.0 Q557.17 231.0 567.00 218.0 L565.50 219.6 Q557.17 223.3 548.85 219.6Z " fill="#1b6fc7"/></g></svg></div>
<div style="position:absolute;left:344px;top:14px;width:530px;height:47px;box-sizing:border-box;background:#fff;border:1px solid #b5b5b5;border-radius:4px;box-shadow:0 1px 3px rgba(0,0,0,0.18);"><div style="position:absolute;left:0;right:0;top:0;text-align:center;line-height:44px;font-size:21.3px;font-weight:700;color:#1b5594;white-space:nowrap;">Meteorologické výstrahy - Pondelok - 24.2.2025</div></div>
<div style="position:absolute;left:714px;top:574px;width:279px;height:50px;box-sizing:border-box;background:#fff;border:1px solid #b5b5b5;border-radius:4px;box-shadow:0 1px 3px rgba(0,0,0,0.18);"><div style="position:absolute;left:6px;top:5.5px;font-size:11.85px;line-height:18px;color:#111;white-space:nowrap;">Aktualizované: 23.2.2025 11:41<br>Najbližšia aktualizácia najneskôr: 23.2.2025 18:00</div></div>
<div style="position:absolute;left:1007px;top:534px;width:198px;height:90px;box-sizing:border-box;background:#fff;border:1px solid #b5b5b5;border-radius:4px;box-shadow:0 1px 3px rgba(0,0,0,0.18);"><div style="position:absolute;left:7px;top:8px;width:15.5px;height:15px;border-radius:2px;background:#528c48;"></div><div style="position:absolute;left:28px;top:7px;font-family:'DejaVu Sans','Liberation Sans',sans-serif;font-size:12.3px;line-height:18px;color:#222;white-space:nowrap;letter-spacing:-0.2px;">Bez nebezpečných javov</div><div style="position:absolute;left:7px;top:27px;width:15.5px;height:15px;border-radius:2px;background:#ffee1a;"></div><div style="position:absolute;left:28px;top:26px;font-family:'DejaVu Sans','Liberation Sans',sans-serif;font-size:12.3px;line-height:18px;color:#222;white-space:nowrap;letter-spacing:-0.2px;">1. stupeň</div><div style="position:absolute;left:7px;top:46px;width:15.5px;height:15px;border-radius:2px;background:#f68b2c;"></div><div style="position:absolute;left:28px;top:45px;font-family:'DejaVu Sans','Liberation Sans',sans-serif;font-size:12.3px;line-height:18px;color:#222;white-space:nowrap;letter-spacing:-0.2px;">2. stupeň</div><div style="position:absolute;left:7px;top:65px;width:15.5px;height:15px;border-radius:2px;background:#f01e1e;"></div><div style="position:absolute;left:28px;top:64px;font-family:'DejaVu Sans','Liberation Sans',sans-serif;font-size:12.3px;line-height:18px;color:#222;white-space:nowrap;letter-spacing:-0.2px;">3. stupeň</div></div>
<div style="position:absolute;right:0;bottom:0;height:21px;width:315px;background:rgba(255,255,255,0.8);font-size:15.6px;line-height:21px;color:#333;white-space:nowrap;"><svg width="16" height="11" viewBox="0 0 16 11" style="position:absolute;left:7px;top:5px"><rect width="16" height="5.5" fill="#4c7be1"/><rect y="5.5" width="16" height="5.5" fill="#ffd500"/></svg><span style="position:absolute;left:27px;top:0"><span style="color:#0078a8">Leaflet</span><span style="margin:0 5px 0 6px">|</span><span style="font-size:15.9px">© OpenStreetmap contributors</span></span></div>
</div>

<h2>Tabuľkové zobrazenie výstrah</h2>
<div id="tbl" style="position:absolute;left:0;top:0;width:1600px;height:1260px;font-size:18.5px;">
<div style="position:absolute;left:19px;top:877px;width:1565px;height:74px;background:#f2f7fd;"></div>
<div style="position:absolute;left:31px;top:877px;color:#1b5594;font-weight:700;line-height:37px;white-space:nowrap;">Región</div>
<div style="position:absolute;left:322px;top:877px;color:#1b5594;font-weight:700;line-height:37px;white-space:nowrap;">Jav</div>
<div style="position:absolute;left:380px;top:877px;color:#1b5594;font-weight:700;line-height:37px;white-space:nowrap;">Stupne v hodinových krokoch</div>
<svg style="position:absolute;left:30px;top:920px" width="46" height="20" viewBox="0 0 46 20"><path d="M1 9.5h18.8M10.4 0.200v18.600" stroke="#1b5594" stroke-width="5" fill="none"/><path d="M25 9.5h18.8" stroke="#1b5594" stroke-width="5" fill="none"/></svg>
<div style="position:absolute;left:369px;top:914px;width:51px;text-align:center;color:#1b5594;font-weight:700;line-height:37px;">0</div>
<div style="position:absolute;left:420px;top:914px;width:50px;text-align:center;color:#1b5594;font-weight:700;line-height:37px;">1</div>
<div style="position:absolute;left:470px;top:914px;width:51px;text-align:center;color:#1b5594;font-weight:700;line-height:37px;">2</div>
<div style="position:absolute;left:521px;top:914px;width:51px;text-align:center;color:#1b5594;font-weight:700;line-height:37px;">3</div>
<div style="position:absolute;left:572px;top:914px;width:50px;text-align:center;color:#1b5594;font-weight:700;line-height:37px;">4</div>
<div style="position:absolute;left:622px;top:914px;width:51px;text-align:center;color:#1b5594;font-weight:700;line-height:37px;">5</div>
<div style="position:absolute;left:673px;top:914px;width:50px;text-align:center;color:#1b5594;font-weight:700;line-height:37px;">6</div>
<div style="position:absolute;left:723px;top:914px;width:51px;text-align:center;color:#1b5594;font-weight:700;line-height:37px;">7</div>
<div style="position:absolute;left:774px;top:914px;width:51px;text-align:center;color:#1b5594;font-weight:700;line-height:37px;">8</div>
<div style="position:absolute;left:825px;top:914px;width:50px;text-align:center;color:#1b5594;font-weight:700;line-height:37px;">9</div>
<div style="position:absolute;left:875px;top:914px;width:51px;text-align:center;color:#1b5594;font-weight:700;line-height:37px;">10</div>
<div style="position:absolute;left:926px;top:914px;width:50px;text-align:center;color:#1b5594;font-weight:700;line-height:37px;">11</div>
<div style="position:absolute;left:976px;top:914px;width:51px;text-align:center;color:#1b5594;font-weight:700;line-height:37px;">12</div>
<div style="position:absolute;left:1027px;top:914px;width:51px;text-align:center;color:#1b5594;font-weight:700;line-height:37px;">13</div>
<div style="position:absolute;left:1078px;top:914px;width:50px;text-align:center;color:#1b5594;font-weight:700;line-height:37px;">14</div>
<div style="position:absolute;left:1128px;top:914px;width:51px;text-align:center;color:#1b5594;font-weight:700;line-height:37px;">15</div>
<div style="position:absolute;left:1179px;top:914px;width:51px;text-align:center;color:#1b5594;font-weight:700;line-height:37px;">16</div>
<div style="position:absolute;left:1230px;top:914px;width:50px;text-align:center;color:#1b5594;font-weight:700;line-height:37px;">17</div>
<div style="position:absolute;left:1280px;top:914px;width:51px;text-align:center;color:#1b5594;font-weight:700;line-height:37px;">18</div>
<div style="position:absolute;left:1331px;top:914px;width:51px;text-align:center;color:#1b5594;font-weight:700;line-height:37px;">19</div>
<div style="position:absolute;left:1382px;top:914px;width:50px;text-align:center;color:#1b5594;font-weight:700;line-height:37px;">20</div>
<div style="position:absolute;left:1432px;top:914px;width:51px;text-align:center;color:#1b5594;font-weight:700;line-height:37px;">21</div>
<div style="position:absolute;left:1483px;top:914px;width:50px;text-align:center;color:#1b5594;font-weight:700;line-height:37px;">22</div>
<div style="position:absolute;left:1533px;top:914px;width:51px;text-align:center;color:#1b5594;font-weight:700;line-height:37px;">23</div>
<svg style="position:absolute;left:43px;top:957px" width="20" height="20" viewBox="0 0 20 20"><path d="M0.100 9.500h18.800M9.500 0.300v18.400" stroke="#1b5594" stroke-width="5" fill="none"/></svg>
<div style="position:absolute;left:94px;top:951px;font-weight:700;line-height:36px;white-space:nowrap;color:#111;">Bratislavský kraj</div>
<div style="position:absolute;left:369px;top:951px;width:1215px;height:36px;background:#2e8540;"></div>
<svg style="position:absolute;left:43px;top:993px" width="20" height="20" viewBox="0 0 20 20"><path d="M0.100 9.500h18.800M9.500 0.300v18.400" stroke="#1b5594" stroke-width="5" fill="none"/></svg>
<div style="position:absolute;left:94px;top:987px;font-weight:700;line-height:37px;white-space:nowrap;color:#111;">Banskobystrický kraj</div>
<div style="position:absolute;left:331px;top:990px;width:32px;height:32px;"><svg width="32" height="32" viewBox="0 0 32 32" style="position:absolute;left:0;top:0"><rect x="0.6" y="0.6" width="30.8" height="30.8" rx="1.2" fill="#ffed00" stroke="#111" stroke-width="1.3"/><path d="M8 13.2 C8.6 10.6 10 9.9 12 10 L17.5 10.6 C19.6 11 20.2 12.6 20.4 15" fill="none" stroke="#4a4400" stroke-width="0.9"/><path d="M7.2 13.2 L20.4 16.2" stroke="#1a1800" stroke-width="2.3" stroke-linecap="round" fill="none"/><path d="M9.6 16.2 L17 17.9 C16.6 19.6 14.6 20.2 12.8 19.6 C11 19.2 9.8 18 9.6 16.2Z" fill="#8a8200"/><path d="M6.800 17.200 L8.900 17.800 L8.900 21.200 L7 20.600Z" fill="#111"/><path d="M16.800 19.200 L19.200 19.800 L18.800 22.400 L16.400 21.700Z" fill="#111"/><path d="M14.2 24.2 C17 24.6 19 24 20.4 21.6 C22 18.6 22.6 15.2 25.2 14.4 C26 14.3 26.4 14.6 26.6 15" fill="none" stroke="#2a2600" stroke-width="1.1" stroke-linecap="round"/></svg></div>
<div style="position:absolute;left:369px;top:987px;width:1215px;height:37px;background:#2e8540;"></div>
<div style="position:absolute;left:369px;top:987px;width:506px;height:37px;background:#ffed00;"></div>
<div style="position:absolute;left:369px;top:987px;width:51px;text-align:center;line-height:37px;color:#111;">1</div>
<div style="position:absolute;left:420px;top:987px;width:50px;text-align:center;line-height:37px;color:#111;">1</div>
<div style="position:absolute;left:470px;top:987px;width:51px;text-align:center;line-height:37px;color:#111;">1</div>
<div style="position:absolute;left:521px;top:987px;width:51px;text-align:center;line-height:37px;color:#111;">1</div>
<div style="position:absolute;left:572px;top:987px;width:50px;text-align:center;line-height:37px;color:#111;">1</div>
<div style="position:absolute;left:622px;top:987px;width:51px;text-align:center;line-height:37px;color:#111;">1</div>
<div style="position:absolute;left:673px;top:987px;width:50px;text-align:center;line-height:37px;color:#111;">1</div>
<div style="position:absolute;left:723px;top:987px;width:51px;text-align:center;line-height:37px;color:#111;">1</div>
<div style="position:absolute;left:774px;top:987px;width:51px;text-align:center;line-height:37px;color:#111;">1</div>
<div style="position:absolute;left:825px;top:987px;width:50px;text-align:center;line-height:37px;color:#111;">1</div>
<svg style="position:absolute;left:43px;top:1030px" width="20" height="20" viewBox="0 0 20 20"><path d="M0.100 9.500h18.800M9.500 0.300v18.400" stroke="#1b5594" stroke-width="5" fill="none"/></svg>
<div style="position:absolute;left:94px;top:1024px;font-weight:700;line-height:37px;white-space:nowrap;color:#111;">Trenčiansky kraj</div>
<div style="position:absolute;left:331px;top:1027px;width:32px;height:32px;"><svg width="32" height="32" viewBox="0 0 32 32" style="position:absolute;left:0;top:0"><rect x="0.6" y="0.6" width="30.8" height="30.8" rx="1.2" fill="#ffed00" stroke="#111" stroke-width="1.3"/><path d="M8 13.2 C8.6 10.6 10 9.9 12 10 L17.5 10.6 C19.6 11 20.2 12.6 20.4 15" fill="none" stroke="#4a4400" stroke-width="0.9"/><path d="M7.2 13.2 L20.4 16.2" stroke="#1a1800" stroke-width="2.3" stroke-linecap="round" fill="none"/><path d="M9.6 16.2 L17 17.9 C16.6 19.6 14.6 20.2 12.8 19.6 C11 19.2 9.8 18 9.6 16.2Z" fill="#8a8200"/><path d="M6.800 17.200 L8.900 17.800 L8.900 21.200 L7 20.600Z" fill="#111"/><path d="M16.800 19.200 L19.200 19.800 L18.800 22.400 L16.400 21.700Z" fill="#111"/><path d="M14.2 24.2 C17 24.6 19 24 20.4 21.6 C22 18.6 22.6 15.2 25.2 14.4 C26 14.3 26.4 14.6 26.6 15" fill="none" stroke="#2a2600" stroke-width="1.1" stroke-linecap="round"/></svg></div>
<div style="position:absolute;left:369px;top:1024px;width:1215px;height:37px;background:#2e8540;"></div>
<div style="position:absolute;left:369px;top:1024px;width:456px;height:37px;background:#ffed00;"></div>
<div style="position:absolute;left:369px;top:1024px;width:51px;text-align:center;line-height:37px;color:#111;">1</div>
<div style="position:absolute;left:420px;top:1024px;width:50px;text-align:center;line-height:37px;color:#111;">1</div>
<div style="position:absolute;left:470px;top:1024px;width:51px;text-align:center;line-height:37px;color:#111;">1</div>
<div style="position:absolute;left:521px;top:1024px;width:51px;text-align:center;line-height:37px;color:#111;">1</div>
<div style="position:absolute;left:572px;top:1024px;width:50px;text-align:center;line-height:37px;color:#111;">1</div>
<div style="position:absolute;left:622px;top:1024px;width:51px;text-align:center;line-height:37px;color:#111;">1</div>
<div style="position:absolute;left:673px;top:1024px;width:50px;text-align:center;line-height:37px;color:#111;">1</div>
<div style="position:absolute;left:723px;top:1024px;width:51px;text-align:center;line-height:37px;color:#111;">1</div>
<div style="position:absolute;left:774px;top:1024px;width:51px;text-align:center;line-height:37px;color:#111;">1</div>
<svg style="position:absolute;left:43px;top:1067px" width="20" height="20" viewBox="0 0 20 20"><path d="M0.100 9.500h18.800M9.500 0.300v18.400" stroke="#1b5594" stroke-width="5" fill="none"/></svg>
<div style="position:absolute;left:94px;top:1061px;font-weight:700;line-height:37px;white-space:nowrap;color:#111;">Košický kraj</div>
<div style="position:absolute;left:331px;top:1064px;width:32px;height:32px;"><svg width="32" height="32" viewBox="0 0 32 32" style="position:absolute;left:0;top:0"><rect x="0.6" y="0.6" width="30.8" height="30.8" rx="1.2" fill="#ffed00" stroke="#111" stroke-width="1.3"/><path d="M8 13.2 C8.6 10.6 10 9.9 12 10 L17.5 10.6 C19.6 11 20.2 12.6 20.4 15" fill="none" stroke="#4a4400" stroke-width="0.9"/><path d="M7.2 13.2 L20.4 16.2" stroke="#1a1800" stroke-width="2.3" stroke-linecap="round" fill="none"/><path d="M9.6 16.2 L17 17.9 C16.6 19.6 14.6 20.2 12.8 19.6 C11 19.2 9.8 18 9.6 16.2Z" fill="#8a8200"/><path d="M6.800 17.200 L8.900 17.800 L8.900 21.200 L7 20.600Z" fill="#111"/><path d="M16.800 19.200 L19.200 19.800 L18.800 22.400 L16.400 21.700Z" fill="#111"/><path d="M14.2 24.2 C17 24.6 19 24 20.4 21.6 C22 18.6 22.6 15.2 25.2 14.4 C26 14.3 26.4 14.6 26.6 15" fill="none" stroke="#2a2600" stroke-width="1.1" stroke-linecap="round"/></svg></div>
<div style="position:absolute;left:369px;top:1061px;width:1215px;height:37px;background:#2e8540;"></div>
<div style="position:absolute;left:369px;top:1061px;width:506px;height:37px;background:#ffed00;"></div>
<div style="position:absolute;left:369px;top:1061px;width:51px;text-align:center;line-height:37px;color:#111;">1</div>
<div style="position:absolute;left:420px;top:1061px;width:50px;text-align:center;line-height:37px;color:#111;">1</div>
<div style="position:absolute;left:470px;top:1061px;width:51px;text-align:center;line-height:37px;color:#111;">1</div>
<div style="position:absolute;left:521px;top:1061px;width:51px;text-align:center;line-height:37px;color:#111;">1</div>
<div style="position:absolute;left:572px;top:1061px;width:50px;text-align:center;line-height:37px;color:#111;">1</div>
<div style="position:absolute;left:622px;top:1061px;width:51px;text-align:center;line-height:37px;color:#111;">1</div>
<div style="position:absolute;left:673px;top:1061px;width:50px;text-align:center;line-height:37px;color:#111;">1</div>
<div style="position:absolute;left:723px;top:1061px;width:51px;text-align:center;line-height:37px;color:#111;">1</div>
<div style="position:absolute;left:774px;top:1061px;width:51px;text-align:center;line-height:37px;color:#111;">1</div>
<div style="position:absolute;left:825px;top:1061px;width:50px;text-align:center;line-height:37px;color:#111;">1</div>
<svg style="position:absolute;left:43px;top:1104px" width="20" height="20" viewBox="0 0 20 20"><path d="M0.100 9.500h18.800M9.500 0.300v18.400" stroke="#1b5594" stroke-width="5" fill="none"/></svg>
<div style="position:absolute;left:94px;top:1098px;font-weight:700;line-height:37px;white-space:nowrap;color:#111;">Nitriansky kraj</div>
<div style="position:absolute;left:331px;top:1101px;width:32px;height:32px;"><svg width="32" height="32" viewBox="0 0 32 32" style="position:absolute;left:0;top:0"><rect x="0.6" y="0.6" width="30.8" height="30.8" rx="1.2" fill="#ffed00" stroke="#111" stroke-width="1.3"/><path d="M8 13.2 C8.6 10.6 10 9.9 12 10 L17.5 10.6 C19.6 11 20.2 12.6 20.4 15" fill="none" stroke="#4a4400" stroke-width="0.9"/><path d="M7.2 13.2 L20.4 16.2" stroke="#1a1800" stroke-width="2.3" stroke-linecap="round" fill="none"/><path d="M9.6 16.2 L17 17.9 C16.6 19.6 14.6 20.2 12.8 19.6 C11 19.2 9.8 18 9.6 16.2Z" fill="#8a8200"/><path d="M6.800 17.200 L8.900 17.800 L8.900 21.200 L7 20.600Z" fill="#111"/><path d="M16.800 19.200 L19.200 19.800 L18.800 22.400 L16.400 21.700Z" fill="#111"/><path d="M14.2 24.2 C17 24.6 19 24 20.4 21.6 C22 18.6 22.6 15.2 25.2 14.4 C26 14.3 26.4 14.6 26.6 15" fill="none" stroke="#2a2600" stroke-width="1.1" stroke-linecap="round"/></svg></div>
<div style="position:absolute;left:369px;top:1098px;width:1215px;height:37px;background:#2e8540;"></div>
<div style="position:absolute;left:369px;top:1098px;width:354px;height:37px;background:#ffed00;"></div>
<div style="position:absolute;left:369px;top:1098px;width:51px;text-align:center;line-height:37px;color:#111;">1</div>
<div style="position:absolute;left:420px;top:1098px;width:50px;text-align:center;line-height:37px;color:#111;">1</div>
<div style="position:absolute;left:470px;top:1098px;width:51px;text-align:center;line-height:37px;color:#111;">1</div>
<div style="position:absolute;left:521px;top:1098px;width:51px;text-align:center;line-height:37px;color:#111;">1</div>
<div style="position:absolute;left:572px;top:1098px;width:50px;text-align:center;line-height:37px;color:#111;">1</div>
<div style="position:absolute;left:622px;top:1098px;width:51px;text-align:center;line-height:37px;color:#111;">1</div>
<div style="position:absolute;left:673px;top:1098px;width:50px;text-align:center;line-height:37px;color:#111;">1</div>
<svg style="position:absolute;left:43px;top:1141px" width="20" height="20" viewBox="0 0 20 20"><path d="M0.100 9.500h18.800M9.500 0.300v18.400" stroke="#1b5594" stroke-width="5" fill="none"/></svg>
<div style="position:absolute;left:94px;top:1135px;font-weight:700;line-height:36px;white-space:nowrap;color:#111;">Trnavský kraj</div>
<div style="position:absolute;left:369px;top:1135px;width:1215px;height:36px;background:#2e8540;"></div>
<svg style="position:absolute;left:43px;top:1177px" width="20" height="20" viewBox="0 0 20 20"><path d="M0.100 9.500h18.800M9.500 0.300v18.400" stroke="#1b5594" stroke-width="5" fill="none"/></svg>
<div style="position:absolute;left:94px;top:1171px;font-weight:700;line-height:37px;white-space:nowrap;color:#111;">Prešovský kraj</div>
<div style="position:absolute;left:331px;top:1174px;width:32px;height:32px;"><svg width="32" height="32" viewBox="0 0 32 32" style="position:absolute;left:0;top:0"><rect x="0.6" y="0.6" width="30.8" height="30.8" rx="1.2" fill="#ffed00" stroke="#111" stroke-width="1.3"/><path d="M8 13.2 C8.6 10.6 10 9.9 12 10 L17.5 10.6 C19.6 11 20.2 12.6 20.4 15" fill="none" stroke="#4a4400" stroke-width="0.9"/><path d="M7.2 13.2 L20.4 16.2" stroke="#1a1800" stroke-width="2.3" stroke-linecap="round" fill="none"/><path d="M9.6 16.2 L17 17.9 C16.6 19.6 14.6 20.2 12.8 19.6 C11 19.2 9.8 18 9.6 16.2Z" fill="#8a8200"/><path d="M6.800 17.200 L8.900 17.800 L8.900 21.200 L7 20.600Z" fill="#111"/><path d="M16.800 19.200 L19.200 19.800 L18.800 22.400 L16.400 21.700Z" fill="#111"/><path d="M14.2 24.2 C17 24.6 19 24 20.4 21.6 C22 18.6 22.6 15.2 25.2 14.4 C26 14.3 26.4 14.6 26.6 15" fill="none" stroke="#2a2600" stroke-width="1.1" stroke-linecap="round"/></svg></div>
<div style="position:absolute;left:369px;top:1171px;width:1215px;height:37px;background:#2e8540;"></div>
<div style="position:absolute;left:369px;top:1171px;width:506px;height:37px;background:#ffed00;"></div>
<div style="position:absolute;left:369px;top:1171px;width:51px;text-align:center;line-height:37px;color:#111;">1</div>
<div style="position:absolute;left:420px;top:1171px;width:50px;text-align:center;line-height:37px;color:#111;">1</div>
<div style="position:absolute;left:470px;top:1171px;width:51px;text-align:center;line-height:37px;color:#111;">1</div>
<div style="position:absolute;left:521px;top:1171px;width:51px;text-align:center;line-height:37px;color:#111;">1</div>
<div style="position:absolute;left:572px;top:1171px;width:50px;text-align:center;line-height:37px;color:#111;">1</div>
<div style="position:absolute;left:622px;top:1171px;width:51px;text-align:center;line-height:37px;color:#111;">1</div>
<div style="position:absolute;left:673px;top:1171px;width:50px;text-align:center;line-height:37px;color:#111;">1</div>
<div style="position:absolute;left:723px;top:1171px;width:51px;text-align:center;line-height:37px;color:#111;">1</div>
<div style="position:absolute;left:774px;top:1171px;width:51px;text-align:center;line-height:37px;color:#111;">1</div>
<div style="position:absolute;left:825px;top:1171px;width:50px;text-align:center;line-height:37px;color:#111;">1</div>
<svg style="position:absolute;left:43px;top:1214px" width="20" height="20" viewBox="0 0 20 20"><path d="M0.100 9.500h18.800M9.500 0.300v18.400" stroke="#1b5594" stroke-width="5" fill="none"/></svg>
<div style="position:absolute;left:94px;top:1208px;font-weight:700;line-height:37px;white-space:nowrap;color:#111;">Žilinský kraj</div>
<div style="position:absolute;left:331px;top:1211px;width:32px;height:32px;"><svg width="32" height="32" viewBox="0 0 32 32" style="position:absolute;left:0;top:0"><rect x="0.6" y="0.6" width="30.8" height="30.8" rx="1.2" fill="#ffed00" stroke="#111" stroke-width="1.3"/><path d="M8 13.2 C8.6 10.6 10 9.9 12 10 L17.5 10.6 C19.6 11 20.2 12.6 20.4 15" fill="none" stroke="#4a4400" stroke-width="0.9"/><path d="M7.2 13.2 L20.4 16.2" stroke="#1a1800" stroke-width="2.3" stroke-linecap="round" fill="none"/><path d="M9.6 16.2 L17 17.9 C16.6 19.6 14.6 20.2 12.8 19.6 C11 19.2 9.8 18 9.6 16.2Z" fill="#8a8200"/><path d="M6.800 17.200 L8.900 17.800 L8.900 21.200 L7 20.600Z" fill="#111"/><path d="M16.800 19.200 L19.200 19.800 L18.800 22.400 L16.400 21.700Z" fill="#111"/><path d="M14.2 24.2 C17 24.6 19 24 20.4 21.6 C22 18.6 22.6 15.2 25.2 14.4 C26 14.3 26.4 14.6 26.6 15" fill="none" stroke="#2a2600" stroke-width="1.1" stroke-linecap="round"/></svg></div>
<div style="position:absolute;left:369px;top:1208px;width:1215px;height:37px;background:#2e8540;"></div>
<div style="position:absolute;left:369px;top:1208px;width:456px;height:37px;background:#ffed00;"></div>
<div style="position:absolute;left:369px;top:1208px;width:51px;text-align:center;line-height:37px;color:#111;">1</div>
<div style="position:absolute;left:420px;top:1208px;width:50px;text-align:center;line-height:37px;color:#111;">1</div>
<div style="position:absolute;left:470px;top:1208px;width:51px;text-align:center;line-height:37px;color:#111;">1</div>
<div style="position:absolute;left:521px;top:1208px;width:51px;text-align:center;line-height:37px;color:#111;">1</div>
<div style="position:absolute;left:572px;top:1208px;width:50px;text-align:center;line-height:37px;color:#111;">1</div>
<div style="position:absolute;left:622px;top:1208px;width:51px;text-align:center;line-height:37px;color:#111;">1</div>
<div style="position:absolute;left:673px;top:1208px;width:50px;text-align:center;line-height:37px;color:#111;">1</div>
<div style="position:absolute;left:723px;top:1208px;width:51px;text-align:center;line-height:37px;color:#111;">1</div>
<div style="position:absolute;left:774px;top:1208px;width:51px;text-align:center;line-height:37px;color:#111;">1</div>
<div style="position:absolute;left:19px;top:877px;width:1565px;height:1px;background:rgba(176,182,190,0.78);"></div>
<div style="position:absolute;left:19px;top:914px;width:1565px;height:1px;background:rgba(176,182,190,0.78);"></div>
<div style="position:absolute;left:19px;top:951px;width:1565px;height:1px;background:rgba(176,182,190,0.78);"></div>
<div style="position:absolute;left:19px;top:987px;width:1565px;height:1px;background:rgba(176,182,190,0.78);"></div>
<div style="position:absolute;left:19px;top:1024px;width:1565px;height:1px;background:rgba(176,182,190,0.78);"></div>
<div style="position:absolute;left:19px;top:1061px;width:1565px;height:1px;background:rgba(176,182,190,0.78);"></div>
<div style="position:absolute;left:19px;top:1098px;width:1565px;height:1px;background:rgba(176,182,190,0.78);"></div>
<div style="position:absolute;left:19px;top:1135px;width:1565px;height:1px;background:rgba(176,182,190,0.78);"></div>
<div style="position:absolute;left:19px;top:1171px;width:1565px;height:1px;background:rgba(176,182,190,0.78);"></div>
<div style="position:absolute;left:19px;top:1208px;width:1565px;height:1px;background:rgba(176,182,190,0.78);"></div>
<div style="position:absolute;left:19px;top:1245px;width:1565px;height:1px;background:rgba(176,182,190,0.78);"></div>
<div style="position:absolute;left:19px;top:877px;width:1px;height:369px;background:rgba(176,182,190,0.78);"></div>
<div style="position:absolute;left:1583px;top:877px;width:1px;height:369px;background:rgba(176,182,190,0.78);"></div>
<div style="position:absolute;left:86px;top:914px;width:1px;height:332px;background:rgba(176,182,190,0.78);"></div>
<div style="position:absolute;left:311px;top:877px;width:1px;height:369px;background:rgba(176,182,190,0.78);"></div>
<div style="position:absolute;left:369px;top:877px;width:1px;height:369px;background:rgba(176,182,190,0.78);"></div>
<div style="position:absolute;left:420px;top:914px;width:1px;height:332px;background:rgba(176,182,190,0.78);"></div>
<div style="position:absolute;left:470px;top:914px;width:1px;height:332px;background:rgba(176,182,190,0.78);"></div>
<div style="position:absolute;left:521px;top:914px;width:1px;height:332px;background:rgba(176,182,190,0.78);"></div>
<div style="position:absolute;left:572px;top:914px;width:1px;height:332px;background:rgba(176,182,190,0.78);"></div>
<div style="position:absolute;left:622px;top:914px;width:1px;height:332px;background:rgba(176,182,190,0.78);"></div>
<div style="position:absolute;left:673px;top:914px;width:1px;height:332px;background:rgba(176,182,190,0.78);"></div>
<div style="position:absolute;left:723px;top:914px;width:1px;height:332px;background:rgba(176,182,190,0.78);"></div>
<div style="position:absolute;left:774px;top:914px;width:1px;height:332px;background:rgba(176,182,190,0.78);"></div>
<div style="position:absolute;left:825px;top:914px;width:1px;height:332px;background:rgba(176,182,190,0.78);"></div>
<div style="position:absolute;left:875px;top:914px;width:1px;height:332px;background:rgba(176,182,190,0.78);"></div>
<div style="position:absolute;left:926px;top:914px;width:1px;height:332px;background:rgba(176,182,190,0.78);"></div>
<div style="position:absolute;left:976px;top:914px;width:1px;height:332px;background:rgba(176,182,190,0.78);"></div>
<div style="position:absolute;left:1027px;top:914px;width:1px;height:332px;background:rgba(176,182,190,0.78);"></div>
<div style="position:absolute;left:1078px;top:914px;width:1px;height:332px;background:rgba(176,182,190,0.78);"></div>
<div style="position:absolute;left:1128px;top:914px;width:1px;height:332px;background:rgba(176,182,190,0.78);"></div>
<div style="position:absolute;left:1179px;top:914px;width:1px;height:332px;background:rgba(176,182,190,0.78);"></div>
<div style="position:absolute;left:1230px;top:914px;width:1px;height:332px;background:rgba(176,182,190,0.78);"></div>
<div style="position:absolute;left:1280px;top:914px;width:1px;height:332px;background:rgba(176,182,190,0.78);"></div>
<div style="position:absolute;left:1331px;top:914px;width:1px;height:332px;background:rgba(176,182,190,0.78);"></div>
<div style="position:absolute;left:1382px;top:914px;width:1px;height:332px;background:rgba(176,182,190,0.78);"></div>
<div style="position:absolute;left:1432px;top:914px;width:1px;height:332px;background:rgba(176,182,190,0.78);"></div>
<div style="position:absolute;left:1483px;top:914px;width:1px;height:332px;background:rgba(176,182,190,0.78);"></div>
<div style="position:absolute;left:1533px;top:914px;width:1px;height:332px;background:rgba(176,182,190,0.78);"></div>
</div>
<div class="dots" style="top:1259px"></div>
</body>
</html>
